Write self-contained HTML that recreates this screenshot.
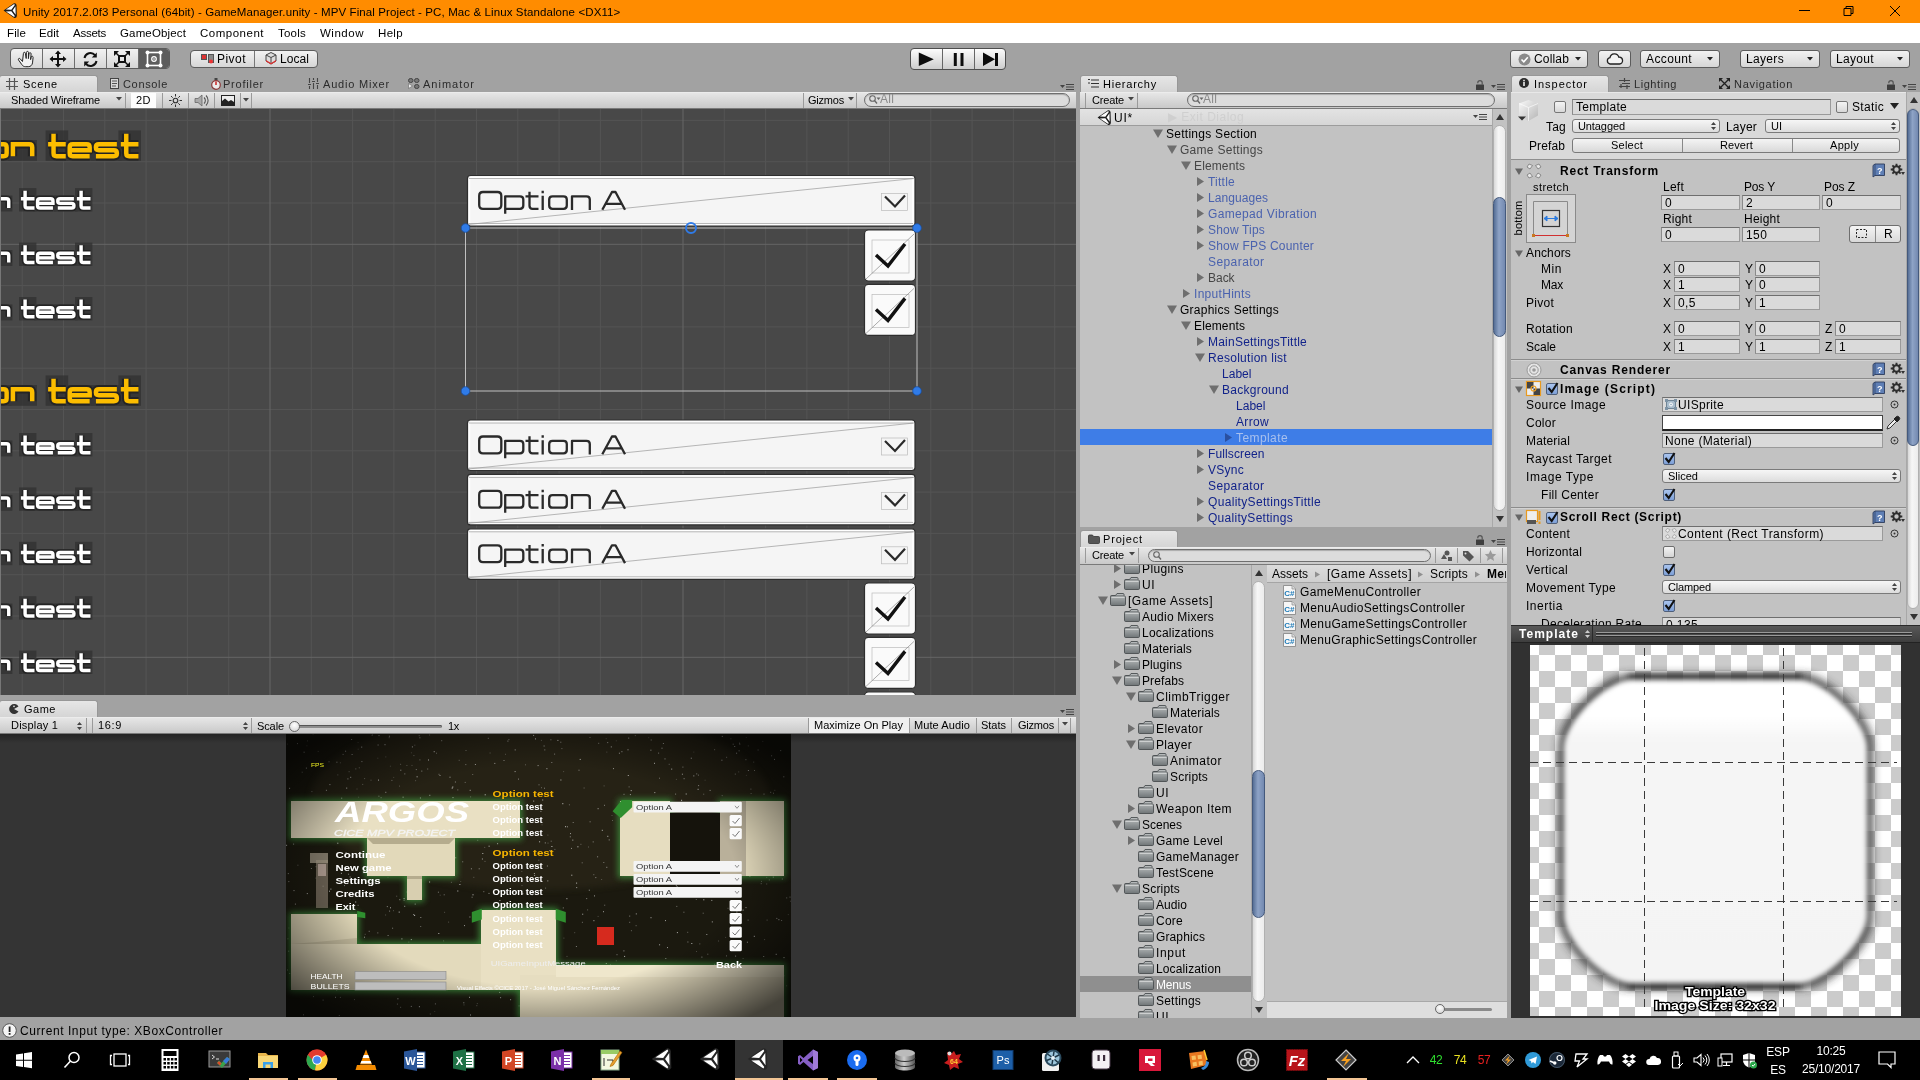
<!DOCTYPE html><html><head><meta charset="utf-8"><title>Unity</title><style>
*{box-sizing:border-box;margin:0;padding:0}
html,body{width:1920px;height:1080px;overflow:hidden;background:#a2a2a2;font-family:"Liberation Sans",sans-serif;font-size:12px;color:#000}
.a{position:absolute}
.t{position:absolute;white-space:nowrap;line-height:16px;height:16px;letter-spacing:0.45px;font-size:12px}
.b{font-weight:bold}
svg{position:absolute;overflow:visible}
</style></head><body><div id="root" style="position:absolute;left:0;top:0;width:1920px;height:1080px;will-change:transform">
<div class="a" style="left:0px;top:0px;width:1920px;height:23px;background:#ff8c00"></div>
<svg style="left:3px;top:3px" width="14" height="15.1" viewBox="0 0 21 22.600"><path d="M.8 11.300L16.500 .3Q19.800-.3 20.300 3L20.800 19.600Q20.300 22.900 17 22.300Z" fill="#1c1c1c"/><path d="M4.400 9.800L16.800 1.600 17.700 3.100 12.500 10.100ZM4.400 12.800L16.800 21 17.700 19.500 12.500 12.500ZM14.400 11.300L18.700 5 19 17.600Z" fill="#fff"/></svg>
<div class="t " style="left:23px;top:4px;font-size:11.5px;letter-spacing:0.105px;">Unity 2017.2.0f3 Personal (64bit) - GameManager.unity - MPV Final Project - PC, Mac &amp; Linux Standalone &lt;DX11&gt;</div>
<svg style="left:1790px;top:0" width="130" height="23"><path d="M9 10.5h11M54 8.5h7v7h-7zM56 8.5v-2h7v7h-2M100 6l10 10M110 6l-10 10" stroke="#000" stroke-width="1" fill="none"/></svg>
<div class="a" style="left:0px;top:23px;width:1920px;height:20px;background:#fff"></div>
<div class="t " style="left:7px;top:25px;font-size:11.5px;letter-spacing:0.113px;">File</div>
<div class="t " style="left:39px;top:25px;font-size:11.5px;letter-spacing:0.047px;">Edit</div>
<div class="t " style="left:73px;top:25px;font-size:11.5px;letter-spacing:-0.25px;">Assets</div>
<div class="t " style="left:120px;top:25px;font-size:11.5px;letter-spacing:0.148px;">GameObject</div>
<div class="t " style="left:200px;top:25px;font-size:11.5px;letter-spacing:0.509px;">Component</div>
<div class="t " style="left:278px;top:25px;font-size:11.5px;letter-spacing:0.231px;">Tools</div>
<div class="t " style="left:320px;top:25px;font-size:11.5px;letter-spacing:0.516px;">Window</div>
<div class="t " style="left:378px;top:25px;font-size:11.5px;letter-spacing:0.336px;">Help</div>
<div class="a" style="left:0px;top:43px;width:1920px;height:32px;background:#a2a2a2"></div>
<div class="a" style="left:10px;top:48px;width:160px;height:21px;background:linear-gradient(#f2f2f2,#d6d6d6);border:1px solid #5c5c5c;border-radius:4px;"></div>
<div class="a" style="left:138px;top:49px;width:31px;height:19px;background:#5d5d5d;border-radius:0 3px 3px 0"></div>
<div class="a" style="left:42px;top:49px;width:1px;height:19px;background:#6e6e6e"></div>
<div class="a" style="left:74px;top:49px;width:1px;height:19px;background:#6e6e6e"></div>
<div class="a" style="left:106px;top:49px;width:1px;height:19px;background:#6e6e6e"></div>
<div class="a" style="left:138px;top:49px;width:1px;height:19px;background:#6e6e6e"></div>
<svg style="left:16px;top:49px" width="20" height="20" viewBox="0 0 20 20"><path d="M6.500 12.500 4.200 9.800c-1-1.100-2.500.1-1.600 1.300l3.300 4.600c.9 1.300 2 2 3.800 2h2.600c2.400 0 3.900-1.700 4.200-3.800l.6-5.400c.2-1.500-1.700-1.800-2-.3l-.5 2.400.5-5.700c.1-1.500-1.900-1.700-2.100-.2l-.6 4.900.1-6.100c0-1.500-2.100-1.500-2.100 0l-.2 6-.8-5.200c-.2-1.500-2.200-1.200-2 .3z" fill="#f2f2f2" stroke="#222" stroke-width="1"/></svg>
<svg style="left:49px;top:50px" width="18" height="18" viewBox="0 0 18 18"><path d="M9 0.500 12 4H10V8H14V6l3.500 3-3.500 3V10H10v4h2l-3 3.500L6 14h2V10H4v2L.5 9 4 6v2h4V4H6z" fill="#111"/></svg>
<svg style="left:82px;top:51px" width="17" height="17" viewBox="0 0 17 17"><path d="M2.500 7A6 6 0 0 1 13 4.200M14.500 10A6 6 0 0 1 4 12.800" fill="none" stroke="#111" stroke-width="2"/><path d="M14.800 1.500v5h-5zM2.200 15.500v-5h5z" fill="#111"/></svg>
<svg style="left:113px;top:50px" width="18" height="18" viewBox="0 0 18 18"><rect x="6" y="6" width="6" height="6" fill="none" stroke="#111" stroke-width="2"/><path d="M1 1h5L1 6zM17 1v5L12 1zM1 17v-5l5 5zM17 17h-5l5-5z" fill="#111"/><path d="M2 2l4 4M16 2l-4 4M2 16l4-4M16 16l-4-4" stroke="#111" stroke-width="1.500"/></svg>
<svg style="left:145px;top:50px" width="18" height="18" viewBox="0 0 18 18"><rect x="2.500" y="2.500" width="13" height="13" fill="none" stroke="#fff" stroke-width="1.600"/><g fill="#fff"><circle cx="2.500" cy="2.500" r="2"/><circle cx="15.500" cy="2.500" r="2"/><circle cx="2.500" cy="15.500" r="2"/><circle cx="15.500" cy="15.500" r="2"/></g><circle cx="9" cy="9" r="2.300" fill="none" stroke="#fff" stroke-width="1.200"/><circle cx="9" cy="9" r=".8" fill="#fff"/></svg>
<div class="a" style="left:190px;top:50px;width:128px;height:18px;background:linear-gradient(#f2f2f2,#d6d6d6);border:1px solid #5c5c5c;border-radius:4px;"></div>
<div class="a" style="left:254px;top:51px;width:1px;height:16px;background:#777"></div>
<svg style="left:201px;top:54px" width="14" height="10"><rect x=".5" y=".5" width="5" height="5" fill="#d33" stroke="#555"/><rect x="7.500" y=".5" width="5" height="8" fill="#888" stroke="#555"/><circle cx="10" cy="7.500" r="2" fill="#e33"/></svg>
<div class="t " style="left:217px;top:51px;font-size:12px;letter-spacing:0.466px;">Pivot</div>
<svg style="left:265px;top:52px" width="12" height="13"><path d="M6 .5 11 3v6L6 12 1 9V3z" fill="#ddd" stroke="#444"/><path d="M1 3l5 2.500L11 3M6 5.500V12" stroke="#444" fill="none"/><path d="M1 8l5 3 5-3v1.500L6 12.500 1 9.500z" fill="#d33"/></svg>
<div class="t " style="left:280px;top:51px;font-size:12px;letter-spacing:0.062px;">Local</div>
<div class="a" style="left:910px;top:48px;width:96px;height:22px;background:linear-gradient(#fcfcfc,#cdcdcd);border:1px solid #4e4e4e;border-radius:4px;"></div>
<div class="a" style="left:942px;top:49px;width:1px;height:20px;background:#666"></div>
<div class="a" style="left:974px;top:49px;width:1px;height:20px;background:#666"></div>
<svg style="left:910px;top:48px" width="96" height="22"><path d="M8.800 4.400l15 6.800-15 6.700zM43.800 5h3v13h-3zM50.500 5h3v13h-3zM73 4.400l12 6.800-12 6.700zM85 5h3v13h-3z" fill="#0c0c0c"/></svg>
<div class="a" style="left:1510px;top:50px;width:78px;height:18px;background:linear-gradient(#f2f2f2,#d6d6d6);border:1px solid #5c5c5c;border-radius:4px;border-radius:3px;"></div>
<div class="t " style="left:1534px;top:51px;font-size:12px;letter-spacing:0.161px;">Collab</div>
<svg style="left:1575px;top:57px" width="7" height="4"><path d="M0 0h6L3 3.500z" fill="#222"/></svg>
<svg style="left:1518px;top:53px" width="13" height="13"><circle cx="6.500" cy="6.500" r="6" fill="#8a8a8a"/><path d="M3.500 6.500l2.300 2.300 4-4.500" stroke="#fff" stroke-width="1.600" fill="none"/></svg>
<div class="a" style="left:1598px;top:50px;width:33px;height:18px;background:linear-gradient(#f2f2f2,#d6d6d6);border:1px solid #5c5c5c;border-radius:4px;border-radius:3px;"></div>
<svg style="left:1606px;top:53px" width="18" height="12"><path d="M4 11a3.200 3.200 0 0 1 0-6.300 4.500 4.500 0 0 1 8.800-.5 3.300 3.300 0 0 1 .7 6.800z" fill="#f4f4f4" stroke="#222" stroke-width="1.300"/></svg>
<div class="a" style="left:1640px;top:50px;width:80px;height:18px;background:linear-gradient(#f2f2f2,#d6d6d6);border:1px solid #5c5c5c;border-radius:4px;border-radius:3px;"></div>
<div class="t " style="left:1646px;top:51px;font-size:12px;letter-spacing:0.379px;">Account</div>
<svg style="left:1707px;top:57px" width="7" height="4"><path d="M0 0h6L3 3.500z" fill="#222"/></svg>
<div class="a" style="left:1740px;top:50px;width:80px;height:18px;background:linear-gradient(#f2f2f2,#d6d6d6);border:1px solid #5c5c5c;border-radius:4px;border-radius:3px;"></div>
<div class="t " style="left:1746px;top:51px;font-size:12px;letter-spacing:0.331px;">Layers</div>
<svg style="left:1807px;top:57px" width="7" height="4"><path d="M0 0h6L3 3.500z" fill="#222"/></svg>
<div class="a" style="left:1830px;top:50px;width:80px;height:18px;background:linear-gradient(#f2f2f2,#d6d6d6);border:1px solid #5c5c5c;border-radius:4px;border-radius:3px;"></div>
<div class="t " style="left:1836px;top:51px;font-size:12px;letter-spacing:0.331px;">Layout</div>
<svg style="left:1897px;top:57px" width="7" height="4"><path d="M0 0h6L3 3.500z" fill="#222"/></svg>
<div class="a" style="left:-1px;top:75px;width:99px;height:18px;background:linear-gradient(#e6e6e6,#d4d4d4);border:1px solid #979797;border-bottom:none;border-radius:3px 3px 0 0;"></div>
<svg style="left:6px;top:78px" width="12" height="12"><path d="M3.500 0v12M8.500 0v12M0 3.500h12M0 8.500h12" stroke="#555" stroke-width="1.200"/></svg>
<div class="t " style="left:23px;top:76px;font-size:11px;letter-spacing:0.756px;">Scene</div>
<svg style="left:110px;top:78px" width="9" height="11"><rect x=".5" y=".5" width="8" height="10" fill="#d8d8d8" stroke="#444"/><path d="M2 3h5M2 5.500h5M2 8h4" stroke="#555"/></svg>
<div class="t " style="left:123px;top:76px;font-size:11px;letter-spacing:0.661px;color:#2b2b2b;">Console</div>
<svg style="left:211px;top:78px" width="10" height="12"><circle cx="5" cy="7" r="4.300" fill="#ececec" stroke="#8a3a3a" stroke-width="1.200"/><path d="M5 7V3.500" stroke="#c22" stroke-width="1.500"/><rect x="3.500" y="0" width="3" height="2" fill="#444"/></svg>
<div class="t " style="left:223px;top:76px;font-size:11px;letter-spacing:0.77px;color:#2b2b2b;">Profiler</div>
<svg style="left:308px;top:78px" width="11" height="11"><path d="M1.500 0v11M5.500 0v11M9.500 0v11" stroke="#444" stroke-width="1.100"/><path d="M0 6.500h3M4 3.500h3M8 5.500h3" stroke="#a2a2a2" stroke-width="3"/><path d="M0 6.500h3M4 3.500h3M8 5.500h3" stroke="#444" stroke-width="1.200"/></svg>
<div class="t " style="left:323px;top:76px;font-size:11px;letter-spacing:0.81px;color:#2b2b2b;">Audio Mixer</div>
<svg style="left:408px;top:78px" width="12" height="12"><g fill="#777" stroke="#444"><rect x=".5" y=".5" width="4.500" height="4" rx="2"/><rect x="6.500" y=".5" width="4.500" height="4" rx="2"/><rect x="6.500" y="6.500" width="4.500" height="4" rx="2"/></g><path d="M.5 5.500v5l4-2.500z" fill="#eee" stroke="#666" stroke-width=".6"/></svg>
<div class="t " style="left:423px;top:76px;font-size:11px;letter-spacing:0.996px;color:#2b2b2b;">Animator</div>
<svg style="left:1060px;top:84px" width="14" height="7"><path d="M0 1h5L2.500 4z" fill="#444"/><path d="M6 .5h8M6 3h8M6 5.500h8" stroke="#444" stroke-width="1"/></svg>
<div class="a" style="left:0px;top:92px;width:1076px;height:17px;background:linear-gradient(#e6e6e6,#c9c9c9);border-bottom:1px solid #7a7a7a;border-top:1px solid #ececec;"></div>
<div class="t " style="left:11px;top:92px;font-size:11px;letter-spacing:-0.172px;">Shaded Wireframe</div>
<svg style="left:116px;top:97px" width="6" height="4"><path d="M0 0h6L3 3.500z" fill="#444"/></svg>
<div class="a" style="left:125px;top:93px;width:1px;height:15px;background:#9a9a9a"></div>
<div class="a" style="left:162px;top:93px;width:1px;height:15px;background:#9a9a9a"></div>
<div class="a" style="left:188px;top:93px;width:1px;height:15px;background:#9a9a9a"></div>
<div class="a" style="left:214px;top:93px;width:1px;height:15px;background:#9a9a9a"></div>
<div class="a" style="left:240px;top:93px;width:1px;height:15px;background:#9a9a9a"></div>
<div class="a" style="left:251px;top:93px;width:1px;height:15px;background:#9a9a9a"></div>
<div class="a" style="left:803px;top:93px;width:1px;height:15px;background:#9a9a9a"></div>
<div class="a" style="left:856px;top:93px;width:1px;height:15px;background:#9a9a9a"></div>
<div class="a" style="left:131px;top:93px;width:25px;height:15px;background:#fdfdfd"></div>
<div class="t " style="left:136px;top:92px;font-size:11px;letter-spacing:0.469px;">2D</div>
<svg style="left:169px;top:94px" width="13" height="13"><circle cx="6.500" cy="6.500" r="2.300" fill="none" stroke="#333" stroke-width="1.100"/><path d="M6.500 0v2.500M6.500 10.500V13M0 6.500h2.500M10.500 6.500H13M2 2l1.700 1.700M9.300 9.300L11 11M2 11l1.700-1.700M9.300 3.700L11 2" stroke="#333" stroke-width="1"/></svg>
<svg style="left:194px;top:94px" width="15" height="13"><path d="M1 4.500h3L8 1v11L4 8.500H1z" fill="#aaa" stroke="#666" stroke-width=".8"/><path d="M10 3.500a4 4 0 0 1 0 6M12 1.500a7 7 0 0 1 0 10" fill="none" stroke="#555" stroke-width="1.100"/></svg>
<svg style="left:221px;top:95px" width="14" height="11"><rect x=".5" y=".5" width="13" height="10" fill="#eee" stroke="#222"/><path d="M1 10V6l3-2.500 3.500 3L10 5l3 2v3z" fill="#222"/></svg>
<svg style="left:243px;top:98px" width="6" height="4"><path d="M0 0h6L3 3.500z" fill="#444"/></svg>
<div class="t " style="left:808px;top:92px;font-size:11px;letter-spacing:-0.214px;">Gizmos</div>
<svg style="left:848px;top:97px" width="6" height="4"><path d="M0 0h6L3 3.500z" fill="#444"/></svg>
<div class="a" style="left:864px;top:93px;width:206px;height:14px;background:#dcdcdc;border:1px solid #6f6f6f;border-radius:7px;box-shadow:inset 0 1px 1px #aaa"></div>
<svg style="left:869px;top:95px" width="12" height="10"><circle cx="3.500" cy="3.500" r="2.800" fill="none" stroke="#666" stroke-width="1.100"/><path d="M5.500 5.500l2.500 3" stroke="#666" stroke-width="1.300"/><path d="M7.500 2.500h4L9.500 5z" fill="#666"/></svg>
<div class="t " style="left:880px;top:91px;color:#8a8a8a;font-size:12px;letter-spacing:.3px">All</div>
<svg style="left:0;top:109px;overflow:hidden" width="1076" height="586" viewBox="0 109 1076 586"><rect x="0" y="109" width="1076" height="586" fill="#484848"/><path d="M22.2 109V695M63.5 109V695M104.8 109V695M146.1 109V695M187.4 109V695M228.7 109V695M311.3 109V695M352.6 109V695M393.9 109V695M435.2 109V695M476.5 109V695M517.8 109V695M559.1 109V695M600.4 109V695M641.7 109V695M724.3 109V695M765.6 109V695M806.9 109V695M848.2 109V695M889.5 109V695M930.8 109V695M972.1 109V695M1013.4 109V695M1054.7 109V695M0 120.4H1076M0 161.7H1076M0 203.0H1076M0 285.6H1076M0 326.9H1076M0 368.2H1076M0 409.5H1076M0 450.8H1076M0 492.1H1076M0 533.4H1076M0 574.7H1076M0 616.0H1076" stroke="#545454" stroke-width="1" fill="none"/><path d="M270.0 109V695M683.0 109V695M0 244.3H1076M0 657.3H1076" stroke="#666" stroke-width="1" fill="none"/><g fill="#303030" opacity=".75"><rect x="-18.3" y="140.0" width="29.7" height="20.8"/><rect x="8.1" y="140.0" width="28.9" height="20.8"/><rect x="45.6" y="130.4" width="22.6" height="30.4"/><rect x="64.9" y="140.0" width="29.5" height="20.8"/><rect x="91.1" y="140.0" width="30.5" height="20.8"/><rect x="118.4" y="130.4" width="22.6" height="30.4"/></g><g fill="none" stroke-linejoin="round" stroke="#242424" stroke-width=".52"><path transform="translate(-15.8,142.0) scale(16.5)" d="M.32.14H1.18Q1.36 .14 1.36 .32V.68Q1.36 .86 1.18 .86H.32Q.14.86.14.68V.32Q.14.14.32.14Z"/><path transform="translate(10.6,142.0) scale(16.5)" d="M.14.86V.14H1.13Q1.31 .14 1.31 .32V.86"/><path transform="translate(48.1,142.0) scale(16.5)" d="M.33-.5V.68Q.33.86.51.86H1.07M0 .14H1.07"/><path transform="translate(67.4,142.0) scale(16.5)" d="M.14.5H1.35V.32Q1.35 .14 1.17 .14H.32Q.14.14.14.32V.68Q.14.86.32.86H1.35"/><path transform="translate(93.6,142.0) scale(16.5)" d="M1.41 .14H.32Q.14.14.14.3V.34Q.14.5.32.5H1.23Q1.41 .5 1.41 .66V.7Q1.41 .86 1.23 .86H.14"/><path transform="translate(120.8,142.0) scale(16.5)" d="M.33-.5V.68Q.33.86.51.86H1.07M0 .14H1.07"/></g><g fill="none" stroke="#fcbd00" stroke-width=".27"><path transform="translate(-15.8,142.0) scale(16.5)" d="M.32.14H1.18Q1.36 .14 1.36 .32V.68Q1.36 .86 1.18 .86H.32Q.14.86.14.68V.32Q.14.14.32.14Z"/><path transform="translate(10.6,142.0) scale(16.5)" d="M.14.86V.14H1.13Q1.31 .14 1.31 .32V.86"/><path transform="translate(48.1,142.0) scale(16.5)" d="M.33-.5V.68Q.33.86.51.86H1.07M0 .14H1.07"/><path transform="translate(67.4,142.0) scale(16.5)" d="M.14.5H1.35V.32Q1.35 .14 1.17 .14H.32Q.14.14.14.32V.68Q.14.86.32.86H1.35"/><path transform="translate(93.6,142.0) scale(16.5)" d="M1.41 .14H.32Q.14.14.14.3V.34Q.14.5.32.5H1.23Q1.41 .5 1.41 .66V.7Q1.41 .86 1.23 .86H.14"/><path transform="translate(120.8,142.0) scale(16.5)" d="M.33-.5V.68Q.33.86.51.86H1.07M0 .14H1.07"/></g><g fill="#303030" opacity=".75"><rect x="-18.3" y="385.0" width="29.7" height="20.8"/><rect x="8.1" y="385.0" width="28.9" height="20.8"/><rect x="45.6" y="375.4" width="22.6" height="30.4"/><rect x="64.9" y="385.0" width="29.5" height="20.8"/><rect x="91.1" y="385.0" width="30.5" height="20.8"/><rect x="118.4" y="375.4" width="22.6" height="30.4"/></g><g fill="none" stroke-linejoin="round" stroke="#242424" stroke-width=".52"><path transform="translate(-15.8,387.0) scale(16.5)" d="M.32.14H1.18Q1.36 .14 1.36 .32V.68Q1.36 .86 1.18 .86H.32Q.14.86.14.68V.32Q.14.14.32.14Z"/><path transform="translate(10.6,387.0) scale(16.5)" d="M.14.86V.14H1.13Q1.31 .14 1.31 .32V.86"/><path transform="translate(48.1,387.0) scale(16.5)" d="M.33-.5V.68Q.33.86.51.86H1.07M0 .14H1.07"/><path transform="translate(67.4,387.0) scale(16.5)" d="M.14.5H1.35V.32Q1.35 .14 1.17 .14H.32Q.14.14.14.32V.68Q.14.86.32.86H1.35"/><path transform="translate(93.6,387.0) scale(16.5)" d="M1.41 .14H.32Q.14.14.14.3V.34Q.14.5.32.5H1.23Q1.41 .5 1.41 .66V.7Q1.41 .86 1.23 .86H.14"/><path transform="translate(120.8,387.0) scale(16.5)" d="M.33-.5V.68Q.33.86.51.86H1.07M0 .14H1.07"/></g><g fill="none" stroke="#fcbd00" stroke-width=".27"><path transform="translate(-15.8,387.0) scale(16.5)" d="M.32.14H1.18Q1.36 .14 1.36 .32V.68Q1.36 .86 1.18 .86H.32Q.14.86.14.68V.32Q.14.14.32.14Z"/><path transform="translate(10.6,387.0) scale(16.5)" d="M.14.86V.14H1.13Q1.31 .14 1.31 .32V.86"/><path transform="translate(48.1,387.0) scale(16.5)" d="M.33-.5V.68Q.33.86.51.86H1.07M0 .14H1.07"/><path transform="translate(67.4,387.0) scale(16.5)" d="M.14.5H1.35V.32Q1.35 .14 1.17 .14H.32Q.14.14.14.32V.68Q.14.86.32.86H1.35"/><path transform="translate(93.6,387.0) scale(16.5)" d="M1.41 .14H.32Q.14.14.14.3V.34Q.14.5.32.5H1.23Q1.41 .5 1.41 .66V.7Q1.41 .86 1.23 .86H.14"/><path transform="translate(120.8,387.0) scale(16.5)" d="M.33-.5V.68Q.33.86.51.86H1.07M0 .14H1.07"/></g><g fill="#303030" opacity=".75"><rect x="-30.1" y="195.5" width="22.9" height="16.0"/><rect x="-9.8" y="195.5" width="22.2" height="16.0"/><rect x="19.0" y="188.1" width="17.4" height="23.4"/><rect x="33.9" y="195.5" width="22.7" height="16.0"/><rect x="54.1" y="195.5" width="23.5" height="16.0"/><rect x="75.0" y="188.1" width="17.4" height="23.4"/></g><g fill="none" stroke-linejoin="round" stroke="#242424" stroke-width=".52"><path transform="translate(-28.2,197.0) scale(12.7)" d="M.32.14H1.18Q1.36 .14 1.36 .32V.68Q1.36 .86 1.18 .86H.32Q.14.86.14.68V.32Q.14.14.32.14Z"/><path transform="translate(-7.9,197.0) scale(12.7)" d="M.14.86V.14H1.13Q1.31 .14 1.31 .32V.86"/><path transform="translate(20.9,197.0) scale(12.7)" d="M.33-.5V.68Q.33.86.51.86H1.07M0 .14H1.07"/><path transform="translate(35.8,197.0) scale(12.7)" d="M.14.5H1.35V.32Q1.35 .14 1.17 .14H.32Q.14.14.14.32V.68Q.14.86.32.86H1.35"/><path transform="translate(56.0,197.0) scale(12.7)" d="M1.41 .14H.32Q.14.14.14.3V.34Q.14.5.32.5H1.23Q1.41 .5 1.41 .66V.7Q1.41 .86 1.23 .86H.14"/><path transform="translate(76.9,197.0) scale(12.7)" d="M.33-.5V.68Q.33.86.51.86H1.07M0 .14H1.07"/></g><g fill="none" stroke="#fff" stroke-width=".27"><path transform="translate(-28.2,197.0) scale(12.7)" d="M.32.14H1.18Q1.36 .14 1.36 .32V.68Q1.36 .86 1.18 .86H.32Q.14.86.14.68V.32Q.14.14.32.14Z"/><path transform="translate(-7.9,197.0) scale(12.7)" d="M.14.86V.14H1.13Q1.31 .14 1.31 .32V.86"/><path transform="translate(20.9,197.0) scale(12.7)" d="M.33-.5V.68Q.33.86.51.86H1.07M0 .14H1.07"/><path transform="translate(35.8,197.0) scale(12.7)" d="M.14.5H1.35V.32Q1.35 .14 1.17 .14H.32Q.14.14.14.32V.68Q.14.86.32.86H1.35"/><path transform="translate(56.0,197.0) scale(12.7)" d="M1.41 .14H.32Q.14.14.14.3V.34Q.14.5.32.5H1.23Q1.41 .5 1.41 .66V.7Q1.41 .86 1.23 .86H.14"/><path transform="translate(76.9,197.0) scale(12.7)" d="M.33-.5V.68Q.33.86.51.86H1.07M0 .14H1.07"/></g><g fill="#303030" opacity=".75"><rect x="-30.1" y="250.0" width="22.9" height="16.0"/><rect x="-9.8" y="250.0" width="22.2" height="16.0"/><rect x="19.0" y="242.6" width="17.4" height="23.4"/><rect x="33.9" y="250.0" width="22.7" height="16.0"/><rect x="54.1" y="250.0" width="23.5" height="16.0"/><rect x="75.0" y="242.6" width="17.4" height="23.4"/></g><g fill="none" stroke-linejoin="round" stroke="#242424" stroke-width=".52"><path transform="translate(-28.2,251.5) scale(12.7)" d="M.32.14H1.18Q1.36 .14 1.36 .32V.68Q1.36 .86 1.18 .86H.32Q.14.86.14.68V.32Q.14.14.32.14Z"/><path transform="translate(-7.9,251.5) scale(12.7)" d="M.14.86V.14H1.13Q1.31 .14 1.31 .32V.86"/><path transform="translate(20.9,251.5) scale(12.7)" d="M.33-.5V.68Q.33.86.51.86H1.07M0 .14H1.07"/><path transform="translate(35.8,251.5) scale(12.7)" d="M.14.5H1.35V.32Q1.35 .14 1.17 .14H.32Q.14.14.14.32V.68Q.14.86.32.86H1.35"/><path transform="translate(56.0,251.5) scale(12.7)" d="M1.41 .14H.32Q.14.14.14.3V.34Q.14.5.32.5H1.23Q1.41 .5 1.41 .66V.7Q1.41 .86 1.23 .86H.14"/><path transform="translate(76.9,251.5) scale(12.7)" d="M.33-.5V.68Q.33.86.51.86H1.07M0 .14H1.07"/></g><g fill="none" stroke="#fff" stroke-width=".27"><path transform="translate(-28.2,251.5) scale(12.7)" d="M.32.14H1.18Q1.36 .14 1.36 .32V.68Q1.36 .86 1.18 .86H.32Q.14.86.14.68V.32Q.14.14.32.14Z"/><path transform="translate(-7.9,251.5) scale(12.7)" d="M.14.86V.14H1.13Q1.31 .14 1.31 .32V.86"/><path transform="translate(20.9,251.5) scale(12.7)" d="M.33-.5V.68Q.33.86.51.86H1.07M0 .14H1.07"/><path transform="translate(35.8,251.5) scale(12.7)" d="M.14.5H1.35V.32Q1.35 .14 1.17 .14H.32Q.14.14.14.32V.68Q.14.86.32.86H1.35"/><path transform="translate(56.0,251.5) scale(12.7)" d="M1.41 .14H.32Q.14.14.14.3V.34Q.14.5.32.5H1.23Q1.41 .5 1.41 .66V.7Q1.41 .86 1.23 .86H.14"/><path transform="translate(76.9,251.5) scale(12.7)" d="M.33-.5V.68Q.33.86.51.86H1.07M0 .14H1.07"/></g><g fill="#303030" opacity=".75"><rect x="-30.1" y="304.4" width="22.9" height="16.0"/><rect x="-9.8" y="304.4" width="22.2" height="16.0"/><rect x="19.0" y="297.0" width="17.4" height="23.4"/><rect x="33.9" y="304.4" width="22.7" height="16.0"/><rect x="54.1" y="304.4" width="23.5" height="16.0"/><rect x="75.0" y="297.0" width="17.4" height="23.4"/></g><g fill="none" stroke-linejoin="round" stroke="#242424" stroke-width=".52"><path transform="translate(-28.2,305.9) scale(12.7)" d="M.32.14H1.18Q1.36 .14 1.36 .32V.68Q1.36 .86 1.18 .86H.32Q.14.86.14.68V.32Q.14.14.32.14Z"/><path transform="translate(-7.9,305.9) scale(12.7)" d="M.14.86V.14H1.13Q1.31 .14 1.31 .32V.86"/><path transform="translate(20.9,305.9) scale(12.7)" d="M.33-.5V.68Q.33.86.51.86H1.07M0 .14H1.07"/><path transform="translate(35.8,305.9) scale(12.7)" d="M.14.5H1.35V.32Q1.35 .14 1.17 .14H.32Q.14.14.14.32V.68Q.14.86.32.86H1.35"/><path transform="translate(56.0,305.9) scale(12.7)" d="M1.41 .14H.32Q.14.14.14.3V.34Q.14.5.32.5H1.23Q1.41 .5 1.41 .66V.7Q1.41 .86 1.23 .86H.14"/><path transform="translate(76.9,305.9) scale(12.7)" d="M.33-.5V.68Q.33.86.51.86H1.07M0 .14H1.07"/></g><g fill="none" stroke="#fff" stroke-width=".27"><path transform="translate(-28.2,305.9) scale(12.7)" d="M.32.14H1.18Q1.36 .14 1.36 .32V.68Q1.36 .86 1.18 .86H.32Q.14.86.14.68V.32Q.14.14.32.14Z"/><path transform="translate(-7.9,305.9) scale(12.7)" d="M.14.86V.14H1.13Q1.31 .14 1.31 .32V.86"/><path transform="translate(20.9,305.9) scale(12.7)" d="M.33-.5V.68Q.33.86.51.86H1.07M0 .14H1.07"/><path transform="translate(35.8,305.9) scale(12.7)" d="M.14.5H1.35V.32Q1.35 .14 1.17 .14H.32Q.14.14.14.32V.68Q.14.86.32.86H1.35"/><path transform="translate(56.0,305.9) scale(12.7)" d="M1.41 .14H.32Q.14.14.14.3V.34Q.14.5.32.5H1.23Q1.41 .5 1.41 .66V.7Q1.41 .86 1.23 .86H.14"/><path transform="translate(76.9,305.9) scale(12.7)" d="M.33-.5V.68Q.33.86.51.86H1.07M0 .14H1.07"/></g><g fill="#303030" opacity=".75"><rect x="-30.1" y="440.4" width="22.9" height="16.0"/><rect x="-9.8" y="440.4" width="22.2" height="16.0"/><rect x="19.0" y="433.0" width="17.4" height="23.4"/><rect x="33.9" y="440.4" width="22.7" height="16.0"/><rect x="54.1" y="440.4" width="23.5" height="16.0"/><rect x="75.0" y="433.0" width="17.4" height="23.4"/></g><g fill="none" stroke-linejoin="round" stroke="#242424" stroke-width=".52"><path transform="translate(-28.2,441.9) scale(12.7)" d="M.32.14H1.18Q1.36 .14 1.36 .32V.68Q1.36 .86 1.18 .86H.32Q.14.86.14.68V.32Q.14.14.32.14Z"/><path transform="translate(-7.9,441.9) scale(12.7)" d="M.14.86V.14H1.13Q1.31 .14 1.31 .32V.86"/><path transform="translate(20.9,441.9) scale(12.7)" d="M.33-.5V.68Q.33.86.51.86H1.07M0 .14H1.07"/><path transform="translate(35.8,441.9) scale(12.7)" d="M.14.5H1.35V.32Q1.35 .14 1.17 .14H.32Q.14.14.14.32V.68Q.14.86.32.86H1.35"/><path transform="translate(56.0,441.9) scale(12.7)" d="M1.41 .14H.32Q.14.14.14.3V.34Q.14.5.32.5H1.23Q1.41 .5 1.41 .66V.7Q1.41 .86 1.23 .86H.14"/><path transform="translate(76.9,441.9) scale(12.7)" d="M.33-.5V.68Q.33.86.51.86H1.07M0 .14H1.07"/></g><g fill="none" stroke="#fff" stroke-width=".27"><path transform="translate(-28.2,441.9) scale(12.7)" d="M.32.14H1.18Q1.36 .14 1.36 .32V.68Q1.36 .86 1.18 .86H.32Q.14.86.14.68V.32Q.14.14.32.14Z"/><path transform="translate(-7.9,441.9) scale(12.7)" d="M.14.86V.14H1.13Q1.31 .14 1.31 .32V.86"/><path transform="translate(20.9,441.9) scale(12.7)" d="M.33-.5V.68Q.33.86.51.86H1.07M0 .14H1.07"/><path transform="translate(35.8,441.9) scale(12.7)" d="M.14.5H1.35V.32Q1.35 .14 1.17 .14H.32Q.14.14.14.32V.68Q.14.86.32.86H1.35"/><path transform="translate(56.0,441.9) scale(12.7)" d="M1.41 .14H.32Q.14.14.14.3V.34Q.14.5.32.5H1.23Q1.41 .5 1.41 .66V.7Q1.41 .86 1.23 .86H.14"/><path transform="translate(76.9,441.9) scale(12.7)" d="M.33-.5V.68Q.33.86.51.86H1.07M0 .14H1.07"/></g><g fill="#303030" opacity=".75"><rect x="-30.1" y="494.8" width="22.9" height="16.0"/><rect x="-9.8" y="494.8" width="22.2" height="16.0"/><rect x="19.0" y="487.4" width="17.4" height="23.4"/><rect x="33.9" y="494.8" width="22.7" height="16.0"/><rect x="54.1" y="494.8" width="23.5" height="16.0"/><rect x="75.0" y="487.4" width="17.4" height="23.4"/></g><g fill="none" stroke-linejoin="round" stroke="#242424" stroke-width=".52"><path transform="translate(-28.2,496.3) scale(12.7)" d="M.32.14H1.18Q1.36 .14 1.36 .32V.68Q1.36 .86 1.18 .86H.32Q.14.86.14.68V.32Q.14.14.32.14Z"/><path transform="translate(-7.9,496.3) scale(12.7)" d="M.14.86V.14H1.13Q1.31 .14 1.31 .32V.86"/><path transform="translate(20.9,496.3) scale(12.7)" d="M.33-.5V.68Q.33.86.51.86H1.07M0 .14H1.07"/><path transform="translate(35.8,496.3) scale(12.7)" d="M.14.5H1.35V.32Q1.35 .14 1.17 .14H.32Q.14.14.14.32V.68Q.14.86.32.86H1.35"/><path transform="translate(56.0,496.3) scale(12.7)" d="M1.41 .14H.32Q.14.14.14.3V.34Q.14.5.32.5H1.23Q1.41 .5 1.41 .66V.7Q1.41 .86 1.23 .86H.14"/><path transform="translate(76.9,496.3) scale(12.7)" d="M.33-.5V.68Q.33.86.51.86H1.07M0 .14H1.07"/></g><g fill="none" stroke="#fff" stroke-width=".27"><path transform="translate(-28.2,496.3) scale(12.7)" d="M.32.14H1.18Q1.36 .14 1.36 .32V.68Q1.36 .86 1.18 .86H.32Q.14.86.14.68V.32Q.14.14.32.14Z"/><path transform="translate(-7.9,496.3) scale(12.7)" d="M.14.86V.14H1.13Q1.31 .14 1.31 .32V.86"/><path transform="translate(20.9,496.3) scale(12.7)" d="M.33-.5V.68Q.33.86.51.86H1.07M0 .14H1.07"/><path transform="translate(35.8,496.3) scale(12.7)" d="M.14.5H1.35V.32Q1.35 .14 1.17 .14H.32Q.14.14.14.32V.68Q.14.86.32.86H1.35"/><path transform="translate(56.0,496.3) scale(12.7)" d="M1.41 .14H.32Q.14.14.14.3V.34Q.14.5.32.5H1.23Q1.41 .5 1.41 .66V.7Q1.41 .86 1.23 .86H.14"/><path transform="translate(76.9,496.3) scale(12.7)" d="M.33-.5V.68Q.33.86.51.86H1.07M0 .14H1.07"/></g><g fill="#303030" opacity=".75"><rect x="-30.1" y="549.2" width="22.9" height="16.0"/><rect x="-9.8" y="549.2" width="22.2" height="16.0"/><rect x="19.0" y="541.8" width="17.4" height="23.4"/><rect x="33.9" y="549.2" width="22.7" height="16.0"/><rect x="54.1" y="549.2" width="23.5" height="16.0"/><rect x="75.0" y="541.8" width="17.4" height="23.4"/></g><g fill="none" stroke-linejoin="round" stroke="#242424" stroke-width=".52"><path transform="translate(-28.2,550.7) scale(12.7)" d="M.32.14H1.18Q1.36 .14 1.36 .32V.68Q1.36 .86 1.18 .86H.32Q.14.86.14.68V.32Q.14.14.32.14Z"/><path transform="translate(-7.9,550.7) scale(12.7)" d="M.14.86V.14H1.13Q1.31 .14 1.31 .32V.86"/><path transform="translate(20.9,550.7) scale(12.7)" d="M.33-.5V.68Q.33.86.51.86H1.07M0 .14H1.07"/><path transform="translate(35.8,550.7) scale(12.7)" d="M.14.5H1.35V.32Q1.35 .14 1.17 .14H.32Q.14.14.14.32V.68Q.14.86.32.86H1.35"/><path transform="translate(56.0,550.7) scale(12.7)" d="M1.41 .14H.32Q.14.14.14.3V.34Q.14.5.32.5H1.23Q1.41 .5 1.41 .66V.7Q1.41 .86 1.23 .86H.14"/><path transform="translate(76.9,550.7) scale(12.7)" d="M.33-.5V.68Q.33.86.51.86H1.07M0 .14H1.07"/></g><g fill="none" stroke="#fff" stroke-width=".27"><path transform="translate(-28.2,550.7) scale(12.7)" d="M.32.14H1.18Q1.36 .14 1.36 .32V.68Q1.36 .86 1.18 .86H.32Q.14.86.14.68V.32Q.14.14.32.14Z"/><path transform="translate(-7.9,550.7) scale(12.7)" d="M.14.86V.14H1.13Q1.31 .14 1.31 .32V.86"/><path transform="translate(20.9,550.7) scale(12.7)" d="M.33-.5V.68Q.33.86.51.86H1.07M0 .14H1.07"/><path transform="translate(35.8,550.7) scale(12.7)" d="M.14.5H1.35V.32Q1.35 .14 1.17 .14H.32Q.14.14.14.32V.68Q.14.86.32.86H1.35"/><path transform="translate(56.0,550.7) scale(12.7)" d="M1.41 .14H.32Q.14.14.14.3V.34Q.14.5.32.5H1.23Q1.41 .5 1.41 .66V.7Q1.41 .86 1.23 .86H.14"/><path transform="translate(76.9,550.7) scale(12.7)" d="M.33-.5V.68Q.33.86.51.86H1.07M0 .14H1.07"/></g><g fill="#303030" opacity=".75"><rect x="-30.1" y="603.6" width="22.9" height="16.0"/><rect x="-9.8" y="603.6" width="22.2" height="16.0"/><rect x="19.0" y="596.2" width="17.4" height="23.4"/><rect x="33.9" y="603.6" width="22.7" height="16.0"/><rect x="54.1" y="603.6" width="23.5" height="16.0"/><rect x="75.0" y="596.2" width="17.4" height="23.4"/></g><g fill="none" stroke-linejoin="round" stroke="#242424" stroke-width=".52"><path transform="translate(-28.2,605.1) scale(12.7)" d="M.32.14H1.18Q1.36 .14 1.36 .32V.68Q1.36 .86 1.18 .86H.32Q.14.86.14.68V.32Q.14.14.32.14Z"/><path transform="translate(-7.9,605.1) scale(12.7)" d="M.14.86V.14H1.13Q1.31 .14 1.31 .32V.86"/><path transform="translate(20.9,605.1) scale(12.7)" d="M.33-.5V.68Q.33.86.51.86H1.07M0 .14H1.07"/><path transform="translate(35.8,605.1) scale(12.7)" d="M.14.5H1.35V.32Q1.35 .14 1.17 .14H.32Q.14.14.14.32V.68Q.14.86.32.86H1.35"/><path transform="translate(56.0,605.1) scale(12.7)" d="M1.41 .14H.32Q.14.14.14.3V.34Q.14.5.32.5H1.23Q1.41 .5 1.41 .66V.7Q1.41 .86 1.23 .86H.14"/><path transform="translate(76.9,605.1) scale(12.7)" d="M.33-.5V.68Q.33.86.51.86H1.07M0 .14H1.07"/></g><g fill="none" stroke="#fff" stroke-width=".27"><path transform="translate(-28.2,605.1) scale(12.7)" d="M.32.14H1.18Q1.36 .14 1.36 .32V.68Q1.36 .86 1.18 .86H.32Q.14.86.14.68V.32Q.14.14.32.14Z"/><path transform="translate(-7.9,605.1) scale(12.7)" d="M.14.86V.14H1.13Q1.31 .14 1.31 .32V.86"/><path transform="translate(20.9,605.1) scale(12.7)" d="M.33-.5V.68Q.33.86.51.86H1.07M0 .14H1.07"/><path transform="translate(35.8,605.1) scale(12.7)" d="M.14.5H1.35V.32Q1.35 .14 1.17 .14H.32Q.14.14.14.32V.68Q.14.86.32.86H1.35"/><path transform="translate(56.0,605.1) scale(12.7)" d="M1.41 .14H.32Q.14.14.14.3V.34Q.14.5.32.5H1.23Q1.41 .5 1.41 .66V.7Q1.41 .86 1.23 .86H.14"/><path transform="translate(76.9,605.1) scale(12.7)" d="M.33-.5V.68Q.33.86.51.86H1.07M0 .14H1.07"/></g><g fill="#303030" opacity=".75"><rect x="-30.1" y="658.0" width="22.9" height="16.0"/><rect x="-9.8" y="658.0" width="22.2" height="16.0"/><rect x="19.0" y="650.6" width="17.4" height="23.4"/><rect x="33.9" y="658.0" width="22.7" height="16.0"/><rect x="54.1" y="658.0" width="23.5" height="16.0"/><rect x="75.0" y="650.6" width="17.4" height="23.4"/></g><g fill="none" stroke-linejoin="round" stroke="#242424" stroke-width=".52"><path transform="translate(-28.2,659.5) scale(12.7)" d="M.32.14H1.18Q1.36 .14 1.36 .32V.68Q1.36 .86 1.18 .86H.32Q.14.86.14.68V.32Q.14.14.32.14Z"/><path transform="translate(-7.9,659.5) scale(12.7)" d="M.14.86V.14H1.13Q1.31 .14 1.31 .32V.86"/><path transform="translate(20.9,659.5) scale(12.7)" d="M.33-.5V.68Q.33.86.51.86H1.07M0 .14H1.07"/><path transform="translate(35.8,659.5) scale(12.7)" d="M.14.5H1.35V.32Q1.35 .14 1.17 .14H.32Q.14.14.14.32V.68Q.14.86.32.86H1.35"/><path transform="translate(56.0,659.5) scale(12.7)" d="M1.41 .14H.32Q.14.14.14.3V.34Q.14.5.32.5H1.23Q1.41 .5 1.41 .66V.7Q1.41 .86 1.23 .86H.14"/><path transform="translate(76.9,659.5) scale(12.7)" d="M.33-.5V.68Q.33.86.51.86H1.07M0 .14H1.07"/></g><g fill="none" stroke="#fff" stroke-width=".27"><path transform="translate(-28.2,659.5) scale(12.7)" d="M.32.14H1.18Q1.36 .14 1.36 .32V.68Q1.36 .86 1.18 .86H.32Q.14.86.14.68V.32Q.14.14.32.14Z"/><path transform="translate(-7.9,659.5) scale(12.7)" d="M.14.86V.14H1.13Q1.31 .14 1.31 .32V.86"/><path transform="translate(20.9,659.5) scale(12.7)" d="M.33-.5V.68Q.33.86.51.86H1.07M0 .14H1.07"/><path transform="translate(35.8,659.5) scale(12.7)" d="M.14.5H1.35V.32Q1.35 .14 1.17 .14H.32Q.14.14.14.32V.68Q.14.86.32.86H1.35"/><path transform="translate(56.0,659.5) scale(12.7)" d="M1.41 .14H.32Q.14.14.14.3V.34Q.14.5.32.5H1.23Q1.41 .5 1.41 .66V.7Q1.41 .86 1.23 .86H.14"/><path transform="translate(76.9,659.5) scale(12.7)" d="M.33-.5V.68Q.33.86.51.86H1.07M0 .14H1.07"/></g><rect x="467.500" y="175.5" width="447.500" height="50.500" rx="3" fill="#f5f5f5" stroke="#2e2e2e" stroke-width="1.200"/><rect x="469.500" y="177.5" width="443.500" height="46.500" rx="2" fill="none" stroke="#fff" stroke-width="1.500"/><path d="M468 224.5L914 178.5M469 178.5H913M469 223.5H913" stroke="#999" stroke-width=".7" fill="none"/><g transform="translate(478,190.8)" fill="none" stroke="#2a2a2a" stroke-width="2.300" stroke-linejoin="round"><path d="M5 1.200H19.500Q23.300 1.200 23.300 5V14.200Q23.300 18 19.500 18H5Q1.200 18 1.200 14.200V5Q1.200 1.200 5 1.200Z"/><path d="M27.200 23V5.500H42Q45.300 5.500 45.300 8.800V14.700Q45.300 18 42 18H27.200"/><path d="M51.500 1V15Q51.500 18 54.500 18H60.500M47.500 5.500H60.500"/><path d="M64.700 5V19.200M64.700 0V2.500"/><path d="M74.500 5.500H85.500Q88.800 5.500 88.800 8.800V14.700Q88.800 18 85.500 18H74.500Q71.200 18 71.200 14.700V8.800Q71.200 5.500 74.500 5.500Z"/><path d="M94 19.200V5.500H108.500Q111.800 5.500 111.800 8.800V19.200"/><path d="M124.300 19L134 1.200H137.500L147 19M128 13H143.500"/></g><path d="M885 196.5l10 10 10-11" stroke="#2a2a2a" stroke-width="2.200" fill="none"/><rect x="881.500" y="193.5" width="26" height="17" fill="none" stroke="#bbb" stroke-width=".7"/><rect x="467.500" y="420" width="447.500" height="50.500" rx="3" fill="#f5f5f5" stroke="#2e2e2e" stroke-width="1.200"/><rect x="469.500" y="422" width="443.500" height="46.500" rx="2" fill="none" stroke="#fff" stroke-width="1.500"/><path d="M468 469L914 423M469 423H913M469 468H913" stroke="#999" stroke-width=".7" fill="none"/><g transform="translate(478,435.3)" fill="none" stroke="#2a2a2a" stroke-width="2.300" stroke-linejoin="round"><path d="M5 1.200H19.500Q23.300 1.200 23.300 5V14.200Q23.300 18 19.500 18H5Q1.200 18 1.200 14.200V5Q1.200 1.200 5 1.200Z"/><path d="M27.200 23V5.500H42Q45.300 5.500 45.300 8.800V14.700Q45.300 18 42 18H27.200"/><path d="M51.500 1V15Q51.500 18 54.500 18H60.500M47.500 5.500H60.500"/><path d="M64.700 5V19.200M64.700 0V2.500"/><path d="M74.500 5.500H85.500Q88.800 5.500 88.800 8.800V14.700Q88.800 18 85.500 18H74.500Q71.200 18 71.200 14.700V8.800Q71.200 5.500 74.500 5.500Z"/><path d="M94 19.200V5.500H108.500Q111.800 5.500 111.800 8.800V19.200"/><path d="M124.300 19L134 1.200H137.500L147 19M128 13H143.500"/></g><path d="M885 441l10 10 10-11" stroke="#2a2a2a" stroke-width="2.200" fill="none"/><rect x="881.500" y="438" width="26" height="17" fill="none" stroke="#bbb" stroke-width=".7"/><rect x="467.500" y="474.4" width="447.500" height="50.500" rx="3" fill="#f5f5f5" stroke="#2e2e2e" stroke-width="1.200"/><rect x="469.500" y="476.4" width="443.500" height="46.500" rx="2" fill="none" stroke="#fff" stroke-width="1.500"/><path d="M468 523.4L914 477.4M469 477.4H913M469 522.4H913" stroke="#999" stroke-width=".7" fill="none"/><g transform="translate(478,489.7)" fill="none" stroke="#2a2a2a" stroke-width="2.300" stroke-linejoin="round"><path d="M5 1.200H19.500Q23.300 1.200 23.300 5V14.200Q23.300 18 19.500 18H5Q1.200 18 1.200 14.200V5Q1.200 1.200 5 1.200Z"/><path d="M27.200 23V5.500H42Q45.300 5.500 45.300 8.800V14.700Q45.300 18 42 18H27.200"/><path d="M51.500 1V15Q51.500 18 54.500 18H60.500M47.500 5.500H60.500"/><path d="M64.700 5V19.200M64.700 0V2.500"/><path d="M74.500 5.500H85.500Q88.800 5.500 88.800 8.800V14.700Q88.800 18 85.500 18H74.500Q71.200 18 71.200 14.700V8.800Q71.200 5.500 74.500 5.500Z"/><path d="M94 19.200V5.500H108.500Q111.800 5.500 111.800 8.800V19.200"/><path d="M124.300 19L134 1.200H137.500L147 19M128 13H143.500"/></g><path d="M885 495.4l10 10 10-11" stroke="#2a2a2a" stroke-width="2.200" fill="none"/><rect x="881.500" y="492.4" width="26" height="17" fill="none" stroke="#bbb" stroke-width=".7"/><rect x="467.500" y="528.8" width="447.500" height="50.500" rx="3" fill="#f5f5f5" stroke="#2e2e2e" stroke-width="1.200"/><rect x="469.500" y="530.8" width="443.500" height="46.500" rx="2" fill="none" stroke="#fff" stroke-width="1.500"/><path d="M468 577.8L914 531.8M469 531.8H913M469 576.8H913" stroke="#999" stroke-width=".7" fill="none"/><g transform="translate(478,544.0999999999999)" fill="none" stroke="#2a2a2a" stroke-width="2.300" stroke-linejoin="round"><path d="M5 1.200H19.500Q23.300 1.200 23.300 5V14.200Q23.300 18 19.500 18H5Q1.200 18 1.200 14.200V5Q1.200 1.200 5 1.200Z"/><path d="M27.200 23V5.500H42Q45.300 5.500 45.300 8.800V14.700Q45.300 18 42 18H27.200"/><path d="M51.500 1V15Q51.500 18 54.500 18H60.500M47.500 5.500H60.500"/><path d="M64.700 5V19.200M64.700 0V2.500"/><path d="M74.500 5.500H85.500Q88.800 5.500 88.800 8.800V14.700Q88.800 18 85.500 18H74.500Q71.200 18 71.200 14.700V8.800Q71.200 5.500 74.500 5.500Z"/><path d="M94 19.200V5.500H108.500Q111.800 5.500 111.800 8.800V19.200"/><path d="M124.300 19L134 1.200H137.500L147 19M128 13H143.500"/></g><path d="M885 549.8l10 10 10-11" stroke="#2a2a2a" stroke-width="2.200" fill="none"/><rect x="881.500" y="546.8" width="26" height="17" fill="none" stroke="#bbb" stroke-width=".7"/><rect x="864.500" y="230" width="51" height="51" rx="4" fill="#fafafa" stroke="#2e2e2e" stroke-width="1.200"/><rect x="872" y="240" width="37" height="33" fill="none" stroke="#bbb" stroke-width=".7"/><path d="M866 279L914 234" stroke="#888" stroke-width=".7"/><path d="M876 255l12 11 17-22" stroke="#111" stroke-width="3.400" fill="none"/><rect x="864.500" y="284.4" width="51" height="51" rx="4" fill="#fafafa" stroke="#2e2e2e" stroke-width="1.200"/><rect x="872" y="294.4" width="37" height="33" fill="none" stroke="#bbb" stroke-width=".7"/><path d="M866 333.4L914 288.4" stroke="#888" stroke-width=".7"/><path d="M876 309.4l12 11 17-22" stroke="#111" stroke-width="3.400" fill="none"/><rect x="864.500" y="583" width="51" height="51" rx="4" fill="#fafafa" stroke="#2e2e2e" stroke-width="1.200"/><rect x="872" y="593" width="37" height="33" fill="none" stroke="#bbb" stroke-width=".7"/><path d="M866 632L914 587" stroke="#888" stroke-width=".7"/><path d="M876 608l12 11 17-22" stroke="#111" stroke-width="3.400" fill="none"/><rect x="864.500" y="637.4" width="51" height="51" rx="4" fill="#fafafa" stroke="#2e2e2e" stroke-width="1.200"/><rect x="872" y="647.4" width="37" height="33" fill="none" stroke="#bbb" stroke-width=".7"/><path d="M866 686.4L914 641.4" stroke="#888" stroke-width=".7"/><path d="M876 662.4l12 11 17-22" stroke="#111" stroke-width="3.400" fill="none"/><rect x="864.500" y="691.8" width="51" height="51" rx="4" fill="#fafafa" stroke="#2e2e2e" stroke-width="1.200"/><rect x="872" y="701.8" width="37" height="33" fill="none" stroke="#bbb" stroke-width=".7"/><path d="M866 740.8L914 695.8" stroke="#888" stroke-width=".7"/><path d="M876 716.8l12 11 17-22" stroke="#111" stroke-width="3.400" fill="none"/><path d="M465.500 228H917V391H465.500z" fill="none" stroke="#c0c0c0" stroke-width="1"/><circle cx="465.5" cy="228" r="4.300" fill="#2f7be8" stroke="#1b4fa0" stroke-width=".8"/><circle cx="917" cy="228" r="4.300" fill="#2f7be8" stroke="#1b4fa0" stroke-width=".8"/><circle cx="465.5" cy="391" r="4.300" fill="#2f7be8" stroke="#1b4fa0" stroke-width=".8"/><circle cx="917" cy="391" r="4.300" fill="#2f7be8" stroke="#1b4fa0" stroke-width=".8"/><circle cx="691" cy="228" r="5" fill="none" stroke="#2f7be8" stroke-width="2"/></svg>
<div class="a" style="left:1076px;top:92px;width:4px;height:603px;background:#a2a2a2"></div>
<div class="a" style="left:0px;top:109px;width:1px;height:586px;background:#777"></div>
<div class="a" style="left:0px;top:695px;width:1080px;height:5px;background:#a2a2a2"></div>
<div class="a" style="left:-1px;top:700px;width:99px;height:18px;background:linear-gradient(#e6e6e6,#d4d4d4);border:1px solid #979797;border-bottom:none;border-radius:3px 3px 0 0;"></div>
<svg style="left:9px;top:704px" width="10" height="10"><path d="M9.500 2.500A5 5 0 1 0 9.500 7.500L5 5z" fill="#333"/><circle cx="5" cy="2.300" r=".9" fill="#ddd"/></svg>
<div class="t " style="left:24px;top:701px;font-size:11px;letter-spacing:0.508px;">Game</div>
<svg style="left:1060px;top:709px" width="14" height="7"><path d="M0 1h5L2.500 4z" fill="#444"/><path d="M6 .5h8M6 3h8M6 5.500h8" stroke="#444" stroke-width="1"/></svg>
<div class="a" style="left:0px;top:717px;width:1076px;height:17px;background:linear-gradient(#e6e6e6,#c9c9c9);border-bottom:1px solid #7a7a7a;border-top:1px solid #ececec;"></div>
<div class="t " style="left:11px;top:717px;font-size:11px;letter-spacing:0.194px;">Display 1</div>
<svg style="left:77px;top:722px" width="5" height="8"><path d="M0 3h5L2.500 0zM0 5h5L2.500 8z" fill="#444"/></svg>
<svg style="left:243px;top:722px" width="5" height="8"><path d="M0 3h5L2.500 0zM0 5h5L2.500 8z" fill="#444"/></svg>
<div class="a" style="left:86px;top:718px;width:1px;height:15px;background:#9a9a9a"></div>
<div class="a" style="left:92px;top:718px;width:1px;height:15px;background:#9a9a9a"></div>
<div class="a" style="left:251px;top:718px;width:1px;height:15px;background:#9a9a9a"></div>
<div class="a" style="left:808px;top:718px;width:1px;height:15px;background:#9a9a9a"></div>
<div class="a" style="left:909px;top:718px;width:1px;height:15px;background:#9a9a9a"></div>
<div class="a" style="left:976px;top:718px;width:1px;height:15px;background:#9a9a9a"></div>
<div class="a" style="left:1011px;top:718px;width:1px;height:15px;background:#9a9a9a"></div>
<div class="a" style="left:1058px;top:718px;width:1px;height:15px;background:#9a9a9a"></div>
<div class="a" style="left:1070px;top:718px;width:1px;height:15px;background:#9a9a9a"></div>
<div class="t " style="left:98px;top:717px;font-size:11px;letter-spacing:0.641px;">16:9</div>
<div class="t " style="left:257px;top:718px;font-size:11px;letter-spacing:-0.106px;">Scale</div>
<div class="a" style="left:292px;top:725px;width:150px;height:3px;background:#8d8d8d;border-radius:2px;box-shadow:inset 0 1px 0 #555"></div>
<div class="a" style="left:289px;top:721px;width:11px;height:11px;background:radial-gradient(circle at 50% 35%,#fff,#cfcfcf);border:1px solid #666;border-radius:6px"></div>
<div class="t " style="left:448px;top:718px;font-size:11px;letter-spacing:-0.312px;">1x</div>
<div class="a" style="left:809px;top:718px;width:100px;height:15px;background:#f0f0f0"></div>
<div class="t " style="left:814px;top:717px;font-size:11px;letter-spacing:0.021px;">Maximize On Play</div>
<div class="t " style="left:914px;top:717px;font-size:11px;letter-spacing:0.092px;">Mute Audio</div>
<div class="t " style="left:981px;top:717px;font-size:11px;letter-spacing:-0.019px;">Stats</div>
<div class="t " style="left:1018px;top:717px;font-size:11px;letter-spacing:-0.214px;">Gizmos</div>
<svg style="left:1062px;top:722px" width="6" height="4"><path d="M0 0h6L3 3.500z" fill="#444"/></svg>
<div class="a" style="left:0px;top:734px;width:1076px;height:283px;background:linear-gradient(#242424,#343434 9px)"></div>
<div class="a" style="left:1076px;top:700px;width:4px;height:320px;background:#a2a2a2"></div>
<svg style="left:285.500px;top:734px;overflow:hidden" width="505" height="283" viewBox="286 734 505 283"><defs><filter id="gl" x="-10%" y="-10%" width="120%" height="120%"><feGaussianBlur stdDeviation="3"/></filter><filter id="b1"><feGaussianBlur stdDeviation=".5"/></filter><radialGradient id="vg" cx="50%" cy="50%" r="65%"><stop offset="60%" stop-color="#000" stop-opacity="0"/><stop offset="100%" stop-color="#000" stop-opacity=".7"/></radialGradient></defs><rect x="286" y="734" width="505" height="283" fill="#1b190f"/><ellipse cx="540" cy="800" rx="230" ry="90" fill="#3a3620" opacity=".35" filter="url(#gl)"/><rect x="449.5" y="776.7" width="1" height="1" fill="#fff" opacity="0.56"/><rect x="322.6" y="885.7" width="1" height="1" fill="#fff" opacity="0.40"/><rect x="315.3" y="877.6" width="1" height="1" fill="#fff" opacity="0.22"/><rect x="505.0" y="753.8" width="1" height="1" fill="#fff" opacity="0.25"/><rect x="500.4" y="968.0" width="1" height="1" fill="#fff" opacity="0.27"/><rect x="398.7" y="911.6" width="1" height="1" fill="#fff" opacity="0.72"/><rect x="577.4" y="846.3" width="1" height="1" fill="#fff" opacity="0.74"/><rect x="309.5" y="976.9" width="1" height="1" fill="#fff" opacity="0.36"/><rect x="358.8" y="767.3" width="1" height="1" fill="#fff" opacity="0.37"/><rect x="698.1" y="785.1" width="1" height="1" fill="#fff" opacity="0.52"/><rect x="608.7" y="839.4" width="1" height="1" fill="#fff" opacity="0.50"/><rect x="317.7" y="750.9" width="1" height="1" fill="#fff" opacity="0.31"/><rect x="629.6" y="855.0" width="1" height="1" fill="#fff" opacity="0.37"/><rect x="581.7" y="862.3" width="1" height="1" fill="#fff" opacity="0.36"/><rect x="687.2" y="931.8" width="1" height="1" fill="#fff" opacity="0.33"/><rect x="576.1" y="882.6" width="1" height="1" fill="#fff" opacity="0.68"/><rect x="654.4" y="815.5" width="1" height="1" fill="#fff" opacity="0.74"/><rect x="345.6" y="852.3" width="1" height="1" fill="#fff" opacity="0.62"/><rect x="362.8" y="872.4" width="1" height="1" fill="#fff" opacity="0.22"/><rect x="623.4" y="950.4" width="1" height="1" fill="#fff" opacity="0.52"/><rect x="728.1" y="822.8" width="1" height="1" fill="#fff" opacity="0.58"/><rect x="586.2" y="898.1" width="1" height="1" fill="#fff" opacity="0.45"/><rect x="710.2" y="1001.3" width="1" height="1" fill="#fff" opacity="0.46"/><rect x="621.4" y="751.2" width="1" height="1" fill="#fff" opacity="0.59"/><rect x="612.8" y="1015.0" width="1" height="1" fill="#fff" opacity="0.65"/><rect x="429.7" y="843.2" width="1" height="1" fill="#fff" opacity="0.57"/><rect x="297.4" y="864.7" width="1" height="1" fill="#fff" opacity="0.29"/><rect x="345.1" y="750.7" width="1" height="1" fill="#fff" opacity="0.62"/><rect x="351.3" y="804.1" width="1" height="1" fill="#fff" opacity="0.42"/><rect x="726.1" y="756.8" width="1" height="1" fill="#fff" opacity="0.45"/><rect x="563.5" y="984.0" width="1" height="1" fill="#fff" opacity="0.65"/><rect x="722.3" y="812.8" width="1" height="1" fill="#fff" opacity="0.43"/><rect x="467.2" y="984.2" width="1" height="1" fill="#fff" opacity="0.73"/><rect x="362.2" y="783.9" width="1" height="1" fill="#fff" opacity="0.33"/><rect x="403.8" y="871.2" width="1" height="1" fill="#fff" opacity="0.52"/><rect x="418.7" y="735.2" width="1" height="1" fill="#fff" opacity="0.43"/><rect x="472.5" y="894.3" width="1" height="1" fill="#fff" opacity="0.72"/><rect x="634.7" y="879.9" width="1" height="1" fill="#fff" opacity="0.54"/><rect x="627.5" y="749.3" width="1" height="1" fill="#fff" opacity="0.69"/><rect x="679.9" y="981.5" width="1" height="1" fill="#fff" opacity="0.64"/><rect x="484.2" y="846.9" width="1" height="1" fill="#fff" opacity="0.26"/><rect x="606.3" y="751.6" width="1" height="1" fill="#fff" opacity="0.24"/><rect x="391.4" y="779.9" width="1" height="1" fill="#fff" opacity="0.39"/><rect x="312.6" y="734.1" width="1" height="1" fill="#fff" opacity="0.28"/><rect x="337.2" y="836.9" width="1" height="1" fill="#fff" opacity="0.21"/><rect x="727.5" y="907.8" width="1" height="1" fill="#fff" opacity="0.28"/><rect x="413.4" y="832.3" width="1" height="1" fill="#fff" opacity="0.40"/><rect x="348.0" y="974.2" width="1" height="1" fill="#fff" opacity="0.75"/><rect x="521.3" y="870.9" width="1" height="1" fill="#fff" opacity="0.25"/><rect x="337.6" y="831.0" width="1" height="1" fill="#fff" opacity="0.35"/><rect x="704.6" y="779.7" width="1" height="1" fill="#fff" opacity="0.21"/><rect x="766.2" y="883.5" width="1" height="1" fill="#fff" opacity="0.28"/><rect x="560.3" y="741.7" width="1" height="1" fill="#fff" opacity="0.49"/><rect x="780.1" y="978.3" width="1" height="1" fill="#fff" opacity="0.58"/><rect x="417.9" y="837.8" width="1" height="1" fill="#fff" opacity="0.29"/><rect x="675.8" y="884.7" width="1" height="1" fill="#fff" opacity="0.63"/><rect x="452.5" y="797.1" width="1" height="1" fill="#fff" opacity="0.65"/><rect x="783.4" y="975.3" width="1" height="1" fill="#fff" opacity="0.64"/><rect x="699.3" y="943.4" width="1" height="1" fill="#fff" opacity="0.32"/><rect x="547.4" y="834.6" width="1" height="1" fill="#fff" opacity="0.22"/><rect x="300.1" y="813.1" width="1" height="1" fill="#fff" opacity="0.34"/><rect x="635.7" y="1004.7" width="1" height="1" fill="#fff" opacity="0.45"/><rect x="759.2" y="1013.6" width="1" height="1" fill="#fff" opacity="0.73"/><rect x="470.1" y="796.4" width="1" height="1" fill="#fff" opacity="0.32"/><rect x="385.3" y="791.8" width="1" height="1" fill="#fff" opacity="0.54"/><rect x="740.7" y="971.8" width="1" height="1" fill="#fff" opacity="0.46"/><rect x="615.8" y="960.3" width="1" height="1" fill="#fff" opacity="0.25"/><rect x="619.6" y="991.5" width="1" height="1" fill="#fff" opacity="0.63"/><rect x="664.8" y="869.3" width="1" height="1" fill="#fff" opacity="0.30"/><rect x="684.5" y="828.1" width="1" height="1" fill="#fff" opacity="0.64"/><rect x="776.7" y="846.0" width="1" height="1" fill="#fff" opacity="0.42"/><rect x="764.1" y="939.1" width="1" height="1" fill="#fff" opacity="0.29"/><rect x="350.2" y="776.8" width="1" height="1" fill="#fff" opacity="0.70"/><rect x="693.3" y="775.4" width="1" height="1" fill="#fff" opacity="0.65"/><rect x="781.1" y="920.0" width="1" height="1" fill="#fff" opacity="0.39"/><rect x="563.1" y="771.1" width="1" height="1" fill="#fff" opacity="0.21"/><rect x="776.3" y="917.9" width="1" height="1" fill="#fff" opacity="0.49"/><rect x="757.5" y="856.8" width="1" height="1" fill="#fff" opacity="0.68"/><rect x="703.2" y="793.7" width="1" height="1" fill="#fff" opacity="0.34"/><rect x="433.9" y="802.1" width="1" height="1" fill="#fff" opacity="0.52"/><rect x="417.0" y="852.6" width="1" height="1" fill="#fff" opacity="0.27"/><rect x="745.6" y="834.1" width="1" height="1" fill="#fff" opacity="0.45"/><rect x="580.6" y="989.9" width="1" height="1" fill="#fff" opacity="0.43"/><rect x="749.4" y="876.0" width="1" height="1" fill="#fff" opacity="0.49"/><rect x="550.4" y="739.3" width="1" height="1" fill="#fff" opacity="0.44"/><rect x="378.5" y="735.1" width="1" height="1" fill="#fff" opacity="0.64"/><rect x="373.0" y="868.0" width="1" height="1" fill="#fff" opacity="0.60"/><rect x="567.0" y="826.3" width="1" height="1" fill="#fff" opacity="0.49"/><rect x="566.5" y="955.9" width="1" height="1" fill="#fff" opacity="0.26"/><rect x="568.9" y="804.3" width="1" height="1" fill="#fff" opacity="0.35"/><rect x="676.0" y="877.7" width="1" height="1" fill="#fff" opacity="0.51"/><rect x="669.8" y="992.2" width="1" height="1" fill="#fff" opacity="0.44"/><rect x="595.3" y="877.1" width="1" height="1" fill="#fff" opacity="0.48"/><rect x="635.8" y="862.0" width="1" height="1" fill="#fff" opacity="0.49"/><rect x="527.4" y="1000.4" width="1" height="1" fill="#fff" opacity="0.58"/><rect x="728.7" y="1000.6" width="1" height="1" fill="#fff" opacity="0.34"/><rect x="568.6" y="1000.9" width="1" height="1" fill="#fff" opacity="0.66"/><rect x="355.3" y="768.4" width="1" height="1" fill="#fff" opacity="0.44"/><rect x="322.6" y="802.1" width="1" height="1" fill="#fff" opacity="0.24"/><rect x="624.1" y="955.9" width="1" height="1" fill="#fff" opacity="0.69"/><rect x="364.0" y="936.7" width="1" height="1" fill="#fff" opacity="0.56"/><rect x="358.2" y="983.8" width="1" height="1" fill="#fff" opacity="0.73"/><rect x="396.9" y="1003.6" width="1" height="1" fill="#fff" opacity="0.42"/><rect x="532.1" y="1014.1" width="1" height="1" fill="#fff" opacity="0.66"/><rect x="367.5" y="856.1" width="1" height="1" fill="#fff" opacity="0.48"/><rect x="457.3" y="789.4" width="1" height="1" fill="#fff" opacity="0.38"/><rect x="650.7" y="739.5" width="1" height="1" fill="#fff" opacity="0.50"/><rect x="508.4" y="739.1" width="1" height="1" fill="#fff" opacity="0.38"/><rect x="601.1" y="879.0" width="1" height="1" fill="#fff" opacity="0.24"/><rect x="783.5" y="957.1" width="1" height="1" fill="#fff" opacity="0.73"/><rect x="338.9" y="809.2" width="1" height="1" fill="#fff" opacity="0.22"/><rect x="679.4" y="810.5" width="1" height="1" fill="#fff" opacity="0.27"/><rect x="499.2" y="991.9" width="1" height="1" fill="#fff" opacity="0.65"/><rect x="416.6" y="776.3" width="1" height="1" fill="#fff" opacity="0.71"/><rect x="574.2" y="932.2" width="1" height="1" fill="#fff" opacity="0.25"/><rect x="315.1" y="928.8" width="1" height="1" fill="#fff" opacity="0.43"/><rect x="322.6" y="999.6" width="1" height="1" fill="#fff" opacity="0.55"/><rect x="690.8" y="757.7" width="1" height="1" fill="#fff" opacity="0.67"/><rect x="319.6" y="978.2" width="1" height="1" fill="#fff" opacity="0.45"/><rect x="457.3" y="890.5" width="1" height="1" fill="#fff" opacity="0.71"/><rect x="421.3" y="770.6" width="1" height="1" fill="#fff" opacity="0.49"/><rect x="406.4" y="765.0" width="1" height="1" fill="#fff" opacity="0.29"/><rect x="311.4" y="791.1" width="1" height="1" fill="#fff" opacity="0.37"/><rect x="440.0" y="948.9" width="1" height="1" fill="#fff" opacity="0.36"/><rect x="538.5" y="784.3" width="1" height="1" fill="#fff" opacity="0.39"/><rect x="295.2" y="804.9" width="1" height="1" fill="#fff" opacity="0.21"/><rect x="656.2" y="889.9" width="1" height="1" fill="#fff" opacity="0.30"/><rect x="525.8" y="998.5" width="1" height="1" fill="#fff" opacity="0.26"/><rect x="699.6" y="856.3" width="1" height="1" fill="#fff" opacity="0.47"/><rect x="707.5" y="845.2" width="1" height="1" fill="#fff" opacity="0.48"/><rect x="633.3" y="1012.0" width="1" height="1" fill="#fff" opacity="0.39"/><rect x="706.3" y="934.0" width="1" height="1" fill="#fff" opacity="0.55"/><rect x="490.4" y="832.4" width="1" height="1" fill="#fff" opacity="0.23"/><rect x="351.6" y="754.0" width="1" height="1" fill="#fff" opacity="0.61"/><rect x="415.1" y="780.2" width="1" height="1" fill="#fff" opacity="0.25"/><rect x="710.8" y="980.4" width="1" height="1" fill="#fff" opacity="0.57"/><rect x="428.4" y="802.5" width="1" height="1" fill="#fff" opacity="0.36"/><rect x="518.0" y="778.6" width="1" height="1" fill="#fff" opacity="0.45"/><rect x="418.9" y="1006.2" width="1" height="1" fill="#fff" opacity="0.73"/><rect x="562.3" y="803.2" width="1" height="1" fill="#fff" opacity="0.73"/><rect x="442.3" y="834.9" width="1" height="1" fill="#fff" opacity="0.20"/><rect x="478.7" y="868.3" width="1" height="1" fill="#fff" opacity="0.48"/><rect x="387.5" y="876.8" width="1" height="1" fill="#fff" opacity="0.20"/><rect x="419.4" y="759.4" width="1" height="1" fill="#fff" opacity="0.42"/><rect x="307.0" y="740.4" width="1" height="1" fill="#fff" opacity="0.37"/><rect x="403.6" y="899.7" width="1" height="1" fill="#fff" opacity="0.49"/><rect x="665.0" y="920.1" width="1" height="1" fill="#fff" opacity="0.59"/><rect x="729.9" y="844.2" width="1" height="1" fill="#fff" opacity="0.38"/><rect x="783.3" y="776.3" width="1" height="1" fill="#fff" opacity="0.60"/><rect x="610.8" y="746.4" width="1" height="1" fill="#fff" opacity="0.66"/><rect x="736.4" y="911.5" width="1" height="1" fill="#fff" opacity="0.60"/><rect x="696.2" y="773.4" width="1" height="1" fill="#fff" opacity="0.49"/><rect x="540.7" y="970.3" width="1" height="1" fill="#fff" opacity="0.64"/><rect x="703.3" y="899.3" width="1" height="1" fill="#fff" opacity="0.69"/><rect x="630.9" y="930.2" width="1" height="1" fill="#fff" opacity="0.33"/><rect x="301.7" y="771.7" width="1" height="1" fill="#fff" opacity="0.40"/><rect x="339.0" y="970.5" width="1" height="1" fill="#fff" opacity="0.51"/><rect x="603.0" y="911.2" width="1" height="1" fill="#fff" opacity="0.57"/><rect x="533.1" y="734.9" width="1" height="1" fill="#fff" opacity="0.64"/><rect x="663.9" y="876.3" width="1" height="1" fill="#fff" opacity="0.49"/><rect x="618.9" y="752.7" width="1" height="1" fill="#fff" opacity="0.61"/><rect x="413.4" y="755.1" width="1" height="1" fill="#fff" opacity="0.35"/><rect x="654.3" y="792.1" width="1" height="1" fill="#fff" opacity="0.61"/><rect x="778.7" y="873.8" width="1" height="1" fill="#fff" opacity="0.41"/><rect x="527.9" y="927.5" width="1" height="1" fill="#fff" opacity="0.62"/><rect x="597.6" y="915.9" width="1" height="1" fill="#fff" opacity="0.24"/><rect x="360.4" y="805.9" width="1" height="1" fill="#fff" opacity="0.61"/><rect x="439.7" y="894.7" width="1" height="1" fill="#fff" opacity="0.21"/><rect x="316.6" y="810.1" width="1" height="1" fill="#fff" opacity="0.57"/><rect x="635.6" y="925.2" width="1" height="1" fill="#fff" opacity="0.36"/><rect x="546.9" y="865.5" width="1" height="1" fill="#fff" opacity="0.46"/><rect x="345.8" y="986.9" width="1" height="1" fill="#fff" opacity="0.31"/><rect x="780.0" y="999.0" width="1" height="1" fill="#fff" opacity="0.21"/><rect x="517.8" y="966.0" width="1" height="1" fill="#fff" opacity="0.73"/><rect x="513.0" y="810.0" width="1" height="1" fill="#fff" opacity="0.32"/><rect x="763.5" y="793.6" width="1" height="1" fill="#fff" opacity="0.52"/><rect x="357.6" y="882.3" width="1" height="1" fill="#fff" opacity="0.72"/><rect x="353.0" y="966.1" width="1" height="1" fill="#fff" opacity="0.48"/><rect x="733.9" y="933.0" width="1" height="1" fill="#fff" opacity="0.33"/><rect x="739.3" y="871.6" width="1" height="1" fill="#fff" opacity="0.21"/><rect x="287.8" y="873.1" width="1" height="1" fill="#fff" opacity="0.45"/><rect x="438.5" y="773.8" width="1" height="1" fill="#fff" opacity="0.39"/><rect x="445.6" y="971.8" width="1" height="1" fill="#fff" opacity="0.20"/><rect x="665.1" y="971.5" width="1" height="1" fill="#fff" opacity="0.27"/><rect x="753.8" y="935.8" width="1" height="1" fill="#fff" opacity="0.70"/><rect x="432.4" y="839.3" width="1" height="1" fill="#fff" opacity="0.42"/><rect x="790.4" y="900.7" width="1" height="1" fill="#fff" opacity="0.40"/><rect x="502.2" y="811.9" width="1" height="1" fill="#fff" opacity="0.23"/><rect x="337.4" y="970.2" width="1" height="1" fill="#fff" opacity="0.36"/><rect x="758.5" y="804.6" width="1" height="1" fill="#fff" opacity="0.35"/><rect x="544.0" y="787.7" width="1" height="1" fill="#fff" opacity="0.41"/><rect x="768.9" y="984.2" width="1" height="1" fill="#fff" opacity="0.65"/><rect x="604.6" y="992.5" width="1" height="1" fill="#fff" opacity="0.72"/><rect x="563.4" y="937.6" width="1" height="1" fill="#fff" opacity="0.23"/><rect x="655.8" y="861.6" width="1" height="1" fill="#fff" opacity="0.61"/><rect x="611.5" y="815.0" width="1" height="1" fill="#fff" opacity="0.23"/><rect x="754.0" y="770.0" width="1" height="1" fill="#fff" opacity="0.46"/><rect x="459.5" y="818.3" width="1" height="1" fill="#fff" opacity="0.61"/><rect x="779.0" y="807.6" width="1" height="1" fill="#fff" opacity="0.56"/><rect x="437.9" y="891.7" width="1" height="1" fill="#fff" opacity="0.42"/><rect x="370.5" y="779.7" width="1" height="1" fill="#fff" opacity="0.31"/><rect x="743.5" y="874.7" width="1" height="1" fill="#fff" opacity="0.32"/><rect x="743.7" y="1016.0" width="1" height="1" fill="#fff" opacity="0.45"/><rect x="356.5" y="788.5" width="1" height="1" fill="#fff" opacity="0.25"/><rect x="458.7" y="759.8" width="1" height="1" fill="#fff" opacity="0.33"/><rect x="416.5" y="895.2" width="1" height="1" fill="#fff" opacity="0.69"/><rect x="664.6" y="850.8" width="1" height="1" fill="#fff" opacity="0.43"/><rect x="550.7" y="840.7" width="1" height="1" fill="#fff" opacity="0.39"/><rect x="317.3" y="812.5" width="1" height="1" fill="#fff" opacity="0.73"/><rect x="349.6" y="876.5" width="1" height="1" fill="#fff" opacity="0.55"/><rect x="721.7" y="795.1" width="1" height="1" fill="#fff" opacity="0.35"/><rect x="411.5" y="847.1" width="1" height="1" fill="#fff" opacity="0.45"/><rect x="767.7" y="974.2" width="1" height="1" fill="#fff" opacity="0.68"/><rect x="297.0" y="743.1" width="1" height="1" fill="#fff" opacity="0.59"/><rect x="738.3" y="867.9" width="1" height="1" fill="#fff" opacity="0.52"/><rect x="286.1" y="844.8" width="1" height="1" fill="#fff" opacity="0.71"/><rect x="702.9" y="976.1" width="1" height="1" fill="#fff" opacity="0.73"/><rect x="411.5" y="764.9" width="1" height="1" fill="#fff" opacity="0.28"/><rect x="549.8" y="927.0" width="1" height="1" fill="#fff" opacity="0.72"/><rect x="650.5" y="917.2" width="1" height="1" fill="#fff" opacity="0.62"/><rect x="516.9" y="890.1" width="1" height="1" fill="#fff" opacity="0.22"/><rect x="681.1" y="799.8" width="1" height="1" fill="#fff" opacity="0.71"/><rect x="612.0" y="820.0" width="1" height="1" fill="#fff" opacity="0.27"/><rect x="413.2" y="914.1" width="1" height="1" fill="#fff" opacity="0.58"/><rect x="342.6" y="753.9" width="1" height="1" fill="#fff" opacity="0.49"/><rect x="580.4" y="843.8" width="1" height="1" fill="#fff" opacity="0.32"/><rect x="589.5" y="737.0" width="1" height="1" fill="#fff" opacity="0.37"/><rect x="518.6" y="1005.4" width="1" height="1" fill="#fff" opacity="0.55"/><rect x="732.3" y="868.5" width="1" height="1" fill="#fff" opacity="0.33"/><rect x="410.8" y="1005.9" width="1" height="1" fill="#fff" opacity="0.59"/><rect x="441.2" y="740.2" width="1" height="1" fill="#fff" opacity="0.47"/><rect x="626.6" y="852.9" width="1" height="1" fill="#fff" opacity="0.34"/><rect x="623.0" y="995.8" width="1" height="1" fill="#fff" opacity="0.32"/><rect x="303.2" y="829.7" width="1" height="1" fill="#fff" opacity="0.43"/><rect x="630.7" y="790.1" width="1" height="1" fill="#fff" opacity="0.64"/><rect x="659.3" y="876.9" width="1" height="1" fill="#fff" opacity="0.31"/><rect x="775.8" y="822.2" width="1" height="1" fill="#fff" opacity="0.65"/><rect x="402.6" y="796.7" width="1" height="1" fill="#fff" opacity="0.62"/><rect x="434.9" y="1003.4" width="1" height="1" fill="#fff" opacity="0.47"/><rect x="380.6" y="797.2" width="1" height="1" fill="#fff" opacity="0.43"/><rect x="622.0" y="1002.5" width="1" height="1" fill="#fff" opacity="0.28"/><rect x="484.7" y="794.3" width="1" height="1" fill="#fff" opacity="0.74"/><rect x="357.7" y="748.7" width="1" height="1" fill="#fff" opacity="0.23"/><rect x="484.6" y="988.2" width="1" height="1" fill="#fff" opacity="0.69"/><rect x="656.0" y="1016.3" width="1" height="1" fill="#fff" opacity="0.71"/><rect x="452.3" y="786.5" width="1" height="1" fill="#fff" opacity="0.71"/><rect x="662.9" y="743.0" width="1" height="1" fill="#fff" opacity="0.57"/><rect x="477.2" y="839.8" width="1" height="1" fill="#fff" opacity="0.38"/><rect x="371.5" y="734.8" width="1" height="1" fill="#fff" opacity="0.35"/><rect x="463.5" y="1004.4" width="1" height="1" fill="#fff" opacity="0.27"/><rect x="773.0" y="792.7" width="1" height="1" fill="#fff" opacity="0.40"/><rect x="700.9" y="966.6" width="1" height="1" fill="#fff" opacity="0.44"/><rect x="310.9" y="868.0" width="1" height="1" fill="#fff" opacity="0.40"/><rect x="750.4" y="788.6" width="1" height="1" fill="#fff" opacity="0.40"/><rect x="739.0" y="742.6" width="1" height="1" fill="#fff" opacity="0.43"/><rect x="696.0" y="951.0" width="1" height="1" fill="#fff" opacity="0.22"/><rect x="303.6" y="751.7" width="1" height="1" fill="#fff" opacity="0.71"/><rect x="415.8" y="945.5" width="1" height="1" fill="#fff" opacity="0.69"/><rect x="457.2" y="811.1" width="1" height="1" fill="#fff" opacity="0.73"/><rect x="597.6" y="808.2" width="1" height="1" fill="#fff" opacity="0.59"/><rect x="445.8" y="812.0" width="1" height="1" fill="#fff" opacity="0.20"/><rect x="667.6" y="993.4" width="1" height="1" fill="#fff" opacity="0.55"/><rect x="762.3" y="740.9" width="1" height="1" fill="#fff" opacity="0.33"/><rect x="526.0" y="1004.8" width="1" height="1" fill="#fff" opacity="0.72"/><rect x="481.2" y="805.0" width="1" height="1" fill="#fff" opacity="0.44"/><rect x="535.2" y="996.7" width="1" height="1" fill="#fff" opacity="0.30"/><rect x="691.3" y="943.0" width="1" height="1" fill="#fff" opacity="0.65"/><rect x="676.3" y="905.9" width="1" height="1" fill="#fff" opacity="0.38"/><rect x="447.4" y="836.4" width="1" height="1" fill="#fff" opacity="0.63"/><rect x="325.9" y="789.8" width="1" height="1" fill="#fff" opacity="0.61"/><rect x="410.9" y="752.3" width="1" height="1" fill="#fff" opacity="0.22"/><rect x="565.1" y="826.2" width="1" height="1" fill="#fff" opacity="0.74"/><rect x="732.2" y="1013.6" width="1" height="1" fill="#fff" opacity="0.35"/><rect x="328.5" y="761.3" width="1" height="1" fill="#fff" opacity="0.47"/><rect x="644.4" y="860.5" width="1" height="1" fill="#fff" opacity="0.33"/><rect x="496.5" y="909.5" width="1" height="1" fill="#fff" opacity="0.57"/><rect x="663.7" y="973.7" width="1" height="1" fill="#fff" opacity="0.57"/><rect x="347.2" y="972.0" width="1" height="1" fill="#fff" opacity="0.36"/><rect x="572.3" y="839.6" width="1" height="1" fill="#fff" opacity="0.61"/><rect x="386.6" y="804.0" width="1" height="1" fill="#fff" opacity="0.33"/><rect x="363.4" y="984.2" width="1" height="1" fill="#fff" opacity="0.52"/><rect x="450.8" y="846.1" width="1" height="1" fill="#fff" opacity="0.75"/><rect x="542.2" y="799.5" width="1" height="1" fill="#fff" opacity="0.64"/><rect x="615.9" y="1014.4" width="1" height="1" fill="#fff" opacity="0.26"/><rect x="525.8" y="965.8" width="1" height="1" fill="#fff" opacity="0.66"/><rect x="747.8" y="745.4" width="1" height="1" fill="#fff" opacity="0.36"/><rect x="346.2" y="787.6" width="1" height="1" fill="#fff" opacity="0.74"/><rect x="580.5" y="997.2" width="1" height="1" fill="#fff" opacity="0.40"/><rect x="723.4" y="861.1" width="1" height="1" fill="#fff" opacity="0.34"/><rect x="678.8" y="1001.6" width="1" height="1" fill="#fff" opacity="0.26"/><rect x="587.1" y="909.4" width="1" height="1" fill="#fff" opacity="0.32"/><rect x="472.2" y="774.0" width="1" height="1" fill="#fff" opacity="0.31"/><rect x="414.7" y="903.6" width="1" height="1" fill="#fff" opacity="0.56"/><rect x="388.7" y="737.2" width="1" height="1" fill="#fff" opacity="0.38"/><rect x="628.6" y="786.4" width="1" height="1" fill="#fff" opacity="0.37"/><rect x="388.7" y="959.1" width="1" height="1" fill="#fff" opacity="0.50"/><rect x="318.0" y="762.7" width="1" height="1" fill="#fff" opacity="0.42"/><rect x="563.8" y="914.9" width="1" height="1" fill="#fff" opacity="0.25"/><rect x="368.7" y="930.8" width="1" height="1" fill="#fff" opacity="0.43"/><rect x="429.1" y="821.0" width="1" height="1" fill="#fff" opacity="0.72"/><rect x="443.7" y="894.3" width="1" height="1" fill="#fff" opacity="0.40"/><rect x="496.3" y="978.6" width="1" height="1" fill="#fff" opacity="0.75"/><rect x="469.7" y="789.8" width="1" height="1" fill="#fff" opacity="0.60"/><rect x="388.9" y="735.7" width="1" height="1" fill="#fff" opacity="0.70"/><rect x="500.0" y="966.2" width="1" height="1" fill="#fff" opacity="0.42"/><rect x="731.8" y="864.4" width="1" height="1" fill="#fff" opacity="0.29"/><rect x="293.5" y="890.1" width="1" height="1" fill="#fff" opacity="0.55"/><rect x="745.4" y="759.2" width="1" height="1" fill="#fff" opacity="0.54"/><rect x="473.3" y="876.8" width="1" height="1" fill="#fff" opacity="0.28"/><rect x="429.1" y="881.5" width="1" height="1" fill="#fff" opacity="0.71"/><rect x="340.9" y="872.8" width="1" height="1" fill="#fff" opacity="0.64"/><rect x="774.3" y="789.8" width="1" height="1" fill="#fff" opacity="0.27"/><rect x="762.3" y="1010.1" width="1" height="1" fill="#fff" opacity="0.47"/><rect x="313.0" y="996.1" width="1" height="1" fill="#fff" opacity="0.41"/><rect x="742.6" y="909.6" width="1" height="1" fill="#fff" opacity="0.65"/><rect x="366.9" y="956.4" width="1" height="1" fill="#fff" opacity="0.32"/><rect x="490.3" y="973.5" width="1" height="1" fill="#fff" opacity="0.66"/><rect x="378.4" y="795.7" width="1" height="1" fill="#fff" opacity="0.42"/><rect x="547.5" y="842.6" width="1" height="1" fill="#fff" opacity="0.27"/><rect x="410.8" y="939.1" width="1" height="1" fill="#fff" opacity="0.69"/><rect x="306.8" y="893.1" width="1" height="1" fill="#fff" opacity="0.62"/><rect x="305.3" y="971.2" width="1" height="1" fill="#fff" opacity="0.26"/><rect x="588.8" y="889.7" width="1" height="1" fill="#fff" opacity="0.54"/><rect x="440.6" y="852.9" width="1" height="1" fill="#fff" opacity="0.52"/><rect x="501.0" y="920.5" width="1" height="1" fill="#fff" opacity="0.45"/><rect x="507.4" y="740.6" width="1" height="1" fill="#fff" opacity="0.54"/><rect x="533.2" y="800.6" width="1" height="1" fill="#fff" opacity="0.62"/><rect x="679.9" y="863.7" width="1" height="1" fill="#fff" opacity="0.30"/><rect x="525.0" y="764.3" width="1" height="1" fill="#fff" opacity="0.27"/><rect x="503.5" y="760.0" width="1" height="1" fill="#fff" opacity="0.44"/><rect x="543.6" y="745.5" width="1" height="1" fill="#fff" opacity="0.55"/><rect x="327.5" y="941.6" width="1" height="1" fill="#fff" opacity="0.63"/><rect x="544.3" y="749.4" width="1" height="1" fill="#fff" opacity="0.48"/><rect x="476.8" y="1003.1" width="1" height="1" fill="#fff" opacity="0.27"/><rect x="718.8" y="1015.9" width="1" height="1" fill="#fff" opacity="0.60"/><rect x="697.6" y="788.8" width="1" height="1" fill="#fff" opacity="0.74"/><rect x="534.4" y="1004.7" width="1" height="1" fill="#fff" opacity="0.70"/><rect x="369.4" y="957.1" width="1" height="1" fill="#fff" opacity="0.71"/><rect x="319.1" y="833.3" width="1" height="1" fill="#fff" opacity="0.62"/><rect x="366.2" y="987.7" width="1" height="1" fill="#fff" opacity="0.35"/><rect x="697.9" y="774.6" width="1" height="1" fill="#fff" opacity="0.48"/><rect x="750.6" y="793.0" width="1" height="1" fill="#fff" opacity="0.34"/><rect x="541.5" y="824.3" width="1" height="1" fill="#fff" opacity="0.22"/><rect x="378.0" y="779.6" width="1" height="1" fill="#fff" opacity="0.72"/><rect x="629.2" y="987.4" width="1" height="1" fill="#fff" opacity="0.29"/><rect x="682.4" y="766.6" width="1" height="1" fill="#fff" opacity="0.49"/><rect x="607.3" y="835.8" width="1" height="1" fill="#fff" opacity="0.68"/><rect x="566.4" y="898.2" width="1" height="1" fill="#fff" opacity="0.69"/><rect x="338.8" y="1015.0" width="1" height="1" fill="#fff" opacity="0.55"/><rect x="485.1" y="959.7" width="1" height="1" fill="#fff" opacity="0.35"/><rect x="786.2" y="897.4" width="1" height="1" fill="#fff" opacity="0.40"/><rect x="672.1" y="859.2" width="1" height="1" fill="#fff" opacity="0.30"/><rect x="661.5" y="747.7" width="1" height="1" fill="#fff" opacity="0.65"/><rect x="414.1" y="914.9" width="1" height="1" fill="#fff" opacity="0.74"/><rect x="581.9" y="921.8" width="1" height="1" fill="#fff" opacity="0.37"/><rect x="286.9" y="743.6" width="1" height="1" fill="#fff" opacity="0.28"/><rect x="597.1" y="856.3" width="1" height="1" fill="#fff" opacity="0.48"/><rect x="738.2" y="771.4" width="1" height="1" fill="#fff" opacity="0.32"/><rect x="615.8" y="740.3" width="1" height="1" fill="#fff" opacity="0.20"/><rect x="465.3" y="764.1" width="1" height="1" fill="#fff" opacity="0.40"/><rect x="399.3" y="899.2" width="1" height="1" fill="#fff" opacity="0.52"/><rect x="389.1" y="910.6" width="1" height="1" fill="#fff" opacity="0.46"/><rect x="354.0" y="999.1" width="1" height="1" fill="#fff" opacity="0.33"/><rect x="361.4" y="761.1" width="1" height="1" fill="#fff" opacity="0.55"/><rect x="726.0" y="955.4" width="1" height="1" fill="#fff" opacity="0.42"/><rect x="419.4" y="737.3" width="1" height="1" fill="#fff" opacity="0.55"/><rect x="570.0" y="833.1" width="1" height="1" fill="#fff" opacity="0.56"/><rect x="510.1" y="999.2" width="1" height="1" fill="#fff" opacity="0.60"/><rect x="411.5" y="989.7" width="1" height="1" fill="#fff" opacity="0.22"/><rect x="554.4" y="848.9" width="1" height="1" fill="#fff" opacity="0.33"/><rect x="315.5" y="954.4" width="1" height="1" fill="#fff" opacity="0.21"/><rect x="564.2" y="1000.3" width="1" height="1" fill="#fff" opacity="0.28"/><rect x="386.8" y="906.1" width="1" height="1" fill="#fff" opacity="0.48"/><rect x="610.0" y="964.2" width="1" height="1" fill="#fff" opacity="0.30"/><rect x="442.2" y="819.0" width="1" height="1" fill="#fff" opacity="0.23"/><rect x="735.1" y="955.6" width="1" height="1" fill="#fff" opacity="0.59"/><rect x="289.2" y="973.0" width="1" height="1" fill="#fff" opacity="0.61"/><rect x="521.0" y="943.9" width="1" height="1" fill="#fff" opacity="0.45"/><rect x="400.1" y="763.8" width="1" height="1" fill="#fff" opacity="0.33"/><rect x="305.6" y="829.0" width="1" height="1" fill="#fff" opacity="0.61"/><rect x="637.0" y="973.2" width="1" height="1" fill="#fff" opacity="0.59"/><rect x="420.3" y="890.7" width="1" height="1" fill="#fff" opacity="0.44"/><rect x="684.2" y="882.1" width="1" height="1" fill="#fff" opacity="0.35"/><rect x="610.2" y="1007.1" width="1" height="1" fill="#fff" opacity="0.32"/><rect x="730.4" y="738.3" width="1" height="1" fill="#fff" opacity="0.34"/><rect x="405.2" y="944.5" width="1" height="1" fill="#fff" opacity="0.72"/><rect x="662.8" y="826.5" width="1" height="1" fill="#fff" opacity="0.68"/><rect x="451.9" y="801.7" width="1" height="1" fill="#fff" opacity="0.70"/><rect x="604.5" y="930.1" width="1" height="1" fill="#fff" opacity="0.57"/><rect x="780.4" y="866.9" width="1" height="1" fill="#fff" opacity="0.66"/><rect x="638.3" y="976.7" width="1" height="1" fill="#fff" opacity="0.44"/><rect x="651.9" y="895.4" width="1" height="1" fill="#fff" opacity="0.37"/><rect x="393.0" y="910.2" width="1" height="1" fill="#fff" opacity="0.24"/><rect x="745.9" y="774.9" width="1" height="1" fill="#fff" opacity="0.21"/><rect x="339.9" y="996.9" width="1" height="1" fill="#fff" opacity="0.39"/><rect x="357.6" y="742.1" width="1" height="1" fill="#fff" opacity="0.22"/><rect x="635.8" y="913.4" width="1" height="1" fill="#fff" opacity="0.58"/><rect x="658.1" y="752.6" width="1" height="1" fill="#fff" opacity="0.52"/><rect x="469.5" y="965.4" width="1" height="1" fill="#fff" opacity="0.65"/><rect x="736.1" y="752.7" width="1" height="1" fill="#fff" opacity="0.68"/><rect x="747.8" y="1001.2" width="1" height="1" fill="#fff" opacity="0.26"/><rect x="389.9" y="765.7" width="1" height="1" fill="#fff" opacity="0.22"/><rect x="714.1" y="963.8" width="1" height="1" fill="#fff" opacity="0.55"/><rect x="702.7" y="912.7" width="1" height="1" fill="#fff" opacity="0.36"/><rect x="336.4" y="761.7" width="1" height="1" fill="#fff" opacity="0.62"/><rect x="389.5" y="824.3" width="1" height="1" fill="#fff" opacity="0.43"/><rect x="296.6" y="806.6" width="1" height="1" fill="#fff" opacity="0.36"/><rect x="647.5" y="838.2" width="1" height="1" fill="#fff" opacity="0.38"/><rect x="772.8" y="876.6" width="1" height="1" fill="#fff" opacity="0.67"/><rect x="598.2" y="742.8" width="1" height="1" fill="#fff" opacity="0.43"/><rect x="506.4" y="952.8" width="1" height="1" fill="#fff" opacity="0.39"/><rect x="641.9" y="886.2" width="1" height="1" fill="#fff" opacity="0.32"/><rect x="721.4" y="759.7" width="1" height="1" fill="#fff" opacity="0.65"/><rect x="372.0" y="734.4" width="1" height="1" fill="#fff" opacity="0.31"/><rect x="670.9" y="1010.7" width="1" height="1" fill="#fff" opacity="0.20"/><rect x="533.9" y="873.1" width="1" height="1" fill="#fff" opacity="0.64"/><rect x="379.2" y="874.0" width="1" height="1" fill="#fff" opacity="0.39"/><rect x="706.1" y="807.7" width="1" height="1" fill="#fff" opacity="0.72"/><rect x="429.3" y="794.8" width="1" height="1" fill="#fff" opacity="0.58"/><rect x="537.6" y="765.1" width="1" height="1" fill="#fff" opacity="0.55"/><rect x="326.8" y="957.0" width="1" height="1" fill="#fff" opacity="0.58"/><rect x="683.4" y="911.7" width="1" height="1" fill="#fff" opacity="0.40"/><rect x="488.6" y="845.7" width="1" height="1" fill="#fff" opacity="0.69"/><rect x="329.5" y="985.4" width="1" height="1" fill="#fff" opacity="0.21"/><rect x="390.1" y="808.5" width="1" height="1" fill="#fff" opacity="0.70"/><rect x="539.1" y="841.3" width="1" height="1" fill="#fff" opacity="0.69"/><rect x="404.0" y="864.4" width="1" height="1" fill="#fff" opacity="0.49"/><rect x="667.0" y="947.1" width="1" height="1" fill="#fff" opacity="0.56"/><rect x="462.0" y="826.4" width="1" height="1" fill="#fff" opacity="0.29"/><rect x="711.8" y="921.4" width="1" height="1" fill="#fff" opacity="0.61"/><rect x="371.6" y="858.2" width="1" height="1" fill="#fff" opacity="0.63"/><rect x="578.5" y="769.7" width="1" height="1" fill="#fff" opacity="0.45"/><rect x="733.0" y="801.3" width="1" height="1" fill="#fff" opacity="0.31"/><rect x="438.3" y="933.0" width="1" height="1" fill="#fff" opacity="0.66"/><rect x="364.1" y="778.1" width="1" height="1" fill="#fff" opacity="0.34"/><rect x="450.9" y="881.8" width="1" height="1" fill="#fff" opacity="0.29"/><rect x="451.7" y="787.6" width="1" height="1" fill="#fff" opacity="0.74"/><rect x="654.0" y="762.8" width="1" height="1" fill="#fff" opacity="0.73"/><rect x="337.3" y="842.7" width="1" height="1" fill="#fff" opacity="0.74"/><rect x="687.4" y="941.5" width="1" height="1" fill="#fff" opacity="0.44"/><rect x="385.1" y="914.5" width="1" height="1" fill="#fff" opacity="0.26"/><rect x="390.3" y="843.9" width="1" height="1" fill="#fff" opacity="0.22"/><rect x="487.5" y="957.9" width="1" height="1" fill="#fff" opacity="0.58"/><rect x="538.7" y="913.0" width="1" height="1" fill="#fff" opacity="0.45"/><rect x="357.6" y="904.8" width="1" height="1" fill="#fff" opacity="0.42"/><rect x="660.2" y="991.0" width="1" height="1" fill="#fff" opacity="0.44"/><rect x="575.9" y="946.0" width="1" height="1" fill="#fff" opacity="0.43"/><rect x="401.4" y="938.4" width="1" height="1" fill="#fff" opacity="0.68"/><rect x="676.9" y="932.1" width="1" height="1" fill="#fff" opacity="0.67"/><rect x="629.2" y="915.6" width="1" height="1" fill="#fff" opacity="0.45"/><rect x="444.1" y="911.8" width="1" height="1" fill="#fff" opacity="0.25"/><rect x="497.9" y="955.4" width="1" height="1" fill="#fff" opacity="0.59"/><rect x="604.0" y="804.8" width="1" height="1" fill="#fff" opacity="0.43"/><rect x="515.9" y="909.9" width="1" height="1" fill="#fff" opacity="0.43"/><rect x="627.0" y="997.2" width="1" height="1" fill="#fff" opacity="0.30"/><rect x="616.5" y="954.2" width="1" height="1" fill="#fff" opacity="0.41"/><rect x="533.4" y="1009.8" width="1" height="1" fill="#fff" opacity="0.22"/><rect x="560.4" y="779.5" width="1" height="1" fill="#fff" opacity="0.63"/><rect x="761.0" y="880.9" width="1" height="1" fill="#fff" opacity="0.26"/><rect x="576.2" y="887.1" width="1" height="1" fill="#fff" opacity="0.59"/><rect x="544.7" y="914.9" width="1" height="1" fill="#fff" opacity="0.66"/><rect x="549.5" y="850.1" width="1" height="1" fill="#fff" opacity="0.72"/><rect x="392.1" y="927.7" width="1" height="1" fill="#fff" opacity="0.42"/><rect x="671.2" y="768.6" width="1" height="1" fill="#fff" opacity="0.74"/><rect x="465.5" y="750.0" width="1" height="1" fill="#fff" opacity="0.35"/><rect x="487.8" y="737.8" width="1" height="1" fill="#fff" opacity="0.43"/><rect x="498.4" y="931.6" width="1" height="1" fill="#fff" opacity="0.39"/><rect x="419.9" y="797.5" width="1" height="1" fill="#fff" opacity="0.61"/><rect x="760.7" y="883.2" width="1" height="1" fill="#fff" opacity="0.32"/><rect x="690.8" y="844.9" width="1" height="1" fill="#fff" opacity="0.32"/><rect x="351.3" y="953.8" width="1" height="1" fill="#fff" opacity="0.65"/><rect x="606.3" y="866.8" width="1" height="1" fill="#fff" opacity="0.51"/><rect x="400.1" y="1006.8" width="1" height="1" fill="#fff" opacity="0.39"/><rect x="608.6" y="965.7" width="1" height="1" fill="#fff" opacity="0.65"/><rect x="522.4" y="817.3" width="1" height="1" fill="#fff" opacity="0.50"/><rect x="349.2" y="969.9" width="1" height="1" fill="#fff" opacity="0.40"/><rect x="715.6" y="809.7" width="1" height="1" fill="#fff" opacity="0.41"/><rect x="414.0" y="854.6" width="1" height="1" fill="#fff" opacity="0.30"/><rect x="287.4" y="938.3" width="1" height="1" fill="#fff" opacity="0.35"/><rect x="409.7" y="819.4" width="1" height="1" fill="#fff" opacity="0.46"/><rect x="502.4" y="914.4" width="1" height="1" fill="#fff" opacity="0.56"/><rect x="469.0" y="996.8" width="1" height="1" fill="#fff" opacity="0.67"/><rect x="314.8" y="968.3" width="1" height="1" fill="#fff" opacity="0.70"/><rect x="681.9" y="773.7" width="1" height="1" fill="#fff" opacity="0.66"/><rect x="605.7" y="738.2" width="1" height="1" fill="#fff" opacity="0.21"/><rect x="766.6" y="919.6" width="1" height="1" fill="#fff" opacity="0.34"/><rect x="337.3" y="774.4" width="1" height="1" fill="#fff" opacity="0.33"/><rect x="678.0" y="832.0" width="1" height="1" fill="#fff" opacity="0.28"/><rect x="742.6" y="958.0" width="1" height="1" fill="#fff" opacity="0.29"/><rect x="736.0" y="906.2" width="1" height="1" fill="#fff" opacity="0.63"/><rect x="623.6" y="987.0" width="1" height="1" fill="#fff" opacity="0.63"/><rect x="709.6" y="789.9" width="1" height="1" fill="#fff" opacity="0.58"/><rect x="554.1" y="944.0" width="1" height="1" fill="#fff" opacity="0.44"/><rect x="731.8" y="891.1" width="1" height="1" fill="#fff" opacity="0.35"/><rect x="404.3" y="773.4" width="1" height="1" fill="#fff" opacity="0.47"/><rect x="315.5" y="866.2" width="1" height="1" fill="#fff" opacity="0.28"/><rect x="534.1" y="875.0" width="1" height="1" fill="#fff" opacity="0.50"/><rect x="721.8" y="735.9" width="1" height="1" fill="#fff" opacity="0.66"/><rect x="522.3" y="893.2" width="1" height="1" fill="#fff" opacity="0.57"/><rect x="710.5" y="840.1" width="1" height="1" fill="#fff" opacity="0.43"/><rect x="771.1" y="755.3" width="1" height="1" fill="#fff" opacity="0.55"/><rect x="607.2" y="742.1" width="1" height="1" fill="#fff" opacity="0.54"/><rect x="630.7" y="997.6" width="1" height="1" fill="#fff" opacity="0.38"/><rect x="781.8" y="878.5" width="1" height="1" fill="#fff" opacity="0.47"/><rect x="739.3" y="743.6" width="1" height="1" fill="#fff" opacity="0.60"/><rect x="601.8" y="829.8" width="1" height="1" fill="#fff" opacity="0.67"/><rect x="470.9" y="868.3" width="1" height="1" fill="#fff" opacity="0.49"/><rect x="675.1" y="793.6" width="1" height="1" fill="#fff" opacity="0.44"/><rect x="499.3" y="890.8" width="1" height="1" fill="#fff" opacity="0.65"/><rect x="433.9" y="968.2" width="1" height="1" fill="#fff" opacity="0.42"/><rect x="540.4" y="810.9" width="1" height="1" fill="#fff" opacity="0.48"/><rect x="778.4" y="919.2" width="1" height="1" fill="#fff" opacity="0.64"/><rect x="453.1" y="823.7" width="1" height="1" fill="#fff" opacity="0.36"/><rect x="582.2" y="913.7" width="1" height="1" fill="#fff" opacity="0.63"/><rect x="306.2" y="938.5" width="1" height="1" fill="#fff" opacity="0.69"/><rect x="561.4" y="748.1" width="1" height="1" fill="#fff" opacity="0.37"/><rect x="289.1" y="787.8" width="1" height="1" fill="#fff" opacity="0.71"/><rect x="593.4" y="920.2" width="1" height="1" fill="#fff" opacity="0.63"/><rect x="745.5" y="907.1" width="1" height="1" fill="#fff" opacity="0.54"/><rect x="602.5" y="931.1" width="1" height="1" fill="#fff" opacity="0.53"/><rect x="629.9" y="794.1" width="1" height="1" fill="#fff" opacity="0.57"/><rect x="517.2" y="949.8" width="1" height="1" fill="#fff" opacity="0.26"/><rect x="377.6" y="744.5" width="1" height="1" fill="#fff" opacity="0.63"/><rect x="747.6" y="919.6" width="1" height="1" fill="#fff" opacity="0.40"/><rect x="701.4" y="956.6" width="1" height="1" fill="#fff" opacity="0.51"/><rect x="416.3" y="819.5" width="1" height="1" fill="#fff" opacity="0.43"/><rect x="446.8" y="855.9" width="1" height="1" fill="#fff" opacity="0.55"/><rect x="757.6" y="749.5" width="1" height="1" fill="#fff" opacity="0.51"/><rect x="305.9" y="767.6" width="1" height="1" fill="#fff" opacity="0.65"/><rect x="576.5" y="994.0" width="1" height="1" fill="#fff" opacity="0.45"/><rect x="293.1" y="843.6" width="1" height="1" fill="#fff" opacity="0.53"/><rect x="759.5" y="1011.6" width="1" height="1" fill="#fff" opacity="0.46"/><rect x="494.3" y="762.9" width="1" height="1" fill="#fff" opacity="0.55"/><rect x="393.2" y="776.9" width="1" height="1" fill="#fff" opacity="0.21"/><rect x="288.4" y="927.5" width="1" height="1" fill="#fff" opacity="0.27"/><rect x="774.0" y="758.9" width="1" height="1" fill="#fff" opacity="0.68"/><rect x="351.1" y="739.0" width="1" height="1" fill="#fff" opacity="0.60"/><rect x="408.3" y="941.6" width="1" height="1" fill="#fff" opacity="0.30"/><rect x="311.3" y="953.0" width="1" height="1" fill="#fff" opacity="0.59"/><rect x="718.0" y="940.5" width="1" height="1" fill="#fff" opacity="0.25"/><rect x="603.5" y="934.7" width="1" height="1" fill="#fff" opacity="0.45"/><rect x="756.8" y="805.9" width="1" height="1" fill="#fff" opacity="0.73"/><rect x="648.2" y="737.2" width="1" height="1" fill="#fff" opacity="0.21"/><rect x="614.6" y="965.3" width="1" height="1" fill="#fff" opacity="0.24"/><rect x="443.1" y="940.4" width="1" height="1" fill="#fff" opacity="0.29"/><rect x="720.8" y="871.6" width="1" height="1" fill="#fff" opacity="0.23"/><rect x="471.6" y="896.7" width="1" height="1" fill="#fff" opacity="0.44"/><rect x="627.8" y="775.0" width="1" height="1" fill="#fff" opacity="0.64"/><rect x="469.4" y="916.5" width="1" height="1" fill="#fff" opacity="0.55"/><rect x="497.1" y="843.2" width="1" height="1" fill="#fff" opacity="0.63"/><rect x="763.2" y="956.0" width="1" height="1" fill="#fff" opacity="0.51"/><rect x="433.7" y="751.2" width="1" height="1" fill="#fff" opacity="0.74"/><rect x="641.1" y="968.2" width="1" height="1" fill="#fff" opacity="0.38"/><rect x="591.9" y="1010.6" width="1" height="1" fill="#fff" opacity="0.66"/><rect x="589.6" y="821.3" width="1" height="1" fill="#fff" opacity="0.44"/><rect x="734.5" y="840.6" width="1" height="1" fill="#fff" opacity="0.58"/><rect x="589.9" y="987.6" width="1" height="1" fill="#fff" opacity="0.64"/><rect x="429.1" y="734.5" width="1" height="1" fill="#fff" opacity="0.34"/><rect x="499.4" y="900.0" width="1" height="1" fill="#fff" opacity="0.65"/><rect x="734.2" y="746.0" width="1" height="1" fill="#fff" opacity="0.66"/><rect x="695.9" y="979.4" width="1" height="1" fill="#fff" opacity="0.51"/><rect x="424.3" y="974.9" width="1" height="1" fill="#fff" opacity="0.64"/><rect x="631.7" y="992.6" width="1" height="1" fill="#fff" opacity="0.39"/><rect x="329.0" y="890.7" width="1" height="1" fill="#fff" opacity="0.64"/><rect x="387.2" y="946.3" width="1" height="1" fill="#fff" opacity="0.71"/><rect x="404.2" y="905.8" width="1" height="1" fill="#fff" opacity="0.57"/><rect x="521.0" y="792.5" width="1" height="1" fill="#fff" opacity="0.34"/><rect x="665.3" y="958.0" width="1" height="1" fill="#fff" opacity="0.45"/><rect x="330.3" y="962.3" width="1" height="1" fill="#fff" opacity="0.62"/><rect x="403.6" y="898.0" width="1" height="1" fill="#fff" opacity="0.69"/><rect x="733.0" y="881.7" width="1" height="1" fill="#fff" opacity="0.46"/><rect x="583.6" y="787.5" width="1" height="1" fill="#fff" opacity="0.31"/><rect x="377.3" y="932.4" width="1" height="1" fill="#fff" opacity="0.40"/><rect x="571.0" y="847.9" width="1" height="1" fill="#fff" opacity="0.48"/><rect x="361.2" y="746.6" width="1" height="1" fill="#fff" opacity="0.75"/><rect x="474.9" y="764.0" width="1" height="1" fill="#fff" opacity="0.55"/><rect x="683.6" y="778.2" width="1" height="1" fill="#fff" opacity="0.53"/><rect x="460.2" y="881.0" width="1" height="1" fill="#fff" opacity="0.21"/><rect x="303.0" y="1014.3" width="1" height="1" fill="#fff" opacity="0.68"/><rect x="531.6" y="894.5" width="1" height="1" fill="#fff" opacity="0.34"/><rect x="679.5" y="854.5" width="1" height="1" fill="#fff" opacity="0.72"/><rect x="673.5" y="965.7" width="1" height="1" fill="#fff" opacity="0.73"/><rect x="414.3" y="744.7" width="1" height="1" fill="#fff" opacity="0.31"/><rect x="377.3" y="757.7" width="1" height="1" fill="#fff" opacity="0.23"/><rect x="567.5" y="980.4" width="1" height="1" fill="#fff" opacity="0.45"/><rect x="764.3" y="991.5" width="1" height="1" fill="#fff" opacity="0.24"/><rect x="588.0" y="846.5" width="1" height="1" fill="#fff" opacity="0.27"/><rect x="770.4" y="806.8" width="1" height="1" fill="#fff" opacity="0.51"/><rect x="609.5" y="1004.7" width="1" height="1" fill="#fff" opacity="0.57"/><rect x="484.5" y="860.9" width="1" height="1" fill="#fff" opacity="0.29"/><rect x="773.7" y="1014.7" width="1" height="1" fill="#fff" opacity="0.32"/><rect x="305.5" y="806.4" width="1" height="1" fill="#fff" opacity="0.39"/><rect x="741.9" y="990.0" width="1" height="1" fill="#fff" opacity="0.66"/><rect x="309.8" y="956.5" width="1" height="1" fill="#fff" opacity="0.59"/><rect x="612.6" y="1012.9" width="1" height="1" fill="#fff" opacity="0.23"/><rect x="359.1" y="947.7" width="1" height="1" fill="#fff" opacity="0.72"/><rect x="627.8" y="818.6" width="1" height="1" fill="#fff" opacity="0.53"/><rect x="668.7" y="763.8" width="1" height="1" fill="#fff" opacity="0.38"/><rect x="415.8" y="769.1" width="1" height="1" fill="#fff" opacity="0.46"/><rect x="371.1" y="801.5" width="1" height="1" fill="#fff" opacity="0.28"/><rect x="628.2" y="737.6" width="1" height="1" fill="#fff" opacity="0.59"/><rect x="384.5" y="744.2" width="1" height="1" fill="#fff" opacity="0.71"/><rect x="397.4" y="998.3" width="1" height="1" fill="#fff" opacity="0.68"/><rect x="734.8" y="773.6" width="1" height="1" fill="#fff" opacity="0.45"/><rect x="335.0" y="996.8" width="1" height="1" fill="#fff" opacity="0.66"/><rect x="603.3" y="862.0" width="1" height="1" fill="#fff" opacity="0.39"/><rect x="701.6" y="869.1" width="1" height="1" fill="#fff" opacity="0.55"/><rect x="358.1" y="796.7" width="1" height="1" fill="#fff" opacity="0.23"/><rect x="646.4" y="890.6" width="1" height="1" fill="#fff" opacity="0.28"/><rect x="725.7" y="809.4" width="1" height="1" fill="#fff" opacity="0.43"/><rect x="364.6" y="810.7" width="1" height="1" fill="#fff" opacity="0.66"/><rect x="454.9" y="781.5" width="1" height="1" fill="#fff" opacity="0.47"/><rect x="446.6" y="989.6" width="1" height="1" fill="#fff" opacity="0.26"/><rect x="780.2" y="750.1" width="1" height="1" fill="#fff" opacity="0.69"/><rect x="623.5" y="793.8" width="1" height="1" fill="#fff" opacity="0.46"/><rect x="430.5" y="807.0" width="1" height="1" fill="#fff" opacity="0.31"/><rect x="470.0" y="1014.5" width="1" height="1" fill="#fff" opacity="0.75"/><rect x="753.2" y="761.6" width="1" height="1" fill="#fff" opacity="0.36"/><rect x="738.6" y="750.3" width="1" height="1" fill="#fff" opacity="0.60"/><rect x="434.2" y="1011.0" width="1" height="1" fill="#fff" opacity="0.21"/><rect x="693.5" y="830.5" width="1" height="1" fill="#fff" opacity="0.28"/><rect x="287.0" y="969.5" width="1" height="1" fill="#fff" opacity="0.49"/><rect x="379.8" y="857.2" width="1" height="1" fill="#fff" opacity="0.70"/><rect x="396.2" y="895.7" width="1" height="1" fill="#fff" opacity="0.28"/><rect x="377.0" y="952.0" width="1" height="1" fill="#fff" opacity="0.59"/><rect x="385.3" y="756.4" width="1" height="1" fill="#fff" opacity="0.25"/><rect x="593.3" y="874.2" width="1" height="1" fill="#fff" opacity="0.35"/><rect x="390.0" y="907.3" width="1" height="1" fill="#fff" opacity="0.59"/><rect x="695.8" y="899.0" width="1" height="1" fill="#fff" opacity="0.31"/><rect x="319.2" y="941.4" width="1" height="1" fill="#fff" opacity="0.42"/><rect x="650.4" y="749.7" width="1" height="1" fill="#fff" opacity="0.65"/><rect x="455.3" y="972.3" width="1" height="1" fill="#fff" opacity="0.68"/><rect x="535.0" y="738.4" width="1" height="1" fill="#fff" opacity="0.70"/><rect x="526.7" y="980.8" width="1" height="1" fill="#fff" opacity="0.35"/><rect x="380.0" y="969.3" width="1" height="1" fill="#fff" opacity="0.40"/><rect x="368.6" y="839.0" width="1" height="1" fill="#fff" opacity="0.53"/><rect x="288.3" y="881.1" width="1" height="1" fill="#fff" opacity="0.45"/><rect x="546.4" y="768.2" width="1" height="1" fill="#fff" opacity="0.59"/><rect x="698.4" y="978.9" width="1" height="1" fill="#fff" opacity="0.38"/><rect x="645.1" y="841.9" width="1" height="1" fill="#fff" opacity="0.61"/><rect x="316.9" y="981.0" width="1" height="1" fill="#fff" opacity="0.72"/><rect x="535.9" y="879.3" width="1" height="1" fill="#fff" opacity="0.49"/><rect x="557.4" y="739.9" width="1" height="1" fill="#fff" opacity="0.73"/><rect x="399.0" y="785.6" width="1" height="1" fill="#fff" opacity="0.26"/><rect x="412.5" y="965.3" width="1" height="1" fill="#fff" opacity="0.22"/><rect x="334.7" y="931.8" width="1" height="1" fill="#fff" opacity="0.31"/><rect x="294.9" y="903.6" width="1" height="1" fill="#fff" opacity="0.52"/><rect x="550.1" y="932.8" width="1" height="1" fill="#fff" opacity="0.26"/><rect x="725.1" y="936.9" width="1" height="1" fill="#fff" opacity="0.22"/><rect x="348.1" y="873.7" width="1" height="1" fill="#fff" opacity="0.48"/><rect x="427.2" y="768.5" width="1" height="1" fill="#fff" opacity="0.42"/><rect x="355.2" y="901.5" width="1" height="1" fill="#fff" opacity="0.67"/><rect x="360.3" y="896.1" width="1" height="1" fill="#fff" opacity="0.61"/><rect x="369.0" y="967.8" width="1" height="1" fill="#fff" opacity="0.72"/><rect x="482.3" y="853.0" width="1" height="1" fill="#fff" opacity="0.66"/><rect x="551.4" y="846.0" width="1" height="1" fill="#fff" opacity="0.72"/><rect x="678.3" y="829.8" width="1" height="1" fill="#fff" opacity="0.33"/><rect x="455.2" y="857.3" width="1" height="1" fill="#fff" opacity="0.74"/><rect x="692.2" y="992.3" width="1" height="1" fill="#fff" opacity="0.65"/><rect x="714.1" y="749.2" width="1" height="1" fill="#fff" opacity="0.48"/><rect x="769.7" y="998.4" width="1" height="1" fill="#fff" opacity="0.34"/><rect x="499.2" y="913.1" width="1" height="1" fill="#fff" opacity="0.40"/><rect x="554.1" y="753.6" width="1" height="1" fill="#fff" opacity="0.44"/><rect x="540.9" y="739.9" width="1" height="1" fill="#fff" opacity="0.28"/><rect x="775.7" y="953.8" width="1" height="1" fill="#fff" opacity="0.72"/><rect x="605.8" y="963.0" width="1" height="1" fill="#fff" opacity="0.69"/><rect x="732.7" y="743.7" width="1" height="1" fill="#fff" opacity="0.55"/><rect x="420.2" y="926.0" width="1" height="1" fill="#fff" opacity="0.35"/><rect x="559.8" y="995.6" width="1" height="1" fill="#fff" opacity="0.54"/><rect x="412.5" y="881.2" width="1" height="1" fill="#fff" opacity="0.44"/><rect x="766.2" y="815.4" width="1" height="1" fill="#fff" opacity="0.37"/><rect x="613.0" y="768.1" width="1" height="1" fill="#fff" opacity="0.53"/><rect x="768.8" y="879.4" width="1" height="1" fill="#fff" opacity="0.35"/><rect x="521.5" y="885.1" width="1" height="1" fill="#fff" opacity="0.28"/><rect x="348.6" y="771.2" width="1" height="1" fill="#fff" opacity="0.36"/><rect x="491.3" y="815.6" width="1" height="1" fill="#fff" opacity="0.33"/><rect x="330.4" y="888.6" width="1" height="1" fill="#fff" opacity="0.66"/><rect x="594.0" y="895.4" width="1" height="1" fill="#fff" opacity="0.56"/><rect x="387.6" y="935.0" width="1" height="1" fill="#fff" opacity="0.45"/><rect x="562.8" y="907.4" width="1" height="1" fill="#fff" opacity="0.46"/><rect x="442.8" y="802.6" width="1" height="1" fill="#fff" opacity="0.32"/><rect x="544.8" y="842.4" width="1" height="1" fill="#fff" opacity="0.52"/><rect x="292.0" y="833.8" width="1" height="1" fill="#fff" opacity="0.67"/><rect x="406.5" y="891.5" width="1" height="1" fill="#fff" opacity="0.47"/><rect x="429.8" y="1013.5" width="1" height="1" fill="#fff" opacity="0.36"/><rect x="675.9" y="778.9" width="1" height="1" fill="#fff" opacity="0.24"/><rect x="726.0" y="858.5" width="1" height="1" fill="#fff" opacity="0.23"/><rect x="481.9" y="858.5" width="1" height="1" fill="#fff" opacity="0.60"/><rect x="341.2" y="797.7" width="1" height="1" fill="#fff" opacity="0.73"/><rect x="659.0" y="777.7" width="1" height="1" fill="#fff" opacity="0.39"/><rect x="464.0" y="925.1" width="1" height="1" fill="#fff" opacity="0.54"/><rect x="715.2" y="966.4" width="1" height="1" fill="#fff" opacity="0.48"/><rect x="659.1" y="944.3" width="1" height="1" fill="#fff" opacity="0.62"/><rect x="526.0" y="956.1" width="1" height="1" fill="#fff" opacity="0.59"/><rect x="747.9" y="770.0" width="1" height="1" fill="#fff" opacity="0.68"/><rect x="288.2" y="950.7" width="1" height="1" fill="#fff" opacity="0.52"/><rect x="537.4" y="1006.5" width="1" height="1" fill="#fff" opacity="0.51"/><rect x="497.0" y="955.8" width="1" height="1" fill="#fff" opacity="0.68"/><rect x="592.7" y="841.4" width="1" height="1" fill="#fff" opacity="0.45"/><rect x="517.2" y="938.6" width="1" height="1" fill="#fff" opacity="0.36"/><rect x="483.3" y="891.2" width="1" height="1" fill="#fff" opacity="0.41"/><rect x="448.6" y="956.7" width="1" height="1" fill="#fff" opacity="0.67"/><rect x="538.3" y="859.7" width="1" height="1" fill="#fff" opacity="0.30"/><rect x="439.5" y="775.0" width="1" height="1" fill="#fff" opacity="0.52"/><rect x="579.7" y="758.9" width="1" height="1" fill="#fff" opacity="0.71"/><rect x="449.6" y="972.7" width="1" height="1" fill="#fff" opacity="0.66"/><rect x="770.2" y="791.8" width="1" height="1" fill="#fff" opacity="0.43"/><rect x="745.8" y="737.0" width="1" height="1" fill="#fff" opacity="0.23"/><rect x="571.3" y="874.7" width="1" height="1" fill="#fff" opacity="0.71"/><rect x="676.6" y="886.4" width="1" height="1" fill="#fff" opacity="0.75"/><rect x="547.3" y="880.4" width="1" height="1" fill="#fff" opacity="0.58"/><rect x="482.7" y="835.2" width="1" height="1" fill="#fff" opacity="0.53"/><rect x="463.3" y="1002.3" width="1" height="1" fill="#fff" opacity="0.57"/><rect x="551.3" y="762.0" width="1" height="1" fill="#fff" opacity="0.41"/><rect x="488.5" y="892.9" width="1" height="1" fill="#fff" opacity="0.52"/><rect x="730.3" y="1006.9" width="1" height="1" fill="#fff" opacity="0.47"/><rect x="508.3" y="910.8" width="1" height="1" fill="#fff" opacity="0.75"/><rect x="459.4" y="884.0" width="1" height="1" fill="#fff" opacity="0.65"/><rect x="372.2" y="824.0" width="1" height="1" fill="#fff" opacity="0.74"/><rect x="703.1" y="879.1" width="1" height="1" fill="#fff" opacity="0.26"/><rect x="737.7" y="929.2" width="1" height="1" fill="#fff" opacity="0.65"/><rect x="786.1" y="985.3" width="1" height="1" fill="#fff" opacity="0.43"/><rect x="365.0" y="816.0" width="1" height="1" fill="#fff" opacity="0.48"/><rect x="541.0" y="787.2" width="1" height="1" fill="#fff" opacity="0.30"/><rect x="604.2" y="904.7" width="1" height="1" fill="#fff" opacity="0.39"/><rect x="787.8" y="914.1" width="1" height="1" fill="#fff" opacity="0.22"/><rect x="493.8" y="956.9" width="1" height="1" fill="#fff" opacity="0.37"/><rect x="634.8" y="735.1" width="1" height="1" fill="#fff" opacity="0.37"/><rect x="711.3" y="899.9" width="1" height="1" fill="#fff" opacity="0.57"/><rect x="385.3" y="874.9" width="1" height="1" fill="#fff" opacity="0.50"/><rect x="420.3" y="917.0" width="1" height="1" fill="#fff" opacity="0.49"/><rect x="789.5" y="896.6" width="1" height="1" fill="#fff" opacity="0.43"/><rect x="347.4" y="778.4" width="1" height="1" fill="#fff" opacity="0.62"/><rect x="339.9" y="762.3" width="1" height="1" fill="#fff" opacity="0.29"/><rect x="549.9" y="966.9" width="1" height="1" fill="#fff" opacity="0.54"/><rect x="693.3" y="751.6" width="1" height="1" fill="#fff" opacity="0.21"/><rect x="675.1" y="825.4" width="1" height="1" fill="#fff" opacity="0.59"/><rect x="464.7" y="781.9" width="1" height="1" fill="#fff" opacity="0.35"/><rect x="336.2" y="989.8" width="1" height="1" fill="#fff" opacity="0.52"/><rect x="462.2" y="861.3" width="1" height="1" fill="#fff" opacity="0.41"/><rect x="313.6" y="986.0" width="1" height="1" fill="#fff" opacity="0.52"/><rect x="770.6" y="858.4" width="1" height="1" fill="#fff" opacity="0.54"/><rect x="411.9" y="746.4" width="1" height="1" fill="#fff" opacity="0.71"/><rect x="717.6" y="823.1" width="1" height="1" fill="#fff" opacity="0.69"/><rect x="698.0" y="819.9" width="1" height="1" fill="#fff" opacity="0.53"/><rect x="770.8" y="874.2" width="1" height="1" fill="#fff" opacity="0.72"/><rect x="408.7" y="844.3" width="1" height="1" fill="#fff" opacity="0.60"/><rect x="397.8" y="821.5" width="1" height="1" fill="#fff" opacity="0.68"/><rect x="530.6" y="958.4" width="1" height="1" fill="#fff" opacity="0.33"/><rect x="373.6" y="835.4" width="1" height="1" fill="#fff" opacity="0.30"/><rect x="776.6" y="816.3" width="1" height="1" fill="#fff" opacity="0.51"/><rect x="344.0" y="885.1" width="1" height="1" fill="#fff" opacity="0.41"/><rect x="489.6" y="752.5" width="1" height="1" fill="#fff" opacity="0.27"/><rect x="703.0" y="833.4" width="1" height="1" fill="#fff" opacity="0.33"/><rect x="382.6" y="814.3" width="1" height="1" fill="#fff" opacity="0.33"/><rect x="303.6" y="922.0" width="1" height="1" fill="#fff" opacity="0.39"/><rect x="364.7" y="933.8" width="1" height="1" fill="#fff" opacity="0.25"/><rect x="422.2" y="970.3" width="1" height="1" fill="#fff" opacity="0.27"/><rect x="509.9" y="970.7" width="1" height="1" fill="#fff" opacity="0.64"/><rect x="366.4" y="833.9" width="1" height="1" fill="#fff" opacity="0.60"/><rect x="476.3" y="1005.2" width="1" height="1" fill="#fff" opacity="0.31"/><rect x="766.2" y="876.9" width="1" height="1" fill="#fff" opacity="0.33"/><rect x="514.6" y="771.1" width="1" height="1" fill="#fff" opacity="0.59"/><rect x="417.7" y="988.6" width="1" height="1" fill="#fff" opacity="0.52"/><rect x="471.8" y="803.7" width="1" height="1" fill="#fff" opacity="0.53"/><rect x="393.3" y="980.9" width="1" height="1" fill="#fff" opacity="0.27"/><rect x="545.1" y="887.6" width="1" height="1" fill="#fff" opacity="0.35"/><rect x="675.7" y="842.9" width="1" height="1" fill="#fff" opacity="0.56"/><rect x="572.7" y="822.0" width="1" height="1" fill="#fff" opacity="0.41"/><rect x="329.4" y="784.1" width="1" height="1" fill="#fff" opacity="0.67"/><rect x="448.1" y="921.6" width="1" height="1" fill="#fff" opacity="0.26"/><rect x="569.8" y="836.3" width="1" height="1" fill="#fff" opacity="0.48"/><rect x="436.0" y="752.7" width="1" height="1" fill="#fff" opacity="0.37"/><rect x="400.3" y="769.7" width="1" height="1" fill="#fff" opacity="0.59"/><rect x="428.6" y="848.2" width="1" height="1" fill="#fff" opacity="0.70"/><rect x="677.4" y="983.8" width="1" height="1" fill="#fff" opacity="0.67"/><rect x="352.7" y="812.3" width="1" height="1" fill="#fff" opacity="0.22"/><rect x="629.2" y="921.8" width="1" height="1" fill="#fff" opacity="0.39"/><rect x="494.3" y="920.5" width="1" height="1" fill="#fff" opacity="0.58"/><rect x="411.5" y="973.6" width="1" height="1" fill="#fff" opacity="0.39"/><rect x="603.6" y="785.4" width="1" height="1" fill="#fff" opacity="0.26"/><rect x="746.9" y="941.7" width="1" height="1" fill="#fff" opacity="0.59"/><rect x="306.4" y="745.3" width="1" height="1" fill="#fff" opacity="0.29"/><rect x="386.0" y="819.8" width="1" height="1" fill="#fff" opacity="0.41"/><rect x="305.8" y="822.0" width="1" height="1" fill="#fff" opacity="0.55"/><rect x="376.7" y="971.6" width="1" height="1" fill="#fff" opacity="0.51"/><rect x="647.9" y="806.1" width="1" height="1" fill="#fff" opacity="0.44"/><rect x="631.6" y="832.8" width="1" height="1" fill="#fff" opacity="0.20"/><rect x="707.3" y="953.7" width="1" height="1" fill="#fff" opacity="0.36"/><rect x="307.7" y="975.7" width="1" height="1" fill="#fff" opacity="0.53"/><rect x="309.9" y="803.2" width="1" height="1" fill="#fff" opacity="0.26"/><rect x="685.7" y="793.5" width="1" height="1" fill="#fff" opacity="0.70"/><rect x="664.5" y="758.4" width="1" height="1" fill="#fff" opacity="0.58"/><rect x="484.8" y="945.6" width="1" height="1" fill="#fff" opacity="0.66"/><rect x="428.0" y="759.5" width="1" height="1" fill="#fff" opacity="0.72"/><rect x="500.1" y="997.2" width="1" height="1" fill="#fff" opacity="0.58"/><rect x="659.0" y="968.9" width="1" height="1" fill="#fff" opacity="0.55"/><rect x="514.7" y="749.4" width="1" height="1" fill="#fff" opacity="0.58"/><rect x="502.3" y="878.9" width="1" height="1" fill="#fff" opacity="0.71"/><rect x="350.5" y="949.6" width="1" height="1" fill="#fff" opacity="0.22"/><g filter="url(#gl)" opacity=".8"><rect x="289" y="799" width="233" height="41" fill="#3f9a3f"/><rect x="365" y="836" width="92" height="42" fill="#3f9a3f"/><rect x="405" y="874" width="19" height="28" fill="#3f9a3f"/><rect x="618" y="799" width="54" height="79" fill="#3f9a3f"/><rect x="718" y="799" width="30" height="79" fill="#3f9a3f"/><rect x="744" y="799" width="42" height="79" fill="#3f9a3f"/><rect x="479" y="908" width="79" height="84" fill="#3f9a3f"/><rect x="289" y="912" width="70" height="44" fill="#3f9a3f"/><rect x="289" y="942" width="194" height="50" fill="#3f9a3f"/><rect x="518" y="973" width="268" height="46" fill="#3f9a3f"/><rect x="554" y="963" width="232" height="16" fill="#3f9a3f"/></g><rect x="291" y="801" width="229" height="37" fill="#e9e0c3"/><rect x="367" y="838" width="88" height="38" fill="#e2d9ba"/><rect x="407" y="876" width="15" height="24" fill="#d8cfb0"/><rect x="620" y="801" width="50" height="75" fill="#e6ddc0"/><rect x="720" y="801" width="26" height="75" fill="#b9b09a"/><rect x="746" y="801" width="38" height="75" fill="#e4dbbd"/><rect x="481" y="910" width="75" height="80" fill="#e9e0c3"/><rect x="291" y="914" width="66" height="40" fill="#ded5b6"/><rect x="291" y="944" width="190" height="46" fill="#e3dabc"/><rect x="520" y="975" width="264" height="42" fill="#e6ddc0"/><rect x="556" y="965" width="228" height="12" fill="#efe7cc"/><path d="M612.6 811.3 L621.8 799.9 L632.1 799.9 L632.1 807.2 L620.7 818.0 Z" fill="#2f8f2f"/><path d="M471.8 912.0 L481.8 908.8 L481.8 919.6 L471.8 922.8 Z" fill="#2f8f2f"/><path d="M555.7 908.8 L565.8 912.0 L565.8 922.8 L555.7 919.6 Z" fill="#2f8f2f"/><path d="M357.2 910.9 L365.3 912.8 L365.3 918.2 L357.2 916.9 Z" fill="#2f8f2f"/><path d="M367 838h88l-6 6h-76zM407 876h15v3h-15z" fill="#b5ac8e"/><path d="M291 944l66 0 0-6-40 4z" fill="#c9c0a2"/><rect x="670" y="813" width="50" height="63" fill="#15130c"/><rect x="597" y="927" width="17" height="18" fill="#d62a1e"/><g filter="url(#b1)"><rect x="310" y="853" width="18" height="10" fill="#c8bca8" opacity=".6"/><rect x="316" y="860" width="12" height="48" fill="#a89a88" opacity=".55"/><rect x="318" y="864" width="8" height="12" fill="#d8c0b8" opacity=".6"/></g><rect x="286" y="734" width="505" height="283" fill="url(#vg)"/><text x="335" y="822" textLength="134" lengthAdjust="spacingAndGlyphs" fill="#fff" style="font-family:Liberation Sans;font-size:29px;font-weight:bold;font-style:italic">ARGOS</text><text x="334" y="835.5" textLength="121" lengthAdjust="spacingAndGlyphs" fill="#f4f4f4" style="font-family:Liberation Sans;font-size:9.5px;font-style:italic;stroke:#f4f4f4;stroke-width:.3px">CICE MPV PROJECT</text><text x="335.5" y="858" textLength="50" lengthAdjust="spacingAndGlyphs" fill="#fff" style="font-family:Liberation Sans;font-size:9.5px;font-weight:bold">Continue</text><text x="335.5" y="871" textLength="56" lengthAdjust="spacingAndGlyphs" fill="#fff" style="font-family:Liberation Sans;font-size:9.5px;font-weight:bold">New game</text><text x="335.5" y="884" textLength="45" lengthAdjust="spacingAndGlyphs" fill="#fff" style="font-family:Liberation Sans;font-size:9.5px;font-weight:bold">Settings</text><text x="335.5" y="897" textLength="39" lengthAdjust="spacingAndGlyphs" fill="#fff" style="font-family:Liberation Sans;font-size:9.5px;font-weight:bold">Credits</text><text x="335.5" y="910" textLength="20" lengthAdjust="spacingAndGlyphs" fill="#fff" style="font-family:Liberation Sans;font-size:9.5px;font-weight:bold">Exit</text><text x="492.6" y="797" textLength="61" lengthAdjust="spacingAndGlyphs" fill="#f7b500" style="font-family:Liberation Sans;font-size:9.5px;font-weight:bold">Option test</text><text x="492.6" y="856" textLength="61" lengthAdjust="spacingAndGlyphs" fill="#f7b500" style="font-family:Liberation Sans;font-size:9.5px;font-weight:bold">Option test</text><text x="492.6" y="810" textLength="50" lengthAdjust="spacingAndGlyphs" fill="#fff" style="font-family:Liberation Sans;font-size:8.5px;font-weight:bold">Option test</text><text x="492.6" y="823" textLength="50" lengthAdjust="spacingAndGlyphs" fill="#fff" style="font-family:Liberation Sans;font-size:8.5px;font-weight:bold">Option test</text><text x="492.6" y="836" textLength="50" lengthAdjust="spacingAndGlyphs" fill="#fff" style="font-family:Liberation Sans;font-size:8.5px;font-weight:bold">Option test</text><text x="492.6" y="869" textLength="50" lengthAdjust="spacingAndGlyphs" fill="#fff" style="font-family:Liberation Sans;font-size:8.5px;font-weight:bold">Option test</text><text x="492.6" y="882" textLength="50" lengthAdjust="spacingAndGlyphs" fill="#fff" style="font-family:Liberation Sans;font-size:8.5px;font-weight:bold">Option test</text><text x="492.6" y="895" textLength="50" lengthAdjust="spacingAndGlyphs" fill="#fff" style="font-family:Liberation Sans;font-size:8.5px;font-weight:bold">Option test</text><text x="492.6" y="908" textLength="50" lengthAdjust="spacingAndGlyphs" fill="#fff" style="font-family:Liberation Sans;font-size:8.5px;font-weight:bold">Option test</text><text x="492.6" y="921.5" textLength="50" lengthAdjust="spacingAndGlyphs" fill="#fff" style="font-family:Liberation Sans;font-size:8.5px;font-weight:bold">Option test</text><text x="492.6" y="935" textLength="50" lengthAdjust="spacingAndGlyphs" fill="#fff" style="font-family:Liberation Sans;font-size:8.5px;font-weight:bold">Option test</text><text x="492.6" y="948" textLength="50" lengthAdjust="spacingAndGlyphs" fill="#fff" style="font-family:Liberation Sans;font-size:8.5px;font-weight:bold">Option test</text><rect x="633.500" y="801.8" width="108.300" height="10.800" rx="1" fill="#f4f4f4"/><text x="636" y="810.0999999999999" textLength="36" lengthAdjust="spacingAndGlyphs" fill="#333" style="font-family:Liberation Sans;font-size:8px;">Option A</text><path d="M735 805.8l2 2.500 2-2.500" stroke="#777" stroke-width=".8" fill="none"/><rect x="633.500" y="861" width="108.300" height="10.800" rx="1" fill="#f4f4f4"/><text x="636" y="869.3" textLength="36" lengthAdjust="spacingAndGlyphs" fill="#333" style="font-family:Liberation Sans;font-size:8px;">Option A</text><path d="M735 865l2 2.500 2-2.500" stroke="#777" stroke-width=".8" fill="none"/><rect x="633.500" y="874" width="108.300" height="10.800" rx="1" fill="#f4f4f4"/><text x="636" y="882.3" textLength="36" lengthAdjust="spacingAndGlyphs" fill="#333" style="font-family:Liberation Sans;font-size:8px;">Option A</text><path d="M735 878l2 2.500 2-2.500" stroke="#777" stroke-width=".8" fill="none"/><rect x="633.500" y="887" width="108.300" height="10.800" rx="1" fill="#f4f4f4"/><text x="636" y="895.3" textLength="36" lengthAdjust="spacingAndGlyphs" fill="#333" style="font-family:Liberation Sans;font-size:8px;">Option A</text><path d="M735 891l2 2.500 2-2.500" stroke="#777" stroke-width=".8" fill="none"/><rect x="729.600" y="815" width="12.200" height="11.300" rx="1.500" fill="#fafafa"/><path d="M732.500 821l2.500 2.500 4.500-5.500" stroke="#777" stroke-width="1" fill="none"/><rect x="729.600" y="828" width="12.200" height="11.300" rx="1.500" fill="#fafafa"/><path d="M732.500 834l2.500 2.500 4.500-5.500" stroke="#777" stroke-width="1" fill="none"/><rect x="729.600" y="900" width="12.200" height="11.300" rx="1.500" fill="#fafafa"/><path d="M732.500 906l2.500 2.500 4.500-5.500" stroke="#777" stroke-width="1" fill="none"/><rect x="729.600" y="913" width="12.200" height="11.300" rx="1.500" fill="#fafafa"/><path d="M732.500 919l2.500 2.500 4.500-5.500" stroke="#777" stroke-width="1" fill="none"/><rect x="729.600" y="926.5" width="12.200" height="11.300" rx="1.500" fill="#fafafa"/><path d="M732.500 932.5l2.500 2.500 4.500-5.500" stroke="#777" stroke-width="1" fill="none"/><rect x="729.600" y="940" width="12.200" height="11.300" rx="1.500" fill="#fafafa"/><path d="M732.500 946l2.500 2.500 4.500-5.500" stroke="#777" stroke-width="1" fill="none"/><text x="490.7" y="966" textLength="95" lengthAdjust="spacingAndGlyphs" fill="#eee" style="font-family:Liberation Sans;font-size:7.5px;">UIGameInputMessage</text><text x="716" y="968" textLength="26" lengthAdjust="spacingAndGlyphs" fill="#fff" style="font-family:Liberation Sans;font-size:9.5px;font-weight:bold">Back</text><text x="310.6" y="979" textLength="32" lengthAdjust="spacingAndGlyphs" fill="#fff" style="font-family:Liberation Sans;font-size:7px;">HEALTH</text><text x="310.6" y="989" textLength="39" lengthAdjust="spacingAndGlyphs" fill="#fff" style="font-family:Liberation Sans;font-size:7px;">BULLETS</text><rect x="355" y="971.600" width="91" height="8" fill="#bdbdbd" stroke="#888" stroke-width=".6"/><rect x="355" y="982" width="91" height="8" fill="#bdbdbd" stroke="#888" stroke-width=".6"/><text x="311" y="767" textLength="13" lengthAdjust="spacingAndGlyphs" fill="#ee2" style="font-family:Liberation Sans;font-size:5px;">FPS</text><text x="457" y="990" textLength="163" lengthAdjust="spacingAndGlyphs" fill="#fff" style="font-family:Liberation Sans;font-size:4.5px;">Visual Effects ©CICE 2017 - José Miguel Sánchez Fernández</text></svg>
<div class="a" style="left:0px;top:1017px;width:1920px;height:23px;background:#a2a2a2"></div>
<svg style="left:2px;top:1023px" width="15" height="15"><circle cx="7.500" cy="7.500" r="6.800" fill="#f4f4f4" stroke="#555"/><rect x="6.700" y="3.500" width="1.800" height="5.500" fill="#222"/><rect x="6.700" y="10" width="1.800" height="1.800" fill="#222"/></svg>
<div class="t " style="left:20px;top:1023px;font-size:12px;letter-spacing:0.577px;">Current Input type: XBoxController</div>
<div class="a" style="left:1080px;top:75px;width:98px;height:18px;background:linear-gradient(#e6e6e6,#d4d4d4);border:1px solid #979797;border-bottom:none;border-radius:3px 3px 0 0;"></div>
<svg style="left:1088px;top:79px" width="11" height="9"><path d="M3 1h8M3 4.500h8M3 8h8" stroke="#333" stroke-width="1.200"/><path d="M0 .5h2M0 4h2" stroke="#333" stroke-width="1"/></svg>
<div class="t " style="left:1103px;top:76px;font-size:11px;letter-spacing:0.771px;">Hierarchy</div>
<svg style="left:1476px;top:80px" width="8" height="10"><path d="M1.800 3.200V2.800a2.200 2.200 0 0 1 4.400 0V4.500" fill="none" stroke="#555" stroke-width="1.200"/><rect x="0" y="4.500" width="8" height="5.500" rx=".5" fill="#3e3e3e"/></svg>
<svg style="left:1491px;top:84px" width="14" height="7"><path d="M0 1h5L2.500 4z" fill="#444"/><path d="M6 .5h8M6 3h8M6 5.500h8" stroke="#444" stroke-width="1"/></svg>
<div class="a" style="left:1080px;top:92px;width:428px;height:17px;background:linear-gradient(#e6e6e6,#c9c9c9);border-bottom:1px solid #7a7a7a;border-top:1px solid #ececec;"></div>
<div class="a" style="left:1085px;top:93px;width:1px;height:15px;background:#9a9a9a"></div>
<div class="a" style="left:1137px;top:93px;width:1px;height:15px;background:#9a9a9a"></div>
<div class="t " style="left:1092px;top:92px;font-size:11px;letter-spacing:-0.172px;">Create</div>
<svg style="left:1128px;top:97px" width="6" height="4"><path d="M0 0h6L3 3.500z" fill="#444"/></svg>
<div class="a" style="left:1187px;top:93px;width:308px;height:14px;background:#dcdcdc;border:1px solid #6f6f6f;border-radius:7px;box-shadow:inset 0 1px 1px #aaa"></div>
<svg style="left:1192px;top:95px" width="12" height="10"><circle cx="3.500" cy="3.500" r="2.800" fill="none" stroke="#666" stroke-width="1.100"/><path d="M5.500 5.500l2.500 3" stroke="#666" stroke-width="1.300"/><path d="M7.500 2.500h4L9.500 5z" fill="#666"/></svg>
<div class="t " style="left:1203px;top:91px;color:#8a8a8a;font-size:12px;letter-spacing:.3px">All</div>
<div class="a" style="left:1080px;top:109px;width:428px;height:418px;background:#c2c2c2"></div>
<div class="a" style="left:1080px;top:109px;width:412px;height:17px;background:linear-gradient(#e3e3e3,#d6d6d6);border-bottom:1px solid #9c9c9c"></div>
<svg style="left:1097px;top:110px" width="14" height="15.1" viewBox="0 0 21 22.600"><path d="M.8 11.300L16.500 .3Q19.800-.3 20.300 3L20.800 19.600Q20.300 22.900 17 22.300Z" fill="#1c1c1c"/><path d="M4.400 9.800L16.800 1.600 17.700 3.100 12.500 10.100ZM4.400 12.800L16.800 21 17.700 19.500 12.500 12.500ZM14.400 11.300L18.700 5 19 17.600Z" fill="#fff"/></svg>
<div class="t " style="left:1114px;top:110px;font-size:12px;letter-spacing:0.776px;">UI*</div>
<div class="t " style="left:1168px;top:109px;color:#cfcfcf;font-size:12px;letter-spacing:.5px">&#9654; Exit Dialog</div>
<svg style="left:1473px;top:114px" width="14" height="7"><path d="M0 1h5L2.500 4z" fill="#444"/><path d="M6 .5h8M6 3h8M6 5.500h8" stroke="#444" stroke-width="1"/></svg>
<svg style="left:1153px;top:129px" width="10" height="9"><path d="M0 .5h10L5.0 9z" fill="#6e6e6e"/></svg>
<div class="t " style="left:1166px;top:126px;font-size:12px;letter-spacing:0.27px;color:#000;">Settings Section</div>
<svg style="left:1167px;top:145px" width="10" height="9"><path d="M0 .5h10L5.0 9z" fill="#6e6e6e"/></svg>
<div class="t " style="left:1180px;top:142px;font-size:12px;letter-spacing:0.281px;color:#454545;">Game Settings</div>
<svg style="left:1181px;top:161px" width="10" height="9"><path d="M0 .5h10L5.0 9z" fill="#6e6e6e"/></svg>
<div class="t " style="left:1194px;top:158px;font-size:12px;letter-spacing:0.123px;color:#454545;">Elements</div>
<svg style="left:1197px;top:176.5px" width="7" height="9"><path d="M0 0v9L7 4.500z" fill="#6e6e6e"/></svg>
<div class="t " style="left:1208px;top:174px;font-size:12px;letter-spacing:0.24px;color:#4a62ae;">Tittle</div>
<svg style="left:1197px;top:192.5px" width="7" height="9"><path d="M0 0v9L7 4.500z" fill="#6e6e6e"/></svg>
<div class="t " style="left:1208px;top:190px;font-size:12px;letter-spacing:0.069px;color:#4a62ae;">Languages</div>
<svg style="left:1197px;top:208.5px" width="7" height="9"><path d="M0 0v9L7 4.500z" fill="#6e6e6e"/></svg>
<div class="t " style="left:1208px;top:206px;font-size:12px;letter-spacing:0.344px;color:#4a62ae;">Gamepad Vibration</div>
<svg style="left:1197px;top:224.5px" width="7" height="9"><path d="M0 0v9L7 4.500z" fill="#6e6e6e"/></svg>
<div class="t " style="left:1208px;top:222px;font-size:12px;letter-spacing:0.182px;color:#4a62ae;">Show Tips</div>
<svg style="left:1197px;top:240.5px" width="7" height="9"><path d="M0 0v9L7 4.500z" fill="#6e6e6e"/></svg>
<div class="t " style="left:1208px;top:238px;font-size:12px;letter-spacing:0.207px;color:#4a62ae;">Show FPS Counter</div>
<div class="t " style="left:1208px;top:254px;font-size:12px;letter-spacing:0.424px;color:#4a62ae;">Separator</div>
<svg style="left:1197px;top:272.5px" width="7" height="9"><path d="M0 0v9L7 4.500z" fill="#6e6e6e"/></svg>
<div class="t " style="left:1208px;top:270px;font-size:12px;letter-spacing:-0.018px;color:#454545;">Back</div>
<svg style="left:1183px;top:288.5px" width="7" height="9"><path d="M0 0v9L7 4.500z" fill="#6e6e6e"/></svg>
<div class="t " style="left:1194px;top:286px;font-size:12px;letter-spacing:0.298px;color:#4a62ae;">InputHints</div>
<svg style="left:1167px;top:305px" width="10" height="9"><path d="M0 .5h10L5.0 9z" fill="#6e6e6e"/></svg>
<div class="t " style="left:1180px;top:302px;font-size:12px;letter-spacing:0.254px;color:#000;">Graphics Settings</div>
<svg style="left:1181px;top:321px" width="10" height="9"><path d="M0 .5h10L5.0 9z" fill="#6e6e6e"/></svg>
<div class="t " style="left:1194px;top:318px;font-size:12px;letter-spacing:0.123px;color:#000;">Elements</div>
<svg style="left:1197px;top:336.5px" width="7" height="9"><path d="M0 0v9L7 4.500z" fill="#6e6e6e"/></svg>
<div class="t " style="left:1208px;top:334px;font-size:12px;letter-spacing:0.227px;color:#12238a;">MainSettingsTittle</div>
<svg style="left:1195px;top:353px" width="10" height="9"><path d="M0 .5h10L5.0 9z" fill="#6e6e6e"/></svg>
<div class="t " style="left:1208px;top:350px;font-size:12px;letter-spacing:0.286px;color:#12238a;">Resolution list</div>
<div class="t " style="left:1222px;top:366px;font-size:12px;letter-spacing:0.028px;color:#12238a;">Label</div>
<svg style="left:1209px;top:385px" width="10" height="9"><path d="M0 .5h10L5.0 9z" fill="#6e6e6e"/></svg>
<div class="t " style="left:1222px;top:382px;font-size:12px;letter-spacing:0.297px;color:#12238a;">Background</div>
<div class="t " style="left:1236px;top:398px;font-size:12px;letter-spacing:0.028px;color:#12238a;">Label</div>
<div class="t " style="left:1236px;top:414px;font-size:12px;letter-spacing:0.331px;color:#12238a;">Arrow</div>
<div class="a" style="left:1080px;top:429px;width:412px;height:16px;background:#3e7de7"></div>
<svg style="left:1225px;top:432.5px" width="7" height="9"><path d="M0 0v9L7 4.500z" fill="#2a50a0"/></svg>
<div class="t " style="left:1236px;top:430px;font-size:12px;letter-spacing:0.414px;color:#a8c0ee;">Template</div>
<svg style="left:1197px;top:448.5px" width="7" height="9"><path d="M0 0v9L7 4.500z" fill="#6e6e6e"/></svg>
<div class="t " style="left:1208px;top:446px;font-size:12px;letter-spacing:0.114px;color:#12238a;">Fullscreen</div>
<svg style="left:1197px;top:464.5px" width="7" height="9"><path d="M0 0v9L7 4.500z" fill="#6e6e6e"/></svg>
<div class="t " style="left:1208px;top:462px;font-size:12px;letter-spacing:0.266px;color:#12238a;">VSync</div>
<div class="t " style="left:1208px;top:478px;font-size:12px;letter-spacing:0.424px;color:#12238a;">Separator</div>
<svg style="left:1197px;top:496.5px" width="7" height="9"><path d="M0 0v9L7 4.500z" fill="#6e6e6e"/></svg>
<div class="t " style="left:1208px;top:494px;font-size:12px;letter-spacing:0.321px;color:#12238a;">QualitySettingsTittle</div>
<svg style="left:1197px;top:512.5px" width="7" height="9"><path d="M0 0v9L7 4.500z" fill="#6e6e6e"/></svg>
<div class="t " style="left:1208px;top:510px;font-size:12px;letter-spacing:0.287px;color:#12238a;">QualitySettings</div>
<div class="a" style="left:1492px;top:109px;width:15px;height:418px;background:#c2c2c2;border-left:1px solid #a8a8a8"></div>
<svg style="left:1496px;top:114px" width="8" height="6"><path d="M0 6h8L4 0z" fill="#333"/></svg>
<svg style="left:1496px;top:516px" width="8" height="6"><path d="M0 0h8L4 6z" fill="#333"/></svg>
<div class="a" style="left:1493px;top:125px;width:13px;height:386px;background:linear-gradient(90deg,#d8d8d8,#f6f6f6 40%,#ececec);border-radius:7px;border:1px solid #b0b0b0"></div>
<div class="a" style="left:1493px;top:197px;width:13px;height:140px;background:linear-gradient(90deg,#566f96,#8ea3c6 45%,#7389b0);border-radius:7px;border:1px solid #44597c"></div>
<div class="a" style="left:1080px;top:527px;width:430px;height:4px;background:#a2a2a2"></div>
<div class="a" style="left:1080px;top:530px;width:98px;height:18px;background:linear-gradient(#e6e6e6,#d4d4d4);border:1px solid #979797;border-bottom:none;border-radius:3px 3px 0 0;"></div>
<svg width="0" height="0"><defs><linearGradient id="fg" x1="0" y1="0" x2="0" y2="1"><stop offset="0" stop-color="#aeb2b3"/><stop offset="1" stop-color="#6f7577"/></linearGradient></defs></svg>
<svg style="left:1088px;top:534px" width="12" height="10"><path d="M.5 2q0-1 1-1h3l1 1.500h5q1 0 1 1v5q0 1-1 1h-9q-1 0-1-1z" fill="#555" stroke="#333" stroke-width=".8"/></svg>
<div class="t " style="left:1103px;top:531px;font-size:11px;letter-spacing:0.821px;">Project</div>
<svg style="left:1476px;top:535px" width="8" height="10"><path d="M1.800 3.200V2.800a2.200 2.200 0 0 1 4.400 0V4.500" fill="none" stroke="#555" stroke-width="1.200"/><rect x="0" y="4.500" width="8" height="5.500" rx=".5" fill="#3e3e3e"/></svg>
<svg style="left:1491px;top:539px" width="14" height="7"><path d="M0 1h5L2.500 4z" fill="#444"/><path d="M6 .5h8M6 3h8M6 5.500h8" stroke="#444" stroke-width="1"/></svg>
<div class="a" style="left:1080px;top:547px;width:428px;height:18px;background:linear-gradient(#e6e6e6,#c9c9c9);border-bottom:1px solid #7a7a7a;border-top:1px solid #ececec;"></div>
<div class="a" style="left:1085px;top:548px;width:1px;height:15px;background:#9a9a9a"></div>
<div class="a" style="left:1138px;top:548px;width:1px;height:15px;background:#9a9a9a"></div>
<div class="t " style="left:1092px;top:547px;font-size:11px;letter-spacing:-0.172px;">Create</div>
<svg style="left:1129px;top:552px" width="6" height="4"><path d="M0 0h6L3 3.500z" fill="#444"/></svg>
<div class="a" style="left:1148px;top:549px;width:283px;height:13px;background:#dcdcdc;border:1px solid #6f6f6f;border-radius:7px;box-shadow:inset 0 1px 1px #aaa"></div>
<svg style="left:1153px;top:551px" width="12" height="10"><circle cx="3.500" cy="3.500" r="2.800" fill="none" stroke="#666" stroke-width="1.100"/><path d="M5.500 5.500l2.500 3" stroke="#666" stroke-width="1.300"/></svg>
<div class="a" style="left:1435px;top:548px;width:1px;height:15px;background:#9a9a9a"></div>
<div class="a" style="left:1457px;top:548px;width:1px;height:15px;background:#9a9a9a"></div>
<div class="a" style="left:1480px;top:548px;width:1px;height:15px;background:#9a9a9a"></div>
<div class="a" style="left:1502px;top:548px;width:1px;height:15px;background:#9a9a9a"></div>
<svg style="left:1440px;top:550px" width="13" height="12"><circle cx="7" cy="3" r="2.500" fill="#555"/><path d="M1 9l3-5 3 5zM8 7h4v4H8z" fill="#555"/></svg>
<svg style="left:1462px;top:550px" width="13" height="12"><path d="M1 1h5l6 6-4.500 4.500-6.500-6z" fill="#555"/><circle cx="3.500" cy="3.500" r="1" fill="#ddd"/></svg>
<svg style="left:1484px;top:549px" width="13" height="13"><path d="M6.500 1l1.700 3.800 4 .4-3 2.700.9 4-3.600-2.100-3.600 2.100.9-4-3-2.700 4-.4z" fill="#9a9a9a"/></svg>
<div class="a" style="left:1080px;top:565px;width:428px;height:453px;background:#c2c2c2"></div>
<div class="a" style="left:1080px;top:565px;width:171px;height:453px;overflow:hidden">
<svg style="left:34px;top:-1.5px" width="7" height="9"><path d="M0 0v9L7 4.500z" fill="#6e6e6e"/></svg>
<svg style="left:44px;top:-4px" width="16" height="13"><path d="M.5 3.500q0-1 1-1h4l1.500-2h6q1 0 1 1v1" fill="#b5b9ba" stroke="#4a4e50" stroke-width=".9"/><rect x=".5" y="3" width="15" height="9.500" rx="1.200" fill="url(#fg)" stroke="#4a4e50" stroke-width=".9"/><path d="M1.500 4.200h13" stroke="#e6e8e8" stroke-width=".9"/></svg>
<div class="t " style="left:62px;top:-4px;font-size:12px;letter-spacing:0.377px;">Plugins</div>
<svg style="left:34px;top:14.5px" width="7" height="9"><path d="M0 0v9L7 4.500z" fill="#6e6e6e"/></svg>
<svg style="left:44px;top:12px" width="16" height="13"><path d="M.5 3.500q0-1 1-1h4l1.500-2h6q1 0 1 1v1" fill="#b5b9ba" stroke="#4a4e50" stroke-width=".9"/><rect x=".5" y="3" width="15" height="9.500" rx="1.200" fill="url(#fg)" stroke="#4a4e50" stroke-width=".9"/><path d="M1.500 4.200h13" stroke="#e6e8e8" stroke-width=".9"/></svg>
<div class="t " style="left:62px;top:12px;font-size:12px;letter-spacing:0.5px;">UI</div>
<svg style="left:18px;top:31px" width="10" height="9"><path d="M0 .5h10L5.0 9z" fill="#6e6e6e"/></svg>
<svg style="left:30px;top:28px" width="16" height="13"><path d="M.5 3.500q0-1 1-1h4l1.500-2h6q1 0 1 1v1" fill="#b5b9ba" stroke="#4a4e50" stroke-width=".9"/><rect x=".5" y="3" width="15" height="9.500" rx="1.200" fill="url(#fg)" stroke="#4a4e50" stroke-width=".9"/><path d="M1.500 4.200h13" stroke="#e6e8e8" stroke-width=".9"/></svg>
<div class="t " style="left:48px;top:28px;font-size:12px;letter-spacing:0.538px;">[Game Assets]</div>
<svg style="left:44px;top:44px" width="16" height="13"><path d="M.5 3.500q0-1 1-1h4l1.500-2h6q1 0 1 1v1" fill="#b5b9ba" stroke="#4a4e50" stroke-width=".9"/><rect x=".5" y="3" width="15" height="9.500" rx="1.200" fill="url(#fg)" stroke="#4a4e50" stroke-width=".9"/><path d="M1.500 4.200h13" stroke="#e6e8e8" stroke-width=".9"/></svg>
<div class="t " style="left:62px;top:44px;font-size:12px;letter-spacing:0.22px;">Audio Mixers</div>
<svg style="left:44px;top:60px" width="16" height="13"><path d="M.5 3.500q0-1 1-1h4l1.500-2h6q1 0 1 1v1" fill="#b5b9ba" stroke="#4a4e50" stroke-width=".9"/><rect x=".5" y="3" width="15" height="9.500" rx="1.200" fill="url(#fg)" stroke="#4a4e50" stroke-width=".9"/><path d="M1.500 4.200h13" stroke="#e6e8e8" stroke-width=".9"/></svg>
<div class="t " style="left:62px;top:60px;font-size:12px;letter-spacing:0.202px;">Localizations</div>
<svg style="left:44px;top:76px" width="16" height="13"><path d="M.5 3.500q0-1 1-1h4l1.500-2h6q1 0 1 1v1" fill="#b5b9ba" stroke="#4a4e50" stroke-width=".9"/><rect x=".5" y="3" width="15" height="9.500" rx="1.200" fill="url(#fg)" stroke="#4a4e50" stroke-width=".9"/><path d="M1.500 4.200h13" stroke="#e6e8e8" stroke-width=".9"/></svg>
<div class="t " style="left:62px;top:76px;font-size:12px;letter-spacing:0.146px;">Materials</div>
<svg style="left:34px;top:94.5px" width="7" height="9"><path d="M0 0v9L7 4.500z" fill="#6e6e6e"/></svg>
<svg style="left:44px;top:92px" width="16" height="13"><path d="M.5 3.500q0-1 1-1h4l1.500-2h6q1 0 1 1v1" fill="#b5b9ba" stroke="#4a4e50" stroke-width=".9"/><rect x=".5" y="3" width="15" height="9.500" rx="1.200" fill="url(#fg)" stroke="#4a4e50" stroke-width=".9"/><path d="M1.500 4.200h13" stroke="#e6e8e8" stroke-width=".9"/></svg>
<div class="t " style="left:62px;top:92px;font-size:12px;letter-spacing:0.092px;">Plugins</div>
<svg style="left:32px;top:111px" width="10" height="9"><path d="M0 .5h10L5.0 9z" fill="#6e6e6e"/></svg>
<svg style="left:44px;top:108px" width="16" height="13"><path d="M.5 3.500q0-1 1-1h4l1.500-2h6q1 0 1 1v1" fill="#b5b9ba" stroke="#4a4e50" stroke-width=".9"/><rect x=".5" y="3" width="15" height="9.500" rx="1.200" fill="url(#fg)" stroke="#4a4e50" stroke-width=".9"/><path d="M1.500 4.200h13" stroke="#e6e8e8" stroke-width=".9"/></svg>
<div class="t " style="left:62px;top:108px;font-size:12px;letter-spacing:0.094px;">Prefabs</div>
<svg style="left:46px;top:127px" width="10" height="9"><path d="M0 .5h10L5.0 9z" fill="#6e6e6e"/></svg>
<svg style="left:58px;top:124px" width="16" height="13"><path d="M.5 3.500q0-1 1-1h4l1.500-2h6q1 0 1 1v1" fill="#b5b9ba" stroke="#4a4e50" stroke-width=".9"/><rect x=".5" y="3" width="15" height="9.500" rx="1.200" fill="url(#fg)" stroke="#4a4e50" stroke-width=".9"/><path d="M1.500 4.200h13" stroke="#e6e8e8" stroke-width=".9"/></svg>
<div class="t " style="left:76px;top:124px;font-size:12px;letter-spacing:0.478px;">ClimbTrigger</div>
<svg style="left:72px;top:140px" width="16" height="13"><path d="M.5 3.500q0-1 1-1h4l1.500-2h6q1 0 1 1v1" fill="#b5b9ba" stroke="#4a4e50" stroke-width=".9"/><rect x=".5" y="3" width="15" height="9.500" rx="1.200" fill="url(#fg)" stroke="#4a4e50" stroke-width=".9"/><path d="M1.500 4.200h13" stroke="#e6e8e8" stroke-width=".9"/></svg>
<div class="t " style="left:90px;top:140px;font-size:12px;letter-spacing:0.146px;">Materials</div>
<svg style="left:48px;top:158.5px" width="7" height="9"><path d="M0 0v9L7 4.500z" fill="#6e6e6e"/></svg>
<svg style="left:58px;top:156px" width="16" height="13"><path d="M.5 3.500q0-1 1-1h4l1.500-2h6q1 0 1 1v1" fill="#b5b9ba" stroke="#4a4e50" stroke-width=".9"/><rect x=".5" y="3" width="15" height="9.500" rx="1.200" fill="url(#fg)" stroke="#4a4e50" stroke-width=".9"/><path d="M1.500 4.200h13" stroke="#e6e8e8" stroke-width=".9"/></svg>
<div class="t " style="left:76px;top:156px;font-size:12px;letter-spacing:0.373px;">Elevator</div>
<svg style="left:46px;top:175px" width="10" height="9"><path d="M0 .5h10L5.0 9z" fill="#6e6e6e"/></svg>
<svg style="left:58px;top:172px" width="16" height="13"><path d="M.5 3.500q0-1 1-1h4l1.500-2h6q1 0 1 1v1" fill="#b5b9ba" stroke="#4a4e50" stroke-width=".9"/><rect x=".5" y="3" width="15" height="9.500" rx="1.200" fill="url(#fg)" stroke="#4a4e50" stroke-width=".9"/><path d="M1.500 4.200h13" stroke="#e6e8e8" stroke-width=".9"/></svg>
<div class="t " style="left:76px;top:172px;font-size:12px;letter-spacing:0.331px;">Player</div>
<svg style="left:72px;top:188px" width="16" height="13"><path d="M.5 3.500q0-1 1-1h4l1.500-2h6q1 0 1 1v1" fill="#b5b9ba" stroke="#4a4e50" stroke-width=".9"/><rect x=".5" y="3" width="15" height="9.500" rx="1.200" fill="url(#fg)" stroke="#4a4e50" stroke-width=".9"/><path d="M1.500 4.200h13" stroke="#e6e8e8" stroke-width=".9"/></svg>
<div class="t " style="left:90px;top:188px;font-size:12px;letter-spacing:0.498px;">Animator</div>
<svg style="left:72px;top:204px" width="16" height="13"><path d="M.5 3.500q0-1 1-1h4l1.500-2h6q1 0 1 1v1" fill="#b5b9ba" stroke="#4a4e50" stroke-width=".9"/><rect x=".5" y="3" width="15" height="9.500" rx="1.200" fill="url(#fg)" stroke="#4a4e50" stroke-width=".9"/><path d="M1.500 4.200h13" stroke="#e6e8e8" stroke-width=".9"/></svg>
<div class="t " style="left:90px;top:204px;font-size:12px;letter-spacing:0.19px;">Scripts</div>
<svg style="left:58px;top:220px" width="16" height="13"><path d="M.5 3.500q0-1 1-1h4l1.500-2h6q1 0 1 1v1" fill="#b5b9ba" stroke="#4a4e50" stroke-width=".9"/><rect x=".5" y="3" width="15" height="9.500" rx="1.200" fill="url(#fg)" stroke="#4a4e50" stroke-width=".9"/><path d="M1.500 4.200h13" stroke="#e6e8e8" stroke-width=".9"/></svg>
<div class="t " style="left:76px;top:220px;font-size:12px;letter-spacing:0.5px;">UI</div>
<svg style="left:48px;top:238.5px" width="7" height="9"><path d="M0 0v9L7 4.500z" fill="#6e6e6e"/></svg>
<svg style="left:58px;top:236px" width="16" height="13"><path d="M.5 3.500q0-1 1-1h4l1.500-2h6q1 0 1 1v1" fill="#b5b9ba" stroke="#4a4e50" stroke-width=".9"/><rect x=".5" y="3" width="15" height="9.500" rx="1.200" fill="url(#fg)" stroke="#4a4e50" stroke-width=".9"/><path d="M1.500 4.200h13" stroke="#e6e8e8" stroke-width=".9"/></svg>
<div class="t " style="left:76px;top:236px;font-size:12px;letter-spacing:0.443px;">Weapon Item</div>
<svg style="left:32px;top:255px" width="10" height="9"><path d="M0 .5h10L5.0 9z" fill="#6e6e6e"/></svg>
<svg style="left:44px;top:252px" width="16" height="13"><path d="M.5 3.500q0-1 1-1h4l1.500-2h6q1 0 1 1v1" fill="#b5b9ba" stroke="#4a4e50" stroke-width=".9"/><rect x=".5" y="3" width="15" height="9.500" rx="1.200" fill="url(#fg)" stroke="#4a4e50" stroke-width=".9"/><path d="M1.500 4.200h13" stroke="#e6e8e8" stroke-width=".9"/></svg>
<div class="t " style="left:62px;top:252px;font-size:12px;letter-spacing:-0.003px;">Scenes</div>
<svg style="left:48px;top:270.5px" width="7" height="9"><path d="M0 0v9L7 4.500z" fill="#6e6e6e"/></svg>
<svg style="left:58px;top:268px" width="16" height="13"><path d="M.5 3.500q0-1 1-1h4l1.500-2h6q1 0 1 1v1" fill="#b5b9ba" stroke="#4a4e50" stroke-width=".9"/><rect x=".5" y="3" width="15" height="9.500" rx="1.200" fill="url(#fg)" stroke="#4a4e50" stroke-width=".9"/><path d="M1.500 4.200h13" stroke="#e6e8e8" stroke-width=".9"/></svg>
<div class="t " style="left:76px;top:268px;font-size:12px;letter-spacing:0.231px;">Game Level</div>
<svg style="left:58px;top:284px" width="16" height="13"><path d="M.5 3.500q0-1 1-1h4l1.500-2h6q1 0 1 1v1" fill="#b5b9ba" stroke="#4a4e50" stroke-width=".9"/><rect x=".5" y="3" width="15" height="9.500" rx="1.200" fill="url(#fg)" stroke="#4a4e50" stroke-width=".9"/><path d="M1.500 4.200h13" stroke="#e6e8e8" stroke-width=".9"/></svg>
<div class="t " style="left:76px;top:284px;font-size:12px;letter-spacing:0.27px;">GameManager</div>
<svg style="left:58px;top:300px" width="16" height="13"><path d="M.5 3.500q0-1 1-1h4l1.500-2h6q1 0 1 1v1" fill="#b5b9ba" stroke="#4a4e50" stroke-width=".9"/><rect x=".5" y="3" width="15" height="9.500" rx="1.200" fill="url(#fg)" stroke="#4a4e50" stroke-width=".9"/><path d="M1.500 4.200h13" stroke="#e6e8e8" stroke-width=".9"/></svg>
<div class="t " style="left:76px;top:300px;font-size:12px;letter-spacing:0.22px;">TestScene</div>
<svg style="left:32px;top:319px" width="10" height="9"><path d="M0 .5h10L5.0 9z" fill="#6e6e6e"/></svg>
<svg style="left:44px;top:316px" width="16" height="13"><path d="M.5 3.500q0-1 1-1h4l1.500-2h6q1 0 1 1v1" fill="#b5b9ba" stroke="#4a4e50" stroke-width=".9"/><rect x=".5" y="3" width="15" height="9.500" rx="1.200" fill="url(#fg)" stroke="#4a4e50" stroke-width=".9"/><path d="M1.500 4.200h13" stroke="#e6e8e8" stroke-width=".9"/></svg>
<div class="t " style="left:62px;top:316px;font-size:12px;letter-spacing:0.19px;">Scripts</div>
<svg style="left:58px;top:332px" width="16" height="13"><path d="M.5 3.500q0-1 1-1h4l1.500-2h6q1 0 1 1v1" fill="#b5b9ba" stroke="#4a4e50" stroke-width=".9"/><rect x=".5" y="3" width="15" height="9.500" rx="1.200" fill="url(#fg)" stroke="#4a4e50" stroke-width=".9"/><path d="M1.500 4.200h13" stroke="#e6e8e8" stroke-width=".9"/></svg>
<div class="t " style="left:76px;top:332px;font-size:12px;letter-spacing:0.062px;">Audio</div>
<svg style="left:58px;top:348px" width="16" height="13"><path d="M.5 3.500q0-1 1-1h4l1.500-2h6q1 0 1 1v1" fill="#b5b9ba" stroke="#4a4e50" stroke-width=".9"/><rect x=".5" y="3" width="15" height="9.500" rx="1.200" fill="url(#fg)" stroke="#4a4e50" stroke-width=".9"/><path d="M1.500 4.200h13" stroke="#e6e8e8" stroke-width=".9"/></svg>
<div class="t " style="left:76px;top:348px;font-size:12px;letter-spacing:0.246px;">Core</div>
<svg style="left:58px;top:364px" width="16" height="13"><path d="M.5 3.500q0-1 1-1h4l1.500-2h6q1 0 1 1v1" fill="#b5b9ba" stroke="#4a4e50" stroke-width=".9"/><rect x=".5" y="3" width="15" height="9.500" rx="1.200" fill="url(#fg)" stroke="#4a4e50" stroke-width=".9"/><path d="M1.500 4.200h13" stroke="#e6e8e8" stroke-width=".9"/></svg>
<div class="t " style="left:76px;top:364px;font-size:12px;letter-spacing:0.123px;">Graphics</div>
<svg style="left:58px;top:380px" width="16" height="13"><path d="M.5 3.500q0-1 1-1h4l1.500-2h6q1 0 1 1v1" fill="#b5b9ba" stroke="#4a4e50" stroke-width=".9"/><rect x=".5" y="3" width="15" height="9.500" rx="1.200" fill="url(#fg)" stroke="#4a4e50" stroke-width=".9"/><path d="M1.500 4.200h13" stroke="#e6e8e8" stroke-width=".9"/></svg>
<div class="t " style="left:76px;top:380px;font-size:12px;letter-spacing:0.666px;">Input</div>
<svg style="left:58px;top:396px" width="16" height="13"><path d="M.5 3.500q0-1 1-1h4l1.500-2h6q1 0 1 1v1" fill="#b5b9ba" stroke="#4a4e50" stroke-width=".9"/><rect x=".5" y="3" width="15" height="9.500" rx="1.200" fill="url(#fg)" stroke="#4a4e50" stroke-width=".9"/><path d="M1.500 4.200h13" stroke="#e6e8e8" stroke-width=".9"/></svg>
<div class="t " style="left:76px;top:396px;font-size:12px;letter-spacing:0.135px;">Localization</div>
<div class="a" style="left:0px;top:411px;width:171px;height:16px;background:#8f8f8f"></div>
<svg style="left:58px;top:412px" width="16" height="13"><path d="M.5 3.500q0-1 1-1h4l1.500-2h6q1 0 1 1v1" fill="#b5b9ba" stroke="#4a4e50" stroke-width=".9"/><rect x=".5" y="3" width="15" height="9.500" rx="1.200" fill="url(#fg)" stroke="#4a4e50" stroke-width=".9"/><path d="M1.500 4.200h13" stroke="#e6e8e8" stroke-width=".9"/></svg>
<div class="t " style="left:76px;top:412px;font-size:12px;letter-spacing:-0.203px;color:#fff;">Menus</div>
<svg style="left:58px;top:428px" width="16" height="13"><path d="M.5 3.500q0-1 1-1h4l1.500-2h6q1 0 1 1v1" fill="#b5b9ba" stroke="#4a4e50" stroke-width=".9"/><rect x=".5" y="3" width="15" height="9.500" rx="1.200" fill="url(#fg)" stroke="#4a4e50" stroke-width=".9"/><path d="M1.500 4.200h13" stroke="#e6e8e8" stroke-width=".9"/></svg>
<div class="t " style="left:76px;top:428px;font-size:12px;letter-spacing:0.207px;">Settings</div>
<svg style="left:58px;top:444px" width="16" height="13"><path d="M.5 3.500q0-1 1-1h4l1.500-2h6q1 0 1 1v1" fill="#b5b9ba" stroke="#4a4e50" stroke-width=".9"/><rect x=".5" y="3" width="15" height="9.500" rx="1.200" fill="url(#fg)" stroke="#4a4e50" stroke-width=".9"/><path d="M1.500 4.200h13" stroke="#e6e8e8" stroke-width=".9"/></svg>
<div class="t " style="left:76px;top:444px;font-size:12px;letter-spacing:0.5px;">UI</div>
</div>
<div class="a" style="left:1251px;top:565px;width:15px;height:453px;background:#c2c2c2;border-left:1px solid #a8a8a8"></div>
<svg style="left:1255px;top:570px" width="8" height="6"><path d="M0 6h8L4 0z" fill="#333"/></svg>
<svg style="left:1255px;top:1007px" width="8" height="6"><path d="M0 0h8L4 6z" fill="#333"/></svg>
<div class="a" style="left:1252px;top:581px;width:13px;height:421px;background:linear-gradient(90deg,#d8d8d8,#f6f6f6 40%,#ececec);border-radius:7px;border:1px solid #b0b0b0"></div>
<div class="a" style="left:1252px;top:770px;width:13px;height:148px;background:linear-gradient(90deg,#566f96,#8ea3c6 45%,#7389b0);border-radius:7px;border:1px solid #44597c"></div>
<div class="a" style="left:1267px;top:565px;width:240px;height:18px;background:linear-gradient(#dcdcdc,#cfcfcf);border-bottom:1px solid #a5a5a5;overflow:hidden"></div>
<div class="t " style="left:1272px;top:566px;font-size:12px;letter-spacing:0.0px;">Assets</div>
<svg style="left:1315px;top:571px" width="6" height="7"><path d="M0 .5v6l5-3z" fill="#8f8f8f"/></svg>
<div class="t " style="left:1327px;top:566px;font-size:12px;letter-spacing:0.538px;">[Game Assets]</div>
<svg style="left:1418px;top:571px" width="6" height="7"><path d="M0 .5v6l5-3z" fill="#8f8f8f"/></svg>
<div class="t " style="left:1430px;top:566px;font-size:12px;letter-spacing:0.19px;">Scripts</div>
<svg style="left:1475px;top:571px" width="6" height="7"><path d="M0 .5v6l5-3z" fill="#8f8f8f"/></svg>
<div class="a" style="left:1486px;top:566px;width:20px;height:16px;overflow:hidden"><div class="t b" style="left:1px;top:0;letter-spacing:.3px">Menus</div></div>
<svg style="left:1283px;top:585px" width="13" height="14"><path d="M.5 .5h8.500l3.500 3.500v9.500h-12z" fill="#f6f6f6" stroke="#8a8a8a" stroke-width=".9"/><path d="M9 .5v3.500h3.500" fill="#ddd" stroke="#8a8a8a" stroke-width=".7"/><text x="1.200" y="11" style="font-family:Liberation Sans;font-weight:bold;font-size:8px" fill="#1c7ab8">C#</text></svg>
<div class="t " style="left:1300px;top:584px;font-size:12px;letter-spacing:0.349px;">GameMenuController</div>
<svg style="left:1283px;top:601px" width="13" height="14"><path d="M.5 .5h8.500l3.500 3.500v9.500h-12z" fill="#f6f6f6" stroke="#8a8a8a" stroke-width=".9"/><path d="M9 .5v3.500h3.500" fill="#ddd" stroke="#8a8a8a" stroke-width=".7"/><text x="1.200" y="11" style="font-family:Liberation Sans;font-weight:bold;font-size:8px" fill="#1c7ab8">C#</text></svg>
<div class="t " style="left:1300px;top:600px;font-size:12px;letter-spacing:0.33px;">MenuAudioSettingsController</div>
<svg style="left:1283px;top:617px" width="13" height="14"><path d="M.5 .5h8.500l3.500 3.500v9.500h-12z" fill="#f6f6f6" stroke="#8a8a8a" stroke-width=".9"/><path d="M9 .5v3.500h3.500" fill="#ddd" stroke="#8a8a8a" stroke-width=".7"/><text x="1.200" y="11" style="font-family:Liberation Sans;font-weight:bold;font-size:8px" fill="#1c7ab8">C#</text></svg>
<div class="t " style="left:1300px;top:616px;font-size:12px;letter-spacing:0.344px;">MenuGameSettingsController</div>
<svg style="left:1283px;top:633px" width="13" height="14"><path d="M.5 .5h8.500l3.500 3.500v9.500h-12z" fill="#f6f6f6" stroke="#8a8a8a" stroke-width=".9"/><path d="M9 .5v3.500h3.500" fill="#ddd" stroke="#8a8a8a" stroke-width=".7"/><text x="1.200" y="11" style="font-family:Liberation Sans;font-weight:bold;font-size:8px" fill="#1c7ab8">C#</text></svg>
<div class="t " style="left:1300px;top:632px;font-size:12px;letter-spacing:0.331px;">MenuGraphicSettingsController</div>
<div class="a" style="left:1267px;top:1001px;width:240px;height:17px;background:#dedede;border-top:1px solid #a8a8a8"></div>
<div class="a" style="left:1444px;top:1008px;width:48px;height:3px;background:#8a8a8a;border-radius:2px"></div>
<div class="a" style="left:1435px;top:1004px;width:10px;height:10px;background:radial-gradient(circle at 50% 35%,#fff,#cfcfcf);border:1px solid #666;border-radius:6px"></div>
<div class="a" style="left:1507px;top:75px;width:4px;height:945px;background:#a2a2a2"></div>
<div class="a" style="left:1511px;top:75px;width:98px;height:18px;background:linear-gradient(#e6e6e6,#d4d4d4);border:1px solid #979797;border-bottom:none;border-radius:3px 3px 0 0;"></div>
<svg style="left:1519px;top:78px" width="10" height="10"><circle cx="5" cy="5" r="5" fill="#2b2b2b"/><rect x="4.200" y="4" width="1.600" height="4" fill="#eee"/><rect x="4.200" y="1.800" width="1.600" height="1.500" fill="#eee"/></svg>
<div class="t " style="left:1534px;top:76px;font-size:11px;letter-spacing:0.969px;">Inspector</div>
<svg style="left:1619px;top:78px" width="11" height="11"><path d="M0 2.500h11M0 8.500h11M3 5.500h8" stroke="#444" stroke-width="1.100"/><path d="M5.500 0v4M2 6v4M8 7v4" stroke="#444" stroke-width="1.200"/></svg>
<div class="t " style="left:1634px;top:76px;font-size:11px;letter-spacing:0.555px;color:#2b2b2b;">Lighting</div>
<svg style="left:1719px;top:78px" width="11" height="11"><path d="M0 0h4L0 4zM11 0v4L7 0zM0 11V7l4 4zM11 11H7l4-4z" fill="#222"/><path d="M1 1l9 9M10 1l-9 9" stroke="#222" stroke-width="1.300"/></svg>
<div class="t " style="left:1734px;top:76px;font-size:11px;letter-spacing:0.7px;color:#2b2b2b;">Navigation</div>
<svg style="left:1887px;top:80px" width="8" height="10"><path d="M1.800 3.200V2.800a2.200 2.200 0 0 1 4.400 0V4.500" fill="none" stroke="#555" stroke-width="1.200"/><rect x="0" y="4.500" width="8" height="5.500" rx=".5" fill="#3e3e3e"/></svg>
<svg style="left:1902px;top:84px" width="14" height="7"><path d="M0 1h5L2.500 4z" fill="#444"/><path d="M6 .5h8M6 3h8M6 5.500h8" stroke="#444" stroke-width="1"/></svg>
<div class="a" style="left:1511px;top:92px;width:395px;height:68px;background:#d9d9d9;border-top:1px solid #e8e8e8;border-bottom:1px solid #8e8e8e"></div>
<div class="a" style="left:1511px;top:160px;width:395px;height:465px;background:#c2c2c2"></div>
<svg style="left:1517px;top:99px" width="23" height="23"><defs><linearGradient id="cg" x1="0" y1="0" x2="1" y2="1"><stop offset="0" stop-color="#fafafa"/><stop offset="1" stop-color="#b5b5b5"/></linearGradient></defs><path d="M11.500 1l9.500 3.500v12L11.500 22 2 16.500v-12z" fill="url(#cg)"/><path d="M2 4.500l9.500 4 9.500-4M11.500 8.500V22" stroke="#fff" stroke-width=".8" fill="none" opacity=".8"/><path d="M1 17.500h8L5 21.500z" fill="#333"/></svg>
<div class="a" style="left:1554px;top:101px;width:12px;height:12px;background:linear-gradient(#f4f4f4,#d8d8d8);border:1px solid #777;border-radius:2px"></div>
<div class="a" style="left:1572px;top:99px;width:259px;height:16px;background:#dadada;border:1px solid #9a9a9a;border-top-color:#6e6e6e;border-left-color:#8a8a8a;"></div>
<div class="t " style="left:1576px;top:99px;font-size:12px;letter-spacing:0.289px;">Template</div>
<div class="a" style="left:1836px;top:101px;width:12px;height:12px;background:linear-gradient(#f4f4f4,#d8d8d8);border:1px solid #777;border-radius:2px"></div>
<div class="t " style="left:1852px;top:99px;font-size:12px;letter-spacing:0.333px;">Static</div>
<svg style="left:1890px;top:103px" width="9" height="6"><path d="M0 0h9L4.500 6z" fill="#222"/></svg>
<div class="t " style="left:1546px;top:119px;font-size:12px;letter-spacing:0.219px;">Tag</div>
<div class="a" style="left:1572px;top:119px;width:148px;height:14px;background:linear-gradient(#f6f6f6,#dcdcdc);border:1px solid #7a7a7a;border-radius:3px"></div>
<div class="t " style="left:1578px;top:118px;font-size:11px;letter-spacing:-0.094px;">Untagged</div>
<svg style="left:1711px;top:122px" width="5" height="8"><path d="M0 3h5L2.500 0zM0 5h5L2.500 8z" fill="#444"/></svg>
<div class="t " style="left:1726px;top:119px;font-size:12px;letter-spacing:0.197px;">Layer</div>
<div class="a" style="left:1765px;top:119px;width:135px;height:14px;background:linear-gradient(#f6f6f6,#dcdcdc);border:1px solid #7a7a7a;border-radius:3px"></div>
<div class="t " style="left:1771px;top:118px;font-size:11px;letter-spacing:0.0px;">UI</div>
<svg style="left:1891px;top:122px" width="5" height="8"><path d="M0 3h5L2.500 0zM0 5h5L2.500 8z" fill="#444"/></svg>
<div class="t " style="left:1529px;top:138px;font-size:12px;letter-spacing:0.109px;">Prefab</div>
<div class="a" style="left:1572px;top:138px;width:328px;height:15px;background:linear-gradient(#f4f4f4,#d9d9d9);border:1px solid #7a7a7a;border-radius:3px"></div>
<div class="a" style="left:1682px;top:139px;width:1px;height:13px;background:#888"></div>
<div class="a" style="left:1792px;top:139px;width:1px;height:13px;background:#888"></div>
<div class="t " style="left:1611px;top:137px;font-size:11px;letter-spacing:0.234px;">Select</div>
<div class="t " style="left:1720px;top:137px;font-size:11px;letter-spacing:0.099px;">Revert</div>
<div class="t " style="left:1830px;top:137px;font-size:11px;letter-spacing:0.294px;">Apply</div>
<svg style="left:1515px;top:168px" width="8" height="7"><path d="M0 .5h8L4.0 7z" fill="#666"/></svg>
<svg style="left:1526px;top:163px" width="16" height="16"><g fill="#e8e8e8" stroke="#777" stroke-width=".8"><path d="M3 1l3.500 1.500L4 6 1 4z"/><path d="M13 1L9.500 2.500 12 6l3-2z"/><path d="M3 15l3.500-1.500L4 10l-3 2z"/><path d="M13 15l-3.500-1.500L12 10l3 2z"/></g></svg>
<div class="t " style="left:1560px;top:163px;font-size:12px;letter-spacing:0.783px;font-weight:bold;">Rect Transform</div>
<svg style="left:1872px;top:163px" width="32" height="15"><path d="M1 2.500l2-1.500h9.500v11.500H3l-2 1.500z" fill="#5f7fb5" stroke="#2c3c5c" stroke-width=".9"/><path d="M3 1v11.500" stroke="#2c3c5c" stroke-width=".7"/><text x="5" y="10.500" style="font-family:Liberation Sans;font-weight:bold;font-size:9px" fill="#fff">?</text><g transform="translate(24.500,6.500)"><path d="M0-5.800v11.600M-5.800 0h11.600M-4.100-4.100l8.200 8.200M4.100-4.100l-8.200 8.200" stroke="#2e2e2e" stroke-width="1.900"/><circle r="3.200" fill="#c2c2c2" stroke="#2e2e2e" stroke-width="2"/></g><path d="M29 9h4l-2 3z" fill="#333"/></svg>
<div class="t " style="left:1533px;top:179px;font-size:11px;letter-spacing:0.424px;">stretch</div>
<div class="t" style="left:1500px;top:210px;width:36px;transform:rotate(-90deg);font-size:11px;letter-spacing:.2px;text-align:center">bottom</div>
<div class="a" style="left:1526px;top:194px;width:50px;height:49px;background:#d4d4d4;border:1px solid #8a8a8a"></div>
<svg style="left:1526px;top:194px" width="50" height="49"><path d="M7.500 41.500v-34h34v34" fill="none" stroke="#8a8a8a"/><path d="M7.500 41.500h34" stroke="#d03030" stroke-width="1.200"/><rect x="6" y="40" width="3" height="3" fill="#c87820"/><rect x="40" y="40" width="3" height="3" fill="#c87820"/><rect x="16.500" y="16.500" width="17" height="16" fill="none" stroke="#333" stroke-width="1.200"/><path d="M18 24.500h14M18 24.500l3-2.500v5zM32 24.500l-3-2.500v5z" stroke="#2a7be0" stroke-width="1" fill="#2a7be0"/></svg>
<div class="t " style="left:1663px;top:179px;font-size:12px;letter-spacing:0.25px;">Left</div>
<div class="t " style="left:1744px;top:179px;font-size:12px;letter-spacing:-0.156px;">Pos Y</div>
<div class="t " style="left:1824px;top:179px;font-size:12px;letter-spacing:-0.066px;">Pos Z</div>
<div class="a" style="left:1661px;top:195px;width:79px;height:15px;background:#dadada;border:1px solid #9a9a9a;border-top-color:#6e6e6e;border-left-color:#8a8a8a;"></div>
<div class="t " style="left:1665px;top:195px;letter-spacing:.4px">0</div>
<div class="a" style="left:1742px;top:195px;width:78px;height:15px;background:#dadada;border:1px solid #9a9a9a;border-top-color:#6e6e6e;border-left-color:#8a8a8a;"></div>
<div class="t " style="left:1746px;top:195px;letter-spacing:.4px">2</div>
<div class="a" style="left:1822px;top:195px;width:79px;height:15px;background:#dadada;border:1px solid #9a9a9a;border-top-color:#6e6e6e;border-left-color:#8a8a8a;"></div>
<div class="t " style="left:1826px;top:195px;letter-spacing:.4px">0</div>
<div class="t " style="left:1663px;top:211px;font-size:12px;letter-spacing:0.197px;">Right</div>
<div class="t " style="left:1744px;top:211px;font-size:12px;letter-spacing:0.219px;">Height</div>
<div class="a" style="left:1661px;top:227px;width:79px;height:15px;background:#dadada;border:1px solid #9a9a9a;border-top-color:#6e6e6e;border-left-color:#8a8a8a;"></div>
<div class="t " style="left:1665px;top:227px;letter-spacing:.4px">0</div>
<div class="a" style="left:1742px;top:227px;width:78px;height:15px;background:#dadada;border:1px solid #9a9a9a;border-top-color:#6e6e6e;border-left-color:#8a8a8a;"></div>
<div class="t " style="left:1746px;top:227px;letter-spacing:.4px">150</div>
<div class="a" style="left:1849px;top:225px;width:52px;height:18px;background:linear-gradient(#f4f4f4,#d9d9d9);border:1px solid #6e6e6e;border-radius:3px"></div>
<div class="a" style="left:1875px;top:226px;width:1px;height:16px;background:#888"></div>
<svg style="left:1856px;top:229px" width="12" height="10"><rect x=".5" y=".5" width="10" height="8" fill="none" stroke="#222" stroke-dasharray="2 1.500"/></svg>
<div class="t " style="left:1884px;top:226px;font-size:12px;letter-spacing:-0.672px;">R</div>
<svg style="left:1515px;top:250px" width="8" height="7"><path d="M0 .5h8L4.0 7z" fill="#666"/></svg>
<div class="t " style="left:1526px;top:245px;font-size:12px;letter-spacing:0.141px;">Anchors</div>
<div class="t " style="left:1541px;top:261px;font-size:12px;letter-spacing:0.552px;">Min</div>
<div class="t " style="left:1663px;top:261px;font-size:12px;letter-spacing:-1.0px;">X</div>
<div class="a" style="left:1674px;top:261px;width:66px;height:15px;background:#dadada;border:1px solid #9a9a9a;border-top-color:#6e6e6e;border-left-color:#8a8a8a;"></div>
<div class="t " style="left:1678px;top:261px;letter-spacing:.4px">0</div>
<div class="t " style="left:1745px;top:261px;font-size:12px;letter-spacing:-1.0px;">Y</div>
<div class="a" style="left:1755px;top:261px;width:65px;height:15px;background:#dadada;border:1px solid #9a9a9a;border-top-color:#6e6e6e;border-left-color:#8a8a8a;"></div>
<div class="t " style="left:1759px;top:261px;letter-spacing:.4px">0</div>
<div class="t " style="left:1541px;top:277px;font-size:12px;letter-spacing:-0.224px;">Max</div>
<div class="t " style="left:1663px;top:277px;font-size:12px;letter-spacing:-1.0px;">X</div>
<div class="a" style="left:1674px;top:277px;width:66px;height:15px;background:#dadada;border:1px solid #9a9a9a;border-top-color:#6e6e6e;border-left-color:#8a8a8a;"></div>
<div class="t " style="left:1678px;top:277px;letter-spacing:.4px">1</div>
<div class="t " style="left:1745px;top:277px;font-size:12px;letter-spacing:-1.0px;">Y</div>
<div class="a" style="left:1755px;top:277px;width:65px;height:15px;background:#dadada;border:1px solid #9a9a9a;border-top-color:#6e6e6e;border-left-color:#8a8a8a;"></div>
<div class="t " style="left:1759px;top:277px;letter-spacing:.4px">0</div>
<div class="t " style="left:1526px;top:295px;font-size:12px;letter-spacing:0.266px;">Pivot</div>
<div class="t " style="left:1663px;top:295px;font-size:12px;letter-spacing:-1.0px;">X</div>
<div class="a" style="left:1674px;top:295px;width:66px;height:15px;background:#dadada;border:1px solid #9a9a9a;border-top-color:#6e6e6e;border-left-color:#8a8a8a;"></div>
<div class="t " style="left:1678px;top:295px;letter-spacing:.4px">0,5</div>
<div class="t " style="left:1745px;top:295px;font-size:12px;letter-spacing:-1.0px;">Y</div>
<div class="a" style="left:1755px;top:295px;width:65px;height:15px;background:#dadada;border:1px solid #9a9a9a;border-top-color:#6e6e6e;border-left-color:#8a8a8a;"></div>
<div class="t " style="left:1759px;top:295px;letter-spacing:.4px">1</div>
<div class="t " style="left:1526px;top:321px;font-size:12px;letter-spacing:0.289px;">Rotation</div>
<div class="t " style="left:1663px;top:321px;font-size:12px;letter-spacing:-1.0px;">X</div>
<div class="a" style="left:1674px;top:321px;width:66px;height:15px;background:#dadada;border:1px solid #9a9a9a;border-top-color:#6e6e6e;border-left-color:#8a8a8a;"></div>
<div class="t " style="left:1678px;top:321px;letter-spacing:.4px">0</div>
<div class="t " style="left:1745px;top:321px;font-size:12px;letter-spacing:-1.0px;">Y</div>
<div class="a" style="left:1755px;top:321px;width:65px;height:15px;background:#dadada;border:1px solid #9a9a9a;border-top-color:#6e6e6e;border-left-color:#8a8a8a;"></div>
<div class="t " style="left:1759px;top:321px;letter-spacing:.4px">0</div>
<div class="t " style="left:1825px;top:321px;font-size:12px;letter-spacing:-0.328px;">Z</div>
<div class="a" style="left:1835px;top:321px;width:66px;height:15px;background:#dadada;border:1px solid #9a9a9a;border-top-color:#6e6e6e;border-left-color:#8a8a8a;"></div>
<div class="t " style="left:1839px;top:321px;letter-spacing:.4px">0</div>
<div class="t " style="left:1526px;top:339px;font-size:12px;letter-spacing:-0.003px;">Scale</div>
<div class="t " style="left:1663px;top:339px;font-size:12px;letter-spacing:-1.0px;">X</div>
<div class="a" style="left:1674px;top:339px;width:66px;height:15px;background:#dadada;border:1px solid #9a9a9a;border-top-color:#6e6e6e;border-left-color:#8a8a8a;"></div>
<div class="t " style="left:1678px;top:339px;letter-spacing:.4px">1</div>
<div class="t " style="left:1745px;top:339px;font-size:12px;letter-spacing:-1.0px;">Y</div>
<div class="a" style="left:1755px;top:339px;width:65px;height:15px;background:#dadada;border:1px solid #9a9a9a;border-top-color:#6e6e6e;border-left-color:#8a8a8a;"></div>
<div class="t " style="left:1759px;top:339px;letter-spacing:.4px">1</div>
<div class="t " style="left:1825px;top:339px;font-size:12px;letter-spacing:-0.328px;">Z</div>
<div class="a" style="left:1835px;top:339px;width:66px;height:15px;background:#dadada;border:1px solid #9a9a9a;border-top-color:#6e6e6e;border-left-color:#8a8a8a;"></div>
<div class="t " style="left:1839px;top:339px;letter-spacing:.4px">1</div>
<div class="a" style="left:1511px;top:359px;width:395px;height:1px;background:#8c8c8c"></div>
<div class="a" style="left:1511px;top:360px;width:395px;height:1px;background:#d2d2d2"></div>
<svg style="left:1526px;top:362px" width="16" height="16"><circle cx="8" cy="8" r="7" fill="#e4e4e4" stroke="#999"/><circle cx="8" cy="8" r="4.200" fill="none" stroke="#999"/><circle cx="8" cy="8" r="1.800" fill="#999"/></svg>
<div class="t " style="left:1560px;top:362px;font-size:12px;letter-spacing:0.82px;font-weight:bold;">Canvas Renderer</div>
<svg style="left:1872px;top:362px" width="32" height="15"><path d="M1 2.500l2-1.500h9.500v11.500H3l-2 1.500z" fill="#5f7fb5" stroke="#2c3c5c" stroke-width=".9"/><path d="M3 1v11.500" stroke="#2c3c5c" stroke-width=".7"/><text x="5" y="10.500" style="font-family:Liberation Sans;font-weight:bold;font-size:9px" fill="#fff">?</text><g transform="translate(24.500,6.500)"><path d="M0-5.800v11.600M-5.800 0h11.600M-4.100-4.100l8.200 8.200M4.100-4.100l-8.200 8.200" stroke="#2e2e2e" stroke-width="1.900"/><circle r="3.200" fill="#c2c2c2" stroke="#2e2e2e" stroke-width="2"/></g><path d="M29 9h4l-2 3z" fill="#333"/></svg>
<div class="a" style="left:1511px;top:378px;width:395px;height:1px;background:#8c8c8c"></div>
<div class="a" style="left:1511px;top:379px;width:395px;height:1px;background:#d2d2d2"></div>
<svg style="left:1515px;top:386px" width="8" height="7"><path d="M0 .5h8L4.0 7z" fill="#666"/></svg>
<svg style="left:1526px;top:381px" width="15" height="15"><rect x=".5" y=".5" width="14" height="14" fill="#eee" stroke="#e89a20" stroke-width="1.200"/><rect x="1" y="1" width="6.500" height="6.500" fill="#444"/><rect x="7.500" y="7.500" width="6.500" height="6.500" fill="#444"/><circle cx="7.500" cy="7.500" r="2.500" fill="none" stroke="#f0a020" stroke-width="1.200"/></svg>
<div class="a" style="left:1546px;top:383px;width:12px;height:12px;background:linear-gradient(#a9c4ee,#7d9fd6);border:1px solid #4f5f7a;border-radius:2px"></div>
<svg style="left:1547px;top:382px" width="12" height="12"><path d="M1.500 6l3.200 4L10.500 1" stroke="#111" stroke-width="2.100" fill="none"/></svg>
<div class="t " style="left:1560px;top:381px;font-size:12px;letter-spacing:1.143px;font-weight:bold;">Image (Script)</div>
<svg style="left:1872px;top:381px" width="32" height="15"><path d="M1 2.500l2-1.500h9.500v11.500H3l-2 1.500z" fill="#5f7fb5" stroke="#2c3c5c" stroke-width=".9"/><path d="M3 1v11.500" stroke="#2c3c5c" stroke-width=".7"/><text x="5" y="10.500" style="font-family:Liberation Sans;font-weight:bold;font-size:9px" fill="#fff">?</text><g transform="translate(24.500,6.500)"><path d="M0-5.800v11.600M-5.800 0h11.600M-4.100-4.100l8.200 8.200M4.100-4.100l-8.200 8.200" stroke="#2e2e2e" stroke-width="1.900"/><circle r="3.200" fill="#c2c2c2" stroke="#2e2e2e" stroke-width="2"/></g><path d="M29 9h4l-2 3z" fill="#333"/></svg>
<div class="t " style="left:1526px;top:397px;font-size:12px;letter-spacing:0.443px;">Source Image</div>
<div class="a" style="left:1662px;top:397px;width:221px;height:15px;background:#dadada;border:1px solid #9a9a9a;border-top-color:#6e6e6e;border-left-color:#8a8a8a;"></div>
<svg style="left:1665px;top:399px" width="12" height="11"><rect x="1.500" y="1.500" width="9" height="8" fill="#a8bccc" stroke="#6f8596"/><g fill="#7d93a5"><rect x="0" y="0" width="3" height="3"/><rect x="9" y="0" width="3" height="3"/><rect x="0" y="8" width="3" height="3"/><rect x="9" y="8" width="3" height="3"/></g><circle cx="6" cy="5.500" r="1.500" fill="none" stroke="#fff"/></svg>
<div class="t " style="left:1678px;top:397px;font-size:12px;letter-spacing:0.332px;">UISprite</div>
<svg style="left:1890px;top:400px" width="9" height="9"><circle cx="4.500" cy="4.500" r="3.500" fill="none" stroke="#333" stroke-width="1"/><circle cx="4.500" cy="4.500" r="1" fill="#333"/></svg>
<div class="t " style="left:1526px;top:415px;font-size:12px;letter-spacing:0.263px;">Color</div>
<div class="a" style="left:1662px;top:415px;width:221px;height:16px;background:#fff;border:1px solid #444;border-bottom:2px solid #222"></div>
<svg style="left:1886px;top:415px" width="15" height="15"><path d="M1 14l1-3 7-7 2 2-7 7z" fill="#eee" stroke="#222" stroke-width=".9"/><path d="M8.500 3.500l3 3M10 2a1.800 1.800 0 0 1 3 3l-2 2-3-3z" fill="#222" stroke="#222"/></svg>
<div class="t " style="left:1526px;top:433px;font-size:12px;letter-spacing:0.164px;">Material</div>
<div class="a" style="left:1662px;top:433px;width:221px;height:15px;background:#dadada;border:1px solid #9a9a9a;border-top-color:#6e6e6e;border-left-color:#8a8a8a;"></div>
<div class="t " style="left:1665px;top:433px;font-size:12px;letter-spacing:0.286px;">None (Material)</div>
<svg style="left:1890px;top:436px" width="9" height="9"><circle cx="4.500" cy="4.500" r="3.500" fill="none" stroke="#333" stroke-width="1"/><circle cx="4.500" cy="4.500" r="1" fill="#333"/></svg>
<div class="t " style="left:1526px;top:451px;font-size:12px;letter-spacing:0.443px;">Raycast Target</div>
<div class="a" style="left:1663px;top:453px;width:12px;height:12px;background:linear-gradient(#a9c4ee,#7d9fd6);border:1px solid #4f5f7a;border-radius:2px"></div>
<svg style="left:1664px;top:452px" width="12" height="12"><path d="M1.500 6l3.200 4L10.500 1" stroke="#111" stroke-width="2.100" fill="none"/></svg>
<div class="t " style="left:1526px;top:469px;font-size:12px;letter-spacing:0.553px;">Image Type</div>
<div class="a" style="left:1662px;top:469px;width:239px;height:14px;background:linear-gradient(#f6f6f6,#dcdcdc);border:1px solid #7a7a7a;border-radius:3px"></div>
<div class="t " style="left:1668px;top:468px;font-size:11px;letter-spacing:0.005px;">Sliced</div>
<svg style="left:1892px;top:472px" width="5" height="8"><path d="M0 3h5L2.500 0zM0 5h5L2.500 8z" fill="#444"/></svg>
<div class="t " style="left:1541px;top:487px;font-size:12px;letter-spacing:0.301px;">Fill Center</div>
<div class="a" style="left:1663px;top:489px;width:12px;height:12px;background:linear-gradient(#a9c4ee,#7d9fd6);border:1px solid #4f5f7a;border-radius:2px"></div>
<svg style="left:1664px;top:488px" width="12" height="12"><path d="M1.500 6l3.200 4L10.500 1" stroke="#111" stroke-width="2.100" fill="none"/></svg>
<div class="a" style="left:1511px;top:507px;width:395px;height:1px;background:#8c8c8c"></div>
<div class="a" style="left:1511px;top:508px;width:395px;height:1px;background:#d2d2d2"></div>
<svg style="left:1515px;top:514px" width="8" height="7"><path d="M0 .5h8L4.0 7z" fill="#666"/></svg>
<svg style="left:1526px;top:510px" width="15" height="15"><rect x=".5" y=".5" width="11" height="11" fill="#eee" stroke="#e89a20" stroke-width="1.200"/><rect x="1" y="10" width="9" height="4" fill="#555"/><rect x="12.500" y="1" width="2" height="9" fill="#e89a20"/><rect x="12.500" y="11.500" width="2" height="2.500" fill="#e89a20"/></svg>
<div class="a" style="left:1546px;top:512px;width:12px;height:12px;background:linear-gradient(#a9c4ee,#7d9fd6);border:1px solid #4f5f7a;border-radius:2px"></div>
<svg style="left:1547px;top:511px" width="12" height="12"><path d="M1.500 6l3.200 4L10.500 1" stroke="#111" stroke-width="2.100" fill="none"/></svg>
<div class="t " style="left:1560px;top:509px;font-size:12px;letter-spacing:0.7px;font-weight:bold;">Scroll Rect (Script)</div>
<svg style="left:1872px;top:510px" width="32" height="15"><path d="M1 2.500l2-1.500h9.500v11.500H3l-2 1.500z" fill="#5f7fb5" stroke="#2c3c5c" stroke-width=".9"/><path d="M3 1v11.500" stroke="#2c3c5c" stroke-width=".7"/><text x="5" y="10.500" style="font-family:Liberation Sans;font-weight:bold;font-size:9px" fill="#fff">?</text><g transform="translate(24.500,6.500)"><path d="M0-5.800v11.600M-5.800 0h11.600M-4.100-4.100l8.200 8.200M4.100-4.100l-8.200 8.200" stroke="#2e2e2e" stroke-width="1.900"/><circle r="3.200" fill="#c2c2c2" stroke="#2e2e2e" stroke-width="2"/></g><path d="M29 9h4l-2 3z" fill="#333"/></svg>
<div class="t " style="left:1526px;top:526px;font-size:12px;letter-spacing:0.283px;">Content</div>
<div class="a" style="left:1662px;top:526px;width:221px;height:15px;background:#dadada;border:1px solid #9a9a9a;border-top-color:#6e6e6e;border-left-color:#8a8a8a;"></div>
<svg style="left:1665px;top:528px" width="12" height="11"><g fill="#eee" stroke="#999" stroke-width=".7"><path d="M2 .5l3 1-2 3-2.500-1.500z"/><path d="M10 .5l-3 1 2 3 2.500-1.500z"/><path d="M2 10.500l3-1-2-3L.5 8z"/><path d="M10 10.500l-3-1 2-3L11.500 8z"/></g></svg>
<div class="t " style="left:1678px;top:526px;font-size:12px;letter-spacing:0.443px;">Content (Rect Transform)</div>
<svg style="left:1890px;top:529px" width="9" height="9"><circle cx="4.500" cy="4.500" r="3.500" fill="none" stroke="#333" stroke-width="1"/><circle cx="4.500" cy="4.500" r="1" fill="#333"/></svg>
<div class="t " style="left:1526px;top:544px;font-size:12px;letter-spacing:0.197px;">Horizontal</div>
<div class="a" style="left:1663px;top:546px;width:12px;height:12px;background:linear-gradient(#f4f4f4,#d4d4d4);border:1px solid #6e6e6e;border-radius:2px"></div>
<div class="t " style="left:1526px;top:562px;font-size:12px;letter-spacing:0.33px;">Vertical</div>
<div class="a" style="left:1663px;top:564px;width:12px;height:12px;background:linear-gradient(#a9c4ee,#7d9fd6);border:1px solid #4f5f7a;border-radius:2px"></div>
<svg style="left:1664px;top:563px" width="12" height="12"><path d="M1.500 6l3.200 4L10.500 1" stroke="#111" stroke-width="2.100" fill="none"/></svg>
<div class="t " style="left:1526px;top:580px;font-size:12px;letter-spacing:0.374px;">Movement Type</div>
<div class="a" style="left:1662px;top:580px;width:239px;height:14px;background:linear-gradient(#f6f6f6,#dcdcdc);border:1px solid #7a7a7a;border-radius:3px"></div>
<div class="t " style="left:1668px;top:579px;font-size:11px;letter-spacing:-0.147px;">Clamped</div>
<svg style="left:1892px;top:583px" width="5" height="8"><path d="M0 3h5L2.500 0zM0 5h5L2.500 8z" fill="#444"/></svg>
<div class="t " style="left:1526px;top:598px;font-size:12px;letter-spacing:0.522px;">Inertia</div>
<div class="a" style="left:1663px;top:600px;width:12px;height:12px;background:linear-gradient(#a9c4ee,#7d9fd6);border:1px solid #4f5f7a;border-radius:2px"></div>
<svg style="left:1664px;top:599px" width="12" height="12"><path d="M1.500 6l3.200 4L10.500 1" stroke="#111" stroke-width="2.100" fill="none"/></svg>
<div class="a" style="left:1511px;top:615px;width:395px;height:10px;overflow:hidden">
<div class="t " style="left:30px;top:1px;font-size:12px;letter-spacing:0.291px;">Deceleration Rate</div>
<div class="a" style="left:151px;top:2px;width:239px;height:15px;background:#dadada;border:1px solid #9a9a9a;border-top-color:#6e6e6e;border-left-color:#8a8a8a;"></div>
<div class="t " style="left:155px;top:2px;letter-spacing:.4px">0.135</div>
</div>
<div class="a" style="left:1906px;top:92px;width:14px;height:533px;background:#c2c2c2;border-left:1px solid #a8a8a8"></div>
<svg style="left:1910px;top:97px" width="8" height="6"><path d="M0 6h8L4 0z" fill="#333"/></svg>
<svg style="left:1910px;top:614px" width="8" height="6"><path d="M0 0h8L4 6z" fill="#333"/></svg>
<div class="a" style="left:1907px;top:108px;width:12px;height:501px;background:linear-gradient(90deg,#d8d8d8,#f6f6f6 40%,#ececec);border-radius:7px;border:1px solid #b0b0b0"></div>
<div class="a" style="left:1907px;top:109px;width:12px;height:337px;background:linear-gradient(90deg,#566f96,#8ea3c6 45%,#7389b0);border-radius:7px;border:1px solid #44597c"></div>
<div class="a" style="left:1511px;top:625px;width:409px;height:18px;background:linear-gradient(#585858,#3e3e3e);border-top:1px solid #2a2a2a;border-bottom:1px solid #222"></div>
<div class="t " style="left:1519px;top:626px;font-size:12px;letter-spacing:1.027px;font-weight:bold;color:#fff;">Template</div>
<svg style="left:1585px;top:630px" width="5" height="8"><path d="M0 3h5L2.500 0zM0 5h5L2.500 8z" fill="#ccc"/></svg>
<div class="a" style="left:1592px;top:626px;width:1px;height:16px;background:#2a2a2a"></div>
<div class="a" style="left:1596px;top:632px;width:316px;height:1px;background:#999"></div>
<div class="a" style="left:1596px;top:635px;width:316px;height:1px;background:#999"></div>
<div class="a" style="left:1596px;top:633px;width:316px;height:1px;background:#2a2a2a"></div>
<div class="a" style="left:1596px;top:636px;width:316px;height:1px;background:#2a2a2a"></div>
<div class="a" style="left:1511px;top:643px;width:409px;height:375px;background:#313131"></div>
<div class="a" style="left:1530px;top:645px;width:371px;height:371px;background-color:#fff;background-image:conic-gradient(#cbcbcb 25%,#fff 0 50%,#cbcbcb 0 75%,#fff 0);background-size:32px 32px;background-position:-7px -6px"></div>
<svg style="left:1530px;top:645px;overflow:hidden" width="371" height="371" viewBox="1530 645 371 371"><defs><filter id="pb" x="-10%" y="-10%" width="120%" height="120%"><feGaussianBlur stdDeviation="4.500"/></filter><linearGradient id="pg" x1="0" y1="0" x2="0" y2="1"><stop offset="0" stop-color="#fff"/><stop offset=".12" stop-color="#fff"/><stop offset=".2" stop-color="#f5f5f5"/><stop offset="1" stop-color="#f4f4f4"/></linearGradient><filter id="pb2"><feGaussianBlur stdDeviation="2.600"/></filter></defs><path d="M1629 674H1802C1829 674 1873 718 1873 745V918C1873 945 1829 989 1802 989H1629C1602 989 1558 945 1558 918V745C1558 718 1602 674 1629 674Z" fill="#2a2a2a" filter="url(#pb)" opacity=".8"/><path d="M1628 677H1802M1628 986H1802" stroke="#111" stroke-width="5" filter="url(#pb2)" opacity=".75"/><path d="M1632 680H1799C1825 680 1867 722 1867 748V915C1867 941 1825 983 1799 983H1632C1606 983 1564 941 1564 915V748C1564 722 1606 680 1632 680Z" fill="url(#pg)" filter="url(#pb2)"/><path d="M1644.500 648V1007M1783.500 648V1007M1530 762.500H1897M1530 901.500H1897" stroke="#3a3a3a" stroke-width="1" stroke-dasharray="8 5" fill="none"/><text x="1715" y="996" text-anchor="middle" textLength="60" lengthAdjust="spacingAndGlyphs" style="font-family:Liberation Sans;font-weight:bold;font-size:12px;paint-order:stroke;stroke:#000;stroke-width:2.500px" fill="#fff">Template</text><text x="1715" y="1009.500" text-anchor="middle" textLength="121" lengthAdjust="spacingAndGlyphs" style="font-family:Liberation Sans;font-weight:bold;font-size:12px;paint-order:stroke;stroke:#000;stroke-width:2.500px" fill="#fff">Image Size: 32x32</text></svg>
<div class="a" style="left:0px;top:1040px;width:1920px;height:40px;background:#000"></div>
<div class="a" style="left:735px;top:1040px;width:48px;height:40px;background:#333"></div>
<div class="a" style="left:249px;top:1078px;width:39px;height:2px;background:#f3c594"></div>
<div class="a" style="left:298px;top:1078px;width:39px;height:2px;background:#f3c594"></div>
<div class="a" style="left:592px;top:1078px;width:38px;height:2px;background:#f3c594"></div>
<div class="a" style="left:735px;top:1078px;width:48px;height:2px;background:#f3c594"></div>
<div class="a" style="left:788px;top:1078px;width:40px;height:2px;background:#f3c594"></div>
<div class="a" style="left:837px;top:1078px;width:40px;height:2px;background:#f3c594"></div>
<div class="a" style="left:1327px;top:1078px;width:40px;height:2px;background:#f3c594"></div>
<svg style="left:12.0px;top:1048.0px" width="24" height="24" viewBox="0 0 24 24"><path d="M4 6.500l7-1v6.200H4zM12 5.300l8-1.200v7.600h-8zM4 12.700h7v6.200l-7-1zM12 12.700h8v7.600l-8-1.200z" fill="#fff"/></svg>
<svg style="left:60.0px;top:1048.0px" width="24" height="24" viewBox="0 0 24 24"><circle cx="14" cy="9.500" r="5" fill="none" stroke="#fff" stroke-width="1.500"/><path d="M10.500 13l-6 6.500" stroke="#fff" stroke-width="1.600"/></svg>
<svg style="left:108.0px;top:1048.0px" width="24" height="24" viewBox="0 0 24 24"><rect x="6" y="6" width="12" height="12" fill="none" stroke="#fff" stroke-width="1.300"/><path d="M4 7.500h-1.500v9H4M20 7.500h1.500v9H20" fill="none" stroke="#fff" stroke-width="1.300"/></svg>
<svg style="left:158.0px;top:1048.0px" width="24" height="24" viewBox="0 0 24 24"><rect x="3.500" y="1" width="17" height="22" fill="#fff"/><rect x="5.500" y="3" width="13" height="5" fill="#000"/><g fill="#000"><rect x="5.500" y="10" width="2.500" height="2.500"/><rect x="9.200" y="10" width="2.500" height="2.500"/><rect x="12.900" y="10" width="2.500" height="2.500"/><rect x="16.500" y="10" width="2.500" height="2.500"/><rect x="5.500" y="14" width="2.500" height="2.500"/><rect x="9.200" y="14" width="2.500" height="2.500"/><rect x="12.900" y="14" width="2.500" height="2.500"/><rect x="16.500" y="14" width="2.500" height="2.500"/><rect x="5.500" y="18" width="2.500" height="2.500"/><rect x="9.200" y="18" width="2.500" height="2.500"/><rect x="12.900" y="18" width="2.500" height="2.500"/><rect x="16.500" y="18" width="2.500" height="2.500"/></g></svg>
<svg style="left:208.0px;top:1048.0px" width="24" height="24" viewBox="0 0 24 24"><rect x="1" y="3" width="21" height="16" fill="#3a3a3a" stroke="#999"/><path d="M4 7l2.500 2L4 11M8 11h3" stroke="#ddd" fill="none"/><path d="M9 15l5 5 8-9-3-2-5.500 6-2.500-2.500z" fill="#3aa04a"/><path d="M9 15l2-2 2.500 2.500-1.500 2z" fill="#d84a2a"/><path d="M15 13l4-4 3 2-4 5z" fill="#3a7ad8"/></svg>
<svg style="left:256.0px;top:1048.0px" width="24" height="24" viewBox="0 0 24 24"><path d="M2 5h8l2 2h10v3H2z" fill="#e8b64c"/><rect x="2" y="8" width="20" height="12" fill="#f8d776"/><path d="M7 14h10v6H7z" fill="#3aa0e8"/><rect x="9.500" y="16.500" width="5" height="3.500" fill="#f8d776"/></svg>
<svg style="left:305.0px;top:1048.0px" width="24" height="24" viewBox="0 0 24 24"><circle cx="12" cy="12" r="10.500" fill="#e33b2e"/><path d="M12 12L2.900 6.800A10.500 10.500 0 0 0 10 22.300z" fill="#2da94f"/><path d="M12 12l-2 10.300A10.500 10.500 0 0 0 21.100 6.800z" fill="#fdd23e"/><path d="M12 7h9.200A10.500 10.500 0 0 0 2.900 6.800L7.500 12z" fill="#e33b2e"/><circle cx="12" cy="12" r="4.800" fill="#fff"/><circle cx="12" cy="12" r="3.800" fill="#4587f4"/></svg>
<svg style="left:354.0px;top:1048.0px" width="24" height="24" viewBox="0 0 24 24"><path d="M12 1.500l6 15H6z" fill="#f48b00"/><path d="M9.800 7h4.400l1.200 3H8.600zM7.400 13h9.200l1 2.500H6.400z" fill="#fff"/><path d="M3 17h18l1.500 5h-21z" fill="#f48b00"/></svg>
<svg style="left:403.0px;top:1048.0px" width="24" height="24" viewBox="0 0 24 24"><rect x="9" y="4" width="13" height="16" fill="#fff" stroke="#2a5699" stroke-width="1"/><path d="M12 7.500h8M12 10.500h8M12 13.500h8M12 16.500h8" stroke="#2a5699" stroke-width="1.200"/><path d="M1 3.500l13-2.500v22L1 20.500z" fill="#2a5699"/><text x="7.500" y="16.500" text-anchor="middle" style="font-family:Liberation Sans;font-weight:bold;font-size:11px" fill="#fff">W</text></svg>
<svg style="left:452.0px;top:1048.0px" width="24" height="24" viewBox="0 0 24 24"><rect x="9" y="4" width="13" height="16" fill="#fff" stroke="#1e7145" stroke-width="1"/><path d="M12 7.500h8M12 10.500h8M12 13.500h8M12 16.500h8" stroke="#1e7145" stroke-width="1.200"/><path d="M1 3.500l13-2.500v22L1 20.500z" fill="#1e7145"/><text x="7.500" y="16.500" text-anchor="middle" style="font-family:Liberation Sans;font-weight:bold;font-size:11px" fill="#fff">X</text></svg>
<svg style="left:501.0px;top:1048.0px" width="24" height="24" viewBox="0 0 24 24"><rect x="9" y="4" width="13" height="16" fill="#fff" stroke="#d24625" stroke-width="1"/><path d="M12 7.500h8M12 10.500h8M12 13.500h8M12 16.500h8" stroke="#d24625" stroke-width="1.200"/><path d="M1 3.500l13-2.500v22L1 20.500z" fill="#d24625"/><text x="7.500" y="16.500" text-anchor="middle" style="font-family:Liberation Sans;font-weight:bold;font-size:11px" fill="#fff">P</text></svg>
<svg style="left:550.0px;top:1048.0px" width="24" height="24" viewBox="0 0 24 24"><rect x="9" y="4" width="13" height="16" fill="#fff" stroke="#7b2fa8" stroke-width="1"/><path d="M12 7.500h8M12 10.500h8M12 13.500h8M12 16.500h8" stroke="#7b2fa8" stroke-width="1.200"/><path d="M1 3.500l13-2.500v22L1 20.500z" fill="#7b2fa8"/><text x="7.500" y="16.500" text-anchor="middle" style="font-family:Liberation Sans;font-weight:bold;font-size:11px" fill="#fff">N</text></svg>
<svg style="left:599.0px;top:1048.0px" width="24" height="24" viewBox="0 0 24 24"><rect x="2" y="2" width="18" height="20" fill="#f4f8e0" stroke="#8a8"/><rect x="2" y="2" width="18" height="4" fill="#9c6"/><path d="M5 10v8M8 12h6M14 12v5" stroke="#333"/><path d="M12 16l9-13 2 1.500-9 13-3 1z" fill="#e8a030" stroke="#a60" stroke-width=".6"/></svg>
<svg style="left:651px;top:1048px" width="20.5" height="22.1" viewBox="0 0 21 22.600"><path d="M.8 11.300L16.500 .3Q19.800-.3 20.300 3L20.800 19.600Q20.300 22.900 17 22.300Z" fill="#262626"/><path d="M4.400 9.800L16.800 1.600 17.700 3.100 12.500 10.100ZM4.400 12.800L16.800 21 17.700 19.500 12.500 12.500ZM14.400 11.300L18.700 5 19 17.600Z" fill="#fff"/></svg>
<svg style="left:699px;top:1048px" width="20.5" height="22.1" viewBox="0 0 21 22.600"><path d="M.8 11.300L16.500 .3Q19.800-.3 20.300 3L20.800 19.600Q20.300 22.900 17 22.300Z" fill="#262626"/><path d="M4.400 9.800L16.800 1.600 17.700 3.100 12.500 10.100ZM4.400 12.800L16.800 21 17.700 19.500 12.500 12.500ZM14.400 11.300L18.700 5 19 17.600Z" fill="#fff"/></svg>
<svg style="left:747px;top:1048px" width="20.5" height="22.1" viewBox="0 0 21 22.600"><path d="M.8 11.300L16.500 .3Q19.800-.3 20.300 3L20.800 19.600Q20.300 22.900 17 22.300Z" fill="#262626"/><path d="M4.400 9.800L16.800 1.600 17.700 3.100 12.500 10.100ZM4.400 12.800L16.800 21 17.700 19.500 12.500 12.500ZM14.400 11.300L18.700 5 19 17.600Z" fill="#fff"/></svg>
<svg style="left:796.0px;top:1048.0px" width="24" height="24" viewBox="0 0 24 24"><path d="M17 1.500l5 2.500v16l-5 2.500L7.500 14 4 17l-2-1.200V8.200L4 7l3.500 3z" fill="#865fc5"/><path d="M17 8v8l-5.500-4zM4 9.500v5L6.500 12z" fill="#000"/><path d="M17 1.500l5 2.500v16l-5 2.500z" fill="#a07ad8"/></svg>
<svg style="left:845.0px;top:1048.0px" width="24" height="24" viewBox="0 0 24 24"><circle cx="12" cy="12" r="10" fill="#1a6cf0"/><circle cx="12" cy="10" r="3.500" fill="#fff"/><rect x="10.500" y="11" width="3" height="7" rx="1.500" fill="#fff"/><circle cx="12" cy="10" r="1.300" fill="#1a6cf0"/></svg>
<svg style="left:893.0px;top:1048.0px" width="24" height="24" viewBox="0 0 24 24"><defs><linearGradient id="dbg" x1="0" x2="1"><stop offset="0" stop-color="#666"/><stop offset=".45" stop-color="#ccc"/><stop offset="1" stop-color="#555"/></linearGradient></defs><path d="M2 5v14c0 2 4.500 3.500 10 3.500S22 21 22 19V5z" fill="url(#dbg)"/><ellipse cx="12" cy="5" rx="10" ry="3.500" fill="#bbb"/><path d="M2 10c0 2 4.500 3.500 10 3.500S22 12 22 10M2 15c0 2 4.500 3.500 10 3.500S22 17 22 15" fill="none" stroke="#333" stroke-width="1.200"/></svg>
<svg style="left:942.0px;top:1048.0px" width="24" height="24" viewBox="0 0 24 24"><path d="M5 4l4 2 3-3 2 4 5-1-2 5 4 3-5 2 1 5-5-2-4 3-1-5-5-2 4-3z" fill="#c81e1e"/><text x="12" y="16" text-anchor="middle" style="font-family:Liberation Sans;font-weight:bold;font-size:7px" fill="#fc3">64</text><circle cx="7.500" cy="5.500" r="2" fill="#ddd"/></svg>
<svg style="left:991.0px;top:1048.0px" width="24" height="24" viewBox="0 0 24 24"><rect x="2" y="2.500" width="20" height="19" fill="#1d5fa8"/><rect x="2" y="2.500" width="20" height="19" fill="none" stroke="#0e3a6e"/><text x="12" y="16" text-anchor="middle" style="font-family:Liberation Sans;font-size:11px" fill="#fff">Ps</text></svg>
<svg style="left:1040.0px;top:1048.0px" width="24" height="24" viewBox="0 0 24 24"><rect x="2" y="5" width="17" height="18" rx="1.500" fill="#f0f0f0"/><circle cx="13" cy="10" r="8.500" fill="#2a4a5e"/><circle cx="13" cy="10" r="6.500" fill="#9cc6dc"/><path d="M13 10l6-3M13 10l-1 6.500M13 10L7.500 6M13 10l5 4.500M13 10L6.500 12.500M13 10l1-6.500" stroke="#1e3646" stroke-width="1.500"/><circle cx="13" cy="10" r="2" fill="#e8f4fa"/></svg>
<svg style="left:1089.0px;top:1048.0px" width="24" height="24" viewBox="0 0 24 24"><rect x="3" y="2" width="18" height="19" rx="3" fill="#f4f0f4" stroke="#4a3a4a" stroke-width="1"/><rect x="8.500" y="7" width="2.200" height="6" fill="#3a2a3a"/><rect x="14" y="7" width="2.200" height="6" fill="#3a2a3a"/></svg>
<svg style="left:1138.0px;top:1048.0px" width="24" height="24" viewBox="0 0 24 24"><rect x="1" y="1" width="22" height="22" fill="#d8183a"/><path d="M7 8h10v7h-3l3 3h-4l-3-3H7z" fill="#fff"/><rect x="10" y="10.500" width="4.500" height="2.500" fill="#d8183a"/></svg>
<svg style="left:1187.0px;top:1048.0px" width="24" height="24" viewBox="0 0 24 24"><path d="M2 5l16-2 2 14-16 4z" fill="#e87820"/><path d="M4.500 8l4-.5.500 4-4 .5zM10.500 7.200l4-.5.500 4-4 .5zM5.500 14.500l4-.7.500 4-4 .8zM11.500 13.500l4-.7.500 4-4 .8z" fill="#f8c060"/><path d="M14 20c3-1 5-3 5-7l3 1c0 4-3 7-6 8z" fill="#3a8ad8"/><path d="M17 2l3 10" stroke="#fc3" stroke-width="1.500"/></svg>
<svg style="left:1236.0px;top:1048.0px" width="24" height="24" viewBox="0 0 24 24"><circle cx="12" cy="12" r="10.500" fill="#222" stroke="#bbb" stroke-width="1.500"/><circle cx="12" cy="7.500" r="3.300" fill="none" stroke="#ccc" stroke-width="1.500"/><circle cx="8" cy="14.500" r="3.300" fill="none" stroke="#ccc" stroke-width="1.500"/><circle cx="16" cy="14.500" r="3.300" fill="none" stroke="#ccc" stroke-width="1.500"/></svg>
<svg style="left:1285.0px;top:1048.0px" width="24" height="24" viewBox="0 0 24 24"><rect x="1.500" y="1.500" width="21" height="21" fill="#b8141a" stroke="#7a0a0e" stroke-dasharray="1.500 1"/><text x="12" y="17.500" text-anchor="middle" style="font-family:Liberation Sans;font-weight:bold;font-style:italic;font-size:15px" fill="#fff">Fz</text></svg>
<svg style="left:1334.0px;top:1048.0px" width="24" height="24" viewBox="0 0 24 24"><path d="M12 2l10 10-10 10L2 12z" fill="#444" stroke="#ccc" stroke-width="1.200"/><path d="M15 5l-8 8h5l-3 6 8-8h-5z" fill="#f8a020"/></svg>
<svg style="left:1401.0px;top:1048.0px" width="24" height="24" viewBox="0 0 24 24"><path d="M6 15l6-6 6 6" stroke="#fff" stroke-width="1.300" fill="none"/></svg>
<div class="t" style="left:1426px;top:1052px;width:20px;text-align:center;color:#2fe02f;font-size:12px;letter-spacing:-.3px">42</div>
<div class="t" style="left:1450px;top:1052px;width:20px;text-align:center;color:#e8e020;font-size:12px;letter-spacing:-.3px">74</div>
<div class="t" style="left:1474px;top:1052px;width:20px;text-align:center;color:#e82020;font-size:12px;letter-spacing:-.3px">57</div>
<svg style="left:1500.0px;top:1052.0px" width="16" height="16" viewBox="0 0 16 16"><path d="M8 2l6 6-6 6-6-6z" fill="#444" stroke="#aaa" stroke-width=".8"/><path d="M10 3.500l-5 5h3l-2 4 5-5H8z" fill="#f8a020"/></svg>
<svg style="left:1525.0px;top:1052.0px" width="16" height="16" viewBox="0 0 16 16"><circle cx="8" cy="8" r="8" fill="#2f9ad8"/><path d="M3.500 8l8.500-3.500-1.500 7.500-2.500-2-1.500 1.500-.5-2.500z" fill="#fff"/></svg>
<svg style="left:1549.0px;top:1052.0px" width="16" height="16" viewBox="0 0 16 16"><circle cx="8" cy="8" r="8" fill="#1b2838"/><circle cx="8" cy="8" r="7.500" fill="none" stroke="#456" /><circle cx="10.500" cy="6" r="2.500" fill="none" stroke="#fff" stroke-width="1.200"/><path d="M1 9l4.500 2" stroke="#fff" stroke-width="1.800"/><circle cx="5.800" cy="11" r="1.700" fill="#fff"/></svg>
<svg style="left:1573.0px;top:1051.0px" width="16" height="18" viewBox="0 0 16 18"><path d="M3 3h11l-4 5h4L4 16l2.500-6H2z" fill="none" stroke="#fff" stroke-width="1.300"/></svg>
<svg style="left:1597.0px;top:1052.0px" width="16" height="16" viewBox="0 0 16 16"><path d="M3 3h3l1 1.500h2L10 3h3c2 2 3 6 2.500 9.500-1.500.5-2.500-1-3.500-3h-8c-1 2-2 3.500-3.500 3C0 9 1 5 3 3z" fill="#fff"/></svg>
<svg style="left:1621.0px;top:1052.0px" width="16" height="16" viewBox="0 0 16 16"><path d="M4.500 2L8 4.500 4.500 7 1 4.500zM11.500 2L15 4.500 11.500 7 8 4.500zM4.500 7L8 9.500 4.500 12 1 9.500zM11.500 7L15 9.500 11.500 12 8 9.500zM8 10.500l3 2.200-3 2.200-3-2.200z" fill="#fff"/></svg>
<svg style="left:1645.0px;top:1052.0px" width="16" height="16" viewBox="0 0 16 16"><path d="M4 13a3 3 0 0 1 .5-6 4 4 0 0 1 7.500-1 3.500 3.500 0 0 1 1 7z" fill="#fff"/></svg>
<svg style="left:1669.0px;top:1051.0px" width="16" height="18" viewBox="0 0 16 18"><rect x="3.500" y="5" width="7" height="12" rx="1" fill="none" stroke="#fff" stroke-width="1.200"/><rect x="5" y="1" width="4" height="4" fill="none" stroke="#fff"/><path d="M9 13l2 2 3-3" stroke="#fff" fill="none"/></svg>
<svg style="left:1692.5px;top:1052.0px" width="17" height="16" viewBox="0 0 17 16"><path d="M1 6h3l4-3.500v11L4 10H1z" fill="none" stroke="#fff" stroke-width="1.100"/><path d="M10 5.500a3.500 3.500 0 0 1 0 5M12 3.500a6.500 6.500 0 0 1 0 9M14 2a9 9 0 0 1 0 12" fill="none" stroke="#fff" stroke-width="1"/></svg>
<svg style="left:1717.0px;top:1052.0px" width="16" height="16" viewBox="0 0 16 16"><rect x="4" y="2" width="11" height="8" fill="none" stroke="#fff" stroke-width="1.200"/><path d="M9.500 10v3M6 13.500h7" stroke="#fff" stroke-width="1.200"/><rect x="1" y="6" width="4" height="8" fill="#000" stroke="#fff"/></svg>
<svg style="left:1740.5px;top:1051.5px" width="17" height="17" viewBox="0 0 17 17"><path d="M8 1l6 2v5c0 4-3 6.500-6 7.500C5 14.500 2 12 2 8V3z" fill="#fff"/><path d="M8 1v14.500M2 8h12" stroke="#000" stroke-width="1"/><circle cx="12.500" cy="13" r="3.500" fill="#2aa84a"/><path d="M11 13l1.200 1.200 2-2.400" stroke="#fff" fill="none"/></svg>
<div class="t" style="left:1763px;top:1044px;width:30px;text-align:center;color:#fff;font-size:12px;letter-spacing:-.2px">ESP</div>
<div class="t" style="left:1763px;top:1062px;width:30px;text-align:center;color:#fff;font-size:12px;letter-spacing:-.2px">ES</div>
<div class="t" style="left:1801px;top:1043px;width:60px;text-align:center;color:#fff;font-size:12px;letter-spacing:-.2px">10:25</div>
<div class="t" style="left:1801px;top:1061px;width:60px;text-align:center;color:#fff;font-size:12px;letter-spacing:-.2px">25/10/2017</div>
<svg style="left:1876.0px;top:1049.0px" width="22" height="22" viewBox="0 0 22 22"><path d="M3 3h16v12h-4v3.500L11.500 15H3z" fill="none" stroke="#fff" stroke-width="1.200"/></svg>
</div></body></html>
